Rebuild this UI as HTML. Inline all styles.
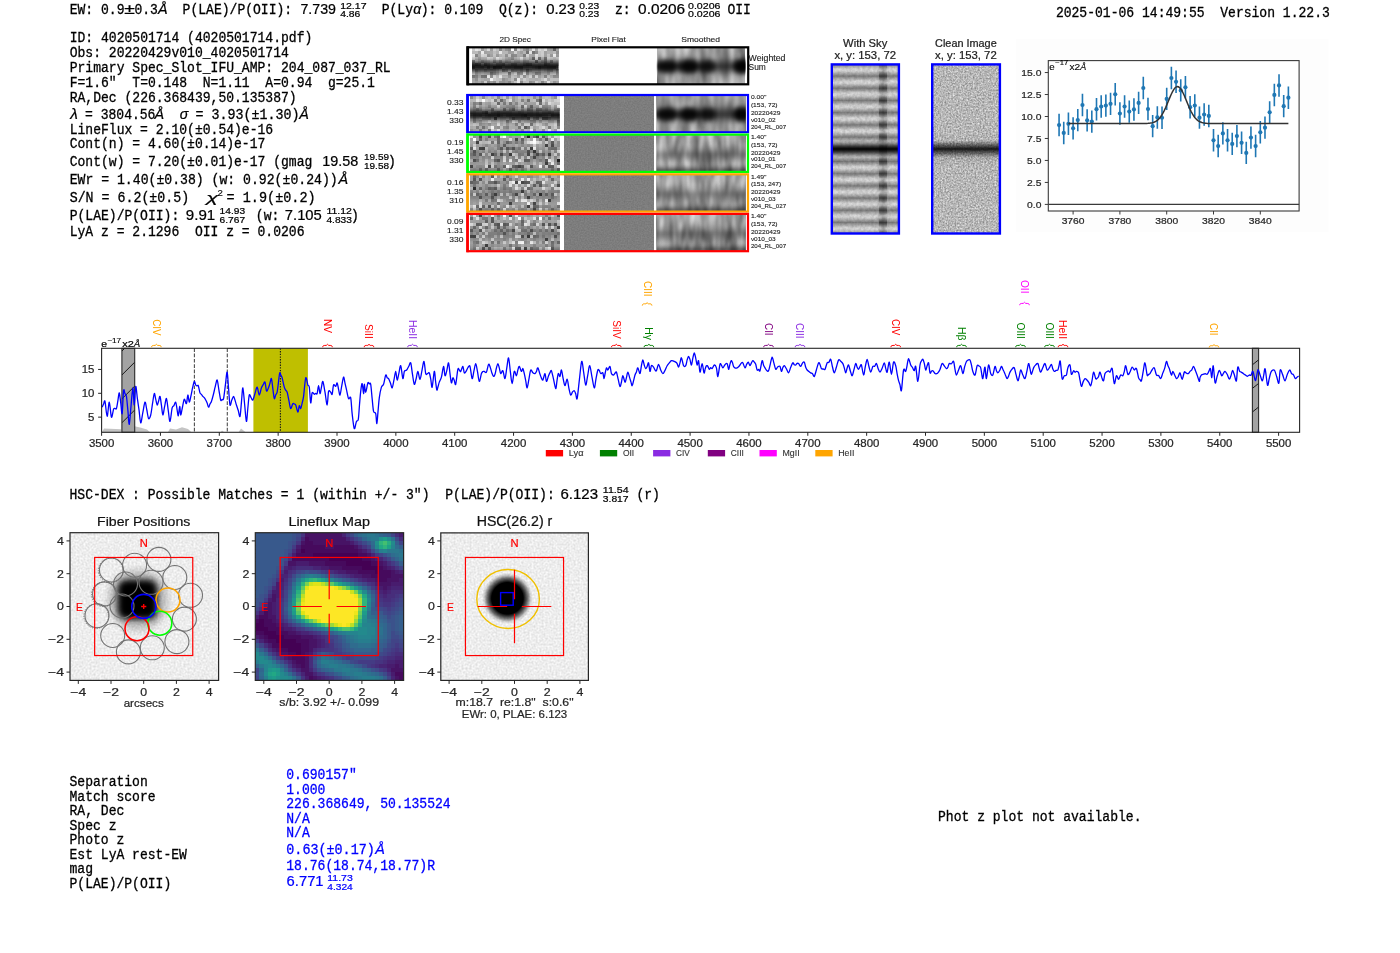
<!DOCTYPE html>
<html><head><meta charset="utf-8"><title>ELiXer report</title>
<style>html,body{margin:0;padding:0;background:#fff;overflow:hidden}svg{display:block}</style></head>
<body><svg width="1400" height="953" viewBox="0 0 1400 953">
<rect width="1400" height="953" fill="#fff"/>
<text x="69.7" y="13.9" font-family="Liberation Mono" font-size="14.04" fill="#000" stroke="#000" stroke-width="0.3" textLength="54.79" lengthAdjust="spacingAndGlyphs" text-anchor="start" xml:space="preserve">EW: 0.9</text>
<text x="124.3" y="13.9" font-family="Liberation Sans" font-size="13.78" fill="#000" stroke="#000" stroke-width="0.22" textLength="10.6" lengthAdjust="spacingAndGlyphs" text-anchor="start" xml:space="preserve">±</text>
<text x="134.4" y="13.9" font-family="Liberation Mono" font-size="14.04" fill="#000" stroke="#000" stroke-width="0.3" textLength="23.48" lengthAdjust="spacingAndGlyphs" text-anchor="start" xml:space="preserve">0.3</text>
<text x="158" y="13.9" font-family="Liberation Sans" font-size="13.78" fill="#000" stroke="#000" stroke-width="0.22" textLength="9.6" lengthAdjust="spacingAndGlyphs" text-anchor="start" xml:space="preserve" font-style="italic">Å</text>
<text x="182.6" y="13.9" font-family="Liberation Mono" font-size="14.04" fill="#000" stroke="#000" stroke-width="0.3" textLength="117.4" lengthAdjust="spacingAndGlyphs" text-anchor="start" xml:space="preserve">P(LAE)/P(OII): </text>
<text x="300.4" y="13.9" font-family="Liberation Sans" font-size="13.78" fill="#000" stroke="#000" stroke-width="0.22" textLength="35.6" lengthAdjust="spacingAndGlyphs" text-anchor="start" xml:space="preserve">7.739</text>
<text x="340.2" y="8.6" font-family="Liberation Sans" font-size="9.54" fill="#000" stroke="#000" stroke-width="0.22" textLength="26.3" lengthAdjust="spacingAndGlyphs" text-anchor="start" xml:space="preserve">12.17</text>
<text x="340.2" y="17.3" font-family="Liberation Sans" font-size="9.54" fill="#000" stroke="#000" stroke-width="0.22" textLength="20.2" lengthAdjust="spacingAndGlyphs" text-anchor="start" xml:space="preserve">4.86</text>
<text x="381.7" y="13.9" font-family="Liberation Mono" font-size="14.04" fill="#000" stroke="#000" stroke-width="0.3" textLength="31.31" lengthAdjust="spacingAndGlyphs" text-anchor="start" xml:space="preserve">P(Ly</text>
<text x="413.2" y="13.9" font-family="Liberation Sans" font-size="13.78" fill="#000" stroke="#000" stroke-width="0.22" textLength="8" lengthAdjust="spacingAndGlyphs" text-anchor="start" xml:space="preserve" font-style="italic">α</text>
<text x="420.7" y="13.9" font-family="Liberation Mono" font-size="14.04" fill="#000" stroke="#000" stroke-width="0.3" textLength="125.23" lengthAdjust="spacingAndGlyphs" text-anchor="start" xml:space="preserve">): 0.109  Q(z): </text>
<text x="546.2" y="13.9" font-family="Liberation Sans" font-size="13.78" fill="#000" stroke="#000" stroke-width="0.22" textLength="29" lengthAdjust="spacingAndGlyphs" text-anchor="start" xml:space="preserve">0.23</text>
<text x="579.3" y="8.6" font-family="Liberation Sans" font-size="9.54" fill="#000" stroke="#000" stroke-width="0.22" textLength="20" lengthAdjust="spacingAndGlyphs" text-anchor="start" xml:space="preserve">0.23</text>
<text x="579.3" y="17.3" font-family="Liberation Sans" font-size="9.54" fill="#000" stroke="#000" stroke-width="0.22" textLength="20" lengthAdjust="spacingAndGlyphs" text-anchor="start" xml:space="preserve">0.23</text>
<text x="615" y="13.9" font-family="Liberation Mono" font-size="14.04" fill="#000" stroke="#000" stroke-width="0.3" textLength="23.48" lengthAdjust="spacingAndGlyphs" text-anchor="start" xml:space="preserve">z: </text>
<text x="638.1" y="13.9" font-family="Liberation Sans" font-size="13.78" fill="#000" stroke="#000" stroke-width="0.22" textLength="47" lengthAdjust="spacingAndGlyphs" text-anchor="start" xml:space="preserve">0.0206</text>
<text x="688" y="8.6" font-family="Liberation Sans" font-size="9.54" fill="#000" stroke="#000" stroke-width="0.22" textLength="32.5" lengthAdjust="spacingAndGlyphs" text-anchor="start" xml:space="preserve">0.0206</text>
<text x="688" y="17.3" font-family="Liberation Sans" font-size="9.54" fill="#000" stroke="#000" stroke-width="0.22" textLength="32.5" lengthAdjust="spacingAndGlyphs" text-anchor="start" xml:space="preserve">0.0206</text>
<text x="727.4" y="13.9" font-family="Liberation Mono" font-size="14.04" fill="#000" stroke="#000" stroke-width="0.3" textLength="23.48" lengthAdjust="spacingAndGlyphs" text-anchor="start" xml:space="preserve">OII</text>
<text x="1055.9" y="16.9" font-family="Liberation Mono" font-size="14.04" fill="#000" stroke="#000" stroke-width="0.3" textLength="273.93" lengthAdjust="spacingAndGlyphs" text-anchor="start" xml:space="preserve">2025-01-06 14:49:55  Version 1.22.3</text>
<text x="69.7" y="42.4" font-family="Liberation Mono" font-size="14.04" fill="#000" stroke="#000" stroke-width="0.3" textLength="242.63" lengthAdjust="spacingAndGlyphs" text-anchor="start" xml:space="preserve">ID: 4020501714 (4020501714.pdf)</text>
<text x="69.7" y="56.8" font-family="Liberation Mono" font-size="14.04" fill="#000" stroke="#000" stroke-width="0.3" textLength="219.15" lengthAdjust="spacingAndGlyphs" text-anchor="start" xml:space="preserve">Obs: 20220429v010_4020501714</text>
<text x="69.7" y="72" font-family="Liberation Mono" font-size="14.04" fill="#000" stroke="#000" stroke-width="0.3" textLength="320.89" lengthAdjust="spacingAndGlyphs" text-anchor="start" xml:space="preserve">Primary Spec_Slot_IFU_AMP: 204_087_037_RL</text>
<text x="69.7" y="87" font-family="Liberation Mono" font-size="14.04" fill="#000" stroke="#000" stroke-width="0.3" textLength="305.24" lengthAdjust="spacingAndGlyphs" text-anchor="start" xml:space="preserve">F=1.6"  T=0.148  N=1.11  A=0.94  g=25.1</text>
<text x="69.7" y="102" font-family="Liberation Mono" font-size="14.04" fill="#000" stroke="#000" stroke-width="0.3" textLength="226.97" lengthAdjust="spacingAndGlyphs" text-anchor="start" xml:space="preserve">RA,Dec (226.368439,50.135387)</text>
<text x="69.7" y="133.5" font-family="Liberation Mono" font-size="14.04" fill="#000" stroke="#000" stroke-width="0.3" textLength="203.49" lengthAdjust="spacingAndGlyphs" text-anchor="start" xml:space="preserve">LineFlux = 2.10(±0.54)e-16</text>
<text x="69.7" y="148.2" font-family="Liberation Mono" font-size="14.04" fill="#000" stroke="#000" stroke-width="0.3" textLength="195.67" lengthAdjust="spacingAndGlyphs" text-anchor="start" xml:space="preserve">Cont(n) = 4.60(±0.14)e-17</text>
<text x="70.2" y="118.5" font-family="Liberation Sans" font-size="13.78" fill="#000" stroke="#000" stroke-width="0.22" textLength="7.6" lengthAdjust="spacingAndGlyphs" text-anchor="start" xml:space="preserve" font-style="italic">λ</text>
<text x="85" y="118.5" font-family="Liberation Mono" font-size="14.04" fill="#000" stroke="#000" stroke-width="0.3" textLength="70.44" lengthAdjust="spacingAndGlyphs" text-anchor="start" xml:space="preserve">= 3804.56</text>
<text x="154.5" y="118.5" font-family="Liberation Sans" font-size="13.78" fill="#000" stroke="#000" stroke-width="0.22" textLength="9.6" lengthAdjust="spacingAndGlyphs" text-anchor="start" xml:space="preserve" font-style="italic">Å</text>
<text x="179.8" y="118.5" font-family="Liberation Sans" font-size="13.78" fill="#000" stroke="#000" stroke-width="0.22" textLength="8.6" lengthAdjust="spacingAndGlyphs" text-anchor="start" xml:space="preserve" font-style="italic">σ</text>
<text x="195.5" y="118.5" font-family="Liberation Mono" font-size="14.04" fill="#000" stroke="#000" stroke-width="0.3" textLength="104" lengthAdjust="spacingAndGlyphs" text-anchor="start" xml:space="preserve">= 3.93(±1.30)</text>
<text x="299.2" y="118.5" font-family="Liberation Sans" font-size="13.78" fill="#000" stroke="#000" stroke-width="0.22" textLength="9.6" lengthAdjust="spacingAndGlyphs" text-anchor="start" xml:space="preserve" font-style="italic">Å</text>
<text x="69.7" y="166.3" font-family="Liberation Mono" font-size="14.04" fill="#000" stroke="#000" stroke-width="0.3" textLength="250.45" lengthAdjust="spacingAndGlyphs" text-anchor="start" xml:space="preserve">Cont(w) = 7.20(±0.01)e-17 (gmag </text>
<text x="322.3" y="166.3" font-family="Liberation Sans" font-size="13.78" fill="#000" stroke="#000" stroke-width="0.22" textLength="36" lengthAdjust="spacingAndGlyphs" text-anchor="start" xml:space="preserve">19.58</text>
<text x="364" y="159.6" font-family="Liberation Sans" font-size="9.54" fill="#000" stroke="#000" stroke-width="0.22" textLength="25" lengthAdjust="spacingAndGlyphs" text-anchor="start" xml:space="preserve">19.59</text>
<text x="364" y="168.6" font-family="Liberation Sans" font-size="9.54" fill="#000" stroke="#000" stroke-width="0.22" textLength="25" lengthAdjust="spacingAndGlyphs" text-anchor="start" xml:space="preserve">19.58</text>
<text x="388" y="166.3" font-family="Liberation Mono" font-size="14.04" fill="#000" stroke="#000" stroke-width="0.3" textLength="7.83" lengthAdjust="spacingAndGlyphs" text-anchor="start" xml:space="preserve">)</text>
<text x="69.7" y="184.4" font-family="Liberation Mono" font-size="14.04" fill="#000" stroke="#000" stroke-width="0.3" textLength="268" lengthAdjust="spacingAndGlyphs" text-anchor="start" xml:space="preserve">EWr = 1.40(±0.38) (w: 0.92(±0.24))</text>
<text x="338.4" y="184.4" font-family="Liberation Sans" font-size="13.78" fill="#000" stroke="#000" stroke-width="0.22" textLength="9.6" lengthAdjust="spacingAndGlyphs" text-anchor="start" xml:space="preserve" font-style="italic">Å</text>
<text x="69.7" y="201.7" font-family="Liberation Mono" font-size="14.04" fill="#000" stroke="#000" stroke-width="0.3" textLength="119.5" lengthAdjust="spacingAndGlyphs" text-anchor="start" xml:space="preserve">S/N = 6.2(±0.5)</text>
<text x="206.3" y="202.3" font-family="Liberation Sans" font-size="13.25" fill="#000" stroke="#000" stroke-width="0.22" textLength="12" lengthAdjust="spacingAndGlyphs" text-anchor="start" xml:space="preserve" font-style="italic">χ</text>
<text x="217.6" y="196.3" font-family="Liberation Sans" font-size="9.33" fill="#000" stroke="#000" stroke-width="0.12" textLength="5.4" lengthAdjust="spacingAndGlyphs" text-anchor="start" xml:space="preserve">2</text>
<text x="226.6" y="201.7" font-family="Liberation Mono" font-size="14.04" fill="#000" stroke="#000" stroke-width="0.3" textLength="89" lengthAdjust="spacingAndGlyphs" text-anchor="start" xml:space="preserve">= 1.9(±0.2)</text>
<text x="69.7" y="220" font-family="Liberation Mono" font-size="14.04" fill="#000" stroke="#000" stroke-width="0.3" textLength="117.4" lengthAdjust="spacingAndGlyphs" text-anchor="start" xml:space="preserve">P(LAE)/P(OII): </text>
<text x="185.8" y="220" font-family="Liberation Sans" font-size="13.78" fill="#000" stroke="#000" stroke-width="0.22" textLength="29.4" lengthAdjust="spacingAndGlyphs" text-anchor="start" xml:space="preserve">9.91</text>
<text x="219.6" y="213.6" font-family="Liberation Sans" font-size="9.54" fill="#000" stroke="#000" stroke-width="0.22" textLength="25.5" lengthAdjust="spacingAndGlyphs" text-anchor="start" xml:space="preserve">14.93</text>
<text x="219.6" y="222.6" font-family="Liberation Sans" font-size="9.54" fill="#000" stroke="#000" stroke-width="0.22" textLength="25.5" lengthAdjust="spacingAndGlyphs" text-anchor="start" xml:space="preserve">6.767</text>
<text x="248" y="220" font-family="Liberation Mono" font-size="14.04" fill="#000" stroke="#000" stroke-width="0.3" textLength="39.13" lengthAdjust="spacingAndGlyphs" text-anchor="start" xml:space="preserve"> (w: </text>
<text x="284.8" y="220" font-family="Liberation Sans" font-size="13.78" fill="#000" stroke="#000" stroke-width="0.22" textLength="37" lengthAdjust="spacingAndGlyphs" text-anchor="start" xml:space="preserve">7.105</text>
<text x="326.4" y="213.6" font-family="Liberation Sans" font-size="9.54" fill="#000" stroke="#000" stroke-width="0.22" textLength="25.5" lengthAdjust="spacingAndGlyphs" text-anchor="start" xml:space="preserve">11.12</text>
<text x="326.4" y="222.6" font-family="Liberation Sans" font-size="9.54" fill="#000" stroke="#000" stroke-width="0.22" textLength="25.5" lengthAdjust="spacingAndGlyphs" text-anchor="start" xml:space="preserve">4.833</text>
<text x="351" y="220" font-family="Liberation Mono" font-size="14.04" fill="#000" stroke="#000" stroke-width="0.3" textLength="7.83" lengthAdjust="spacingAndGlyphs" text-anchor="start" xml:space="preserve">)</text>
<text x="69.7" y="236.4" font-family="Liberation Mono" font-size="14.04" fill="#000" stroke="#000" stroke-width="0.3" textLength="234.8" lengthAdjust="spacingAndGlyphs" text-anchor="start" xml:space="preserve">LyA z = 2.1296  OII z = 0.0206</text>
<text x="69.5" y="498.9" font-family="Liberation Mono" font-size="14.04" fill="#000" stroke="#000" stroke-width="0.3" textLength="493.08" lengthAdjust="spacingAndGlyphs" text-anchor="start" xml:space="preserve">HSC-DEX : Possible Matches = 1 (within +/- 3")  P(LAE)/P(OII): </text>
<text x="560.5" y="498.9" font-family="Liberation Sans" font-size="13.78" fill="#000" stroke="#000" stroke-width="0.22" textLength="37.5" lengthAdjust="spacingAndGlyphs" text-anchor="start" xml:space="preserve">6.123</text>
<text x="602.8" y="493.4" font-family="Liberation Sans" font-size="9.54" fill="#000" stroke="#000" stroke-width="0.22" textLength="25.8" lengthAdjust="spacingAndGlyphs" text-anchor="start" xml:space="preserve">11.54</text>
<text x="602.8" y="502.4" font-family="Liberation Sans" font-size="9.54" fill="#000" stroke="#000" stroke-width="0.22" textLength="25.8" lengthAdjust="spacingAndGlyphs" text-anchor="start" xml:space="preserve">3.817</text>
<text x="628.6" y="498.9" font-family="Liberation Mono" font-size="14.04" fill="#000" stroke="#000" stroke-width="0.3" textLength="31.31" lengthAdjust="spacingAndGlyphs" text-anchor="start" xml:space="preserve"> (r)</text>
<text x="69.5" y="786.2" font-family="Liberation Mono" font-size="14.04" fill="#000" stroke="#000" stroke-width="0.3" textLength="78.27" lengthAdjust="spacingAndGlyphs" text-anchor="start" xml:space="preserve">Separation</text>
<text x="69.5" y="800.5" font-family="Liberation Mono" font-size="14.04" fill="#000" stroke="#000" stroke-width="0.3" textLength="86.09" lengthAdjust="spacingAndGlyphs" text-anchor="start" xml:space="preserve">Match score</text>
<text x="69.5" y="815.3" font-family="Liberation Mono" font-size="14.04" fill="#000" stroke="#000" stroke-width="0.3" textLength="54.79" lengthAdjust="spacingAndGlyphs" text-anchor="start" xml:space="preserve">RA, Dec</text>
<text x="69.5" y="829.8" font-family="Liberation Mono" font-size="14.04" fill="#000" stroke="#000" stroke-width="0.3" textLength="46.96" lengthAdjust="spacingAndGlyphs" text-anchor="start" xml:space="preserve">Spec z</text>
<text x="69.5" y="844.4" font-family="Liberation Mono" font-size="14.04" fill="#000" stroke="#000" stroke-width="0.3" textLength="54.79" lengthAdjust="spacingAndGlyphs" text-anchor="start" xml:space="preserve">Photo z</text>
<text x="69.5" y="858.8" font-family="Liberation Mono" font-size="14.04" fill="#000" stroke="#000" stroke-width="0.3" textLength="117.4" lengthAdjust="spacingAndGlyphs" text-anchor="start" xml:space="preserve">Est LyA rest-EW</text>
<text x="69.5" y="873.3" font-family="Liberation Mono" font-size="14.04" fill="#000" stroke="#000" stroke-width="0.3" textLength="23.48" lengthAdjust="spacingAndGlyphs" text-anchor="start" xml:space="preserve">mag</text>
<text x="69.5" y="888.4" font-family="Liberation Mono" font-size="14.04" fill="#000" stroke="#000" stroke-width="0.3" textLength="101.75" lengthAdjust="spacingAndGlyphs" text-anchor="start" xml:space="preserve">P(LAE)/P(OII)</text>
<text x="286.3" y="779.1" font-family="Liberation Mono" font-size="14.04" fill="#0000ff" stroke="#0000ff" stroke-width="0.3" textLength="70.44" lengthAdjust="spacingAndGlyphs" text-anchor="start" xml:space="preserve">0.690157"</text>
<text x="286.3" y="793.5" font-family="Liberation Mono" font-size="14.04" fill="#0000ff" stroke="#0000ff" stroke-width="0.3" textLength="39.13" lengthAdjust="spacingAndGlyphs" text-anchor="start" xml:space="preserve">1.000</text>
<text x="286.3" y="808.2" font-family="Liberation Mono" font-size="14.04" fill="#0000ff" stroke="#0000ff" stroke-width="0.3" textLength="164.36" lengthAdjust="spacingAndGlyphs" text-anchor="start" xml:space="preserve">226.368649, 50.135524</text>
<text x="286.3" y="822.6" font-family="Liberation Mono" font-size="14.04" fill="#0000ff" stroke="#0000ff" stroke-width="0.3" textLength="23.48" lengthAdjust="spacingAndGlyphs" text-anchor="start" xml:space="preserve">N/A</text>
<text x="286.3" y="837.2" font-family="Liberation Mono" font-size="14.04" fill="#0000ff" stroke="#0000ff" stroke-width="0.3" textLength="23.48" lengthAdjust="spacingAndGlyphs" text-anchor="start" xml:space="preserve">N/A</text>
<text x="286.3" y="869.9" font-family="Liberation Mono" font-size="14.04" fill="#0000ff" stroke="#0000ff" stroke-width="0.3" textLength="148.71" lengthAdjust="spacingAndGlyphs" text-anchor="start" xml:space="preserve">18.76(18.74,18.77)R</text>
<text x="286.3" y="853.8" font-family="Liberation Mono" font-size="14.04" fill="#0000ff" stroke="#0000ff" stroke-width="0.3" textLength="88.5" lengthAdjust="spacingAndGlyphs" text-anchor="start" xml:space="preserve">0.63(±0.17)</text>
<text x="375.2" y="853.8" font-family="Liberation Sans" font-size="13.78" fill="#0000ff" stroke="#0000ff" stroke-width="0.22" textLength="9.6" lengthAdjust="spacingAndGlyphs" text-anchor="start" xml:space="preserve" font-style="italic">Å</text>
<text x="286.6" y="886.1" font-family="Liberation Sans" font-size="13.78" fill="#0000ff" stroke="#0000ff" stroke-width="0.22" textLength="37" lengthAdjust="spacingAndGlyphs" text-anchor="start" xml:space="preserve">6.771</text>
<text x="327.3" y="881.2" font-family="Liberation Sans" font-size="9.54" fill="#0000ff" stroke="#0000ff" stroke-width="0.22" textLength="25.5" lengthAdjust="spacingAndGlyphs" text-anchor="start" xml:space="preserve">11.73</text>
<text x="327.3" y="890" font-family="Liberation Sans" font-size="9.54" fill="#0000ff" stroke="#0000ff" stroke-width="0.22" textLength="25.5" lengthAdjust="spacingAndGlyphs" text-anchor="start" xml:space="preserve">4.324</text>
<text x="938" y="821.4" font-family="Liberation Mono" font-size="14.04" fill="#000" stroke="#000" stroke-width="0.3" textLength="203.49" lengthAdjust="spacingAndGlyphs" text-anchor="start" xml:space="preserve">Phot z plot not available.</text>
<polygon points="102,432.3 104,428.6 121.4,429.2 121.4,432.3" fill="#c4c4c4"/>
<polygon points="134.7,432.3 134.7,426.2 140,427.5 147,429.5 150,432.3" fill="#c4c4c4"/>
<polygon points="167.9,432.3 170,428.5 176,429.4 182,427.3 188,429 191.4,432.3" fill="#c4c4c4"/>
<polygon points="220.7,432.3 222,430.5 224.3,432.3" fill="#c4c4c4"/>
<polygon points="238.6,432.3 241,428.6 245.7,432.3" fill="#c4c4c4"/>
<polygon points="121.9,432.3 123,428.5 134.7,426.5 134.7,432.3" fill="#c4c4c4"/>
<rect x="253.4" y="348.3" width="54.5" height="84" fill="#bfbf00"/>
<rect x="121.9" y="348.3" width="12.8" height="84" fill="#a3a3a3" stroke="#2a2a2a" stroke-width="1.1"/>
<clipPath id="hb121"><rect x="121.9" y="348.3" width="12.8" height="84"/></clipPath>
<path d="M121.9,422.8 L134.7,410 M121.9,398.9 L134.7,386.1 M121.9,375 L134.7,362.2 M121.9,351.1 L134.7,338.3 M121.9,327.2 L134.7,314.4 " stroke="#1a1a1a" stroke-width="1" clip-path="url(#hb121)"/>
<rect x="1252.4" y="348.3" width="6.2" height="84" fill="#a3a3a3" stroke="#2a2a2a" stroke-width="1.1"/>
<clipPath id="hb1252"><rect x="1252.4" y="348.3" width="6.2" height="84"/></clipPath>
<path d="M1252.4,412 L1258.6,407.04 M1252.4,388.4 L1258.6,383.44 M1252.4,364.8 L1258.6,359.84 M1252.4,341.2 L1258.6,336.24 M1252.4,317.6 L1258.6,312.64 " stroke="#1a1a1a" stroke-width="1" clip-path="url(#hb1252)"/>
<line x1="194.4" y1="348.3" x2="194.4" y2="432.3" stroke="#4d4d4d" stroke-width="1.1" stroke-dasharray="3.7,1.6"/>
<line x1="227.3" y1="348.3" x2="227.3" y2="432.3" stroke="#4d4d4d" stroke-width="1.1" stroke-dasharray="3.7,1.6"/>
<line x1="280.4" y1="348.3" x2="280.4" y2="432.3" stroke="#1a1a1a" stroke-width="1.1" stroke-dasharray="1.4,1.3"/>
<path d="M102.14,407.14 C102.37,406.65 103.11,404.95 103.57,404.04 C104.03,403.12 104.43,399.45 105,401.43 C105.57,403.41 106.46,416.31 107.14,416.43 C107.83,416.54 108.6,402.03 109.29,402.14 C109.97,402.26 110.74,416 111.43,417.14 C112.11,418.29 113,410.68 113.57,409.29 C114.14,407.89 114.54,408.55 115,408.44 C115.46,408.33 115.97,409.77 116.43,408.57 C116.89,407.37 117.4,403.44 117.86,400.93 C118.31,398.41 118.83,392.59 119.29,392.86 C119.74,393.13 120.26,399.3 120.71,402.62 C121.17,405.93 121.69,415.48 122.14,413.57 C122.6,411.67 123.11,393.91 123.57,390.71 C124.03,387.52 124.54,392.71 125,393.62 C125.46,394.54 125.97,393.78 126.43,396.43 C126.89,399.08 127.4,405.71 127.86,410.17 C128.31,414.63 128.77,425.04 129.29,424.29 C129.8,423.53 130.5,411.28 131.07,405.45 C131.64,399.62 132.34,387.93 132.86,387.86 C133.37,387.78 133.83,405.23 134.29,405 C134.74,404.77 135.22,387.46 135.71,386.43 C136.21,385.4 136.85,394.8 137.38,398.58 C137.91,402.36 138.51,406.18 139.05,410.07 C139.58,413.95 140.1,422.48 140.71,422.86 C141.32,423.23 142.17,415.72 142.86,412.41 C143.54,409.09 144.37,402.57 145,402.14 C145.63,401.72 146.21,407.13 146.79,409.75 C147.36,412.38 147.94,417.73 148.57,418.57 C149.2,419.41 150.09,417.38 150.71,415 C151.34,412.62 151.93,407.14 152.5,403.71 C153.07,400.28 153.77,394.3 154.29,393.57 C154.8,392.85 155.26,397.35 155.71,399.18 C156.17,401.01 156.69,404.68 157.14,405 C157.6,405.32 158.11,402.54 158.57,401.17 C159.03,399.8 159.54,395.79 160,396.43 C160.46,397.07 160.97,402.22 161.43,405.19 C161.89,408.16 162.34,414.81 162.86,415 C163.37,415.19 164.07,409.03 164.64,406.4 C165.21,403.77 165.86,397.97 166.43,398.57 C167,399.18 167.64,406.52 168.21,410.18 C168.79,413.84 169.37,421.8 170,421.43 C170.63,421.06 171.51,410.39 172.14,407.86 C172.77,405.33 173.36,406.54 173.93,405.63 C174.5,404.71 175.22,401.6 175.71,402.14 C176.21,402.69 176.59,406.87 177,409.04 C177.41,411.21 177.85,416.13 178.29,415.71 C178.72,415.3 179.33,406.54 179.71,406.43 C180.1,406.31 180.27,414.91 180.71,415 C181.16,415.09 181.93,409.51 182.5,407 C183.07,404.48 183.66,399.83 184.29,399.29 C184.91,398.74 185.86,404.26 186.43,403.57 C187,402.89 187.4,395.23 187.86,395 C188.31,394.77 188.79,402 189.29,402.14 C189.78,402.29 190.42,398.22 190.95,395.9 C191.49,393.59 192.09,390.01 192.62,387.7 C193.15,385.38 193.79,381.86 194.29,381.43 C194.78,381 195.28,384.29 195.71,385 C196.15,385.71 196.59,385.74 197,385.86 C197.41,385.97 197.81,384.59 198.29,385.71 C198.77,386.83 199.5,391.48 200,392.86 C200.5,394.24 200.97,393.78 201.43,394.35 C201.89,394.92 202.4,395.89 202.86,396.43 C203.31,396.97 203.83,397.14 204.29,397.72 C204.74,398.29 205.26,399.15 205.71,400 C206.17,400.85 206.69,401.89 207.14,403.04 C207.6,404.18 208.11,406.99 208.57,407.14 C209.03,407.3 209.54,404.93 210,404.02 C210.46,403.1 210.9,402.91 211.43,401.43 C211.96,399.94 212.72,397.09 213.33,394.73 C213.94,392.37 214.63,389.05 215.24,386.7 C215.85,384.34 216.55,379.45 217.14,380 C217.73,380.55 218.36,386.91 218.93,390.11 C219.5,393.31 220.2,398.5 220.71,400 C221.23,401.5 221.69,399.71 222.14,399.48 C222.6,399.25 223.06,400.86 223.57,398.57 C224.09,396.28 224.79,389.41 225.36,385.18 C225.93,380.95 226.63,371.59 227.14,372.14 C227.66,372.7 228.11,383.38 228.57,388.64 C229.03,393.9 229.49,403.17 230,405 C230.51,406.83 231.21,401.47 231.79,400.1 C232.36,398.73 233.06,396.43 233.57,396.43 C234.09,396.43 234.54,398.73 235,400.1 C235.46,401.47 235.91,403.37 236.43,405 C236.94,406.63 237.64,408.47 238.21,410.3 C238.79,412.13 239.49,417.69 240,416.43 C240.51,415.16 240.97,406.97 241.43,402.4 C241.89,397.82 242.34,387.51 242.86,387.86 C243.37,388.2 244.07,399.17 244.64,404.54 C245.21,409.91 245.91,420.88 246.43,421.43 C246.94,421.97 247.4,412.18 247.86,407.95 C248.31,403.73 248.77,396.65 249.29,395 C249.8,393.35 250.5,396.82 251.07,397.62 C251.64,398.42 252.23,400.66 252.86,400 C253.49,399.34 254.31,395.56 255,393.51 C255.69,391.45 256.46,386.9 257.14,387.14 C257.83,387.38 258.6,394.89 259.29,395 C259.97,395.11 260.8,389.5 261.43,387.86 C262.06,386.21 262.64,385.63 263.21,384.72 C263.79,383.81 264.49,381.18 265,382.14 C265.51,383.1 265.97,389.57 266.43,390.71 C266.89,391.86 267.34,390.31 267.86,389.29 C268.37,388.27 269.07,386.05 269.64,384.34 C270.21,382.63 270.91,377.85 271.43,378.57 C271.94,379.29 272.4,385.65 272.86,388.85 C273.31,392.05 273.83,397.59 274.29,398.57 C274.74,399.56 275.26,396.03 275.71,395 C276.17,393.97 276.71,394.13 277.14,392.14 C277.58,390.16 278.02,385.69 278.43,382.6 C278.84,379.52 279.31,374.01 279.71,372.86 C280.11,371.7 280.54,374.59 280.93,375.39 C281.32,376.19 281.61,375.98 282.14,377.86 C282.68,379.74 283.71,385.17 284.29,387.14 C284.86,389.11 285.26,389.37 285.71,390.17 C286.17,390.97 286.63,390.46 287.14,392.14 C287.66,393.82 288.36,398.05 288.93,400.68 C289.5,403.31 290.09,408.11 290.71,408.57 C291.34,409.03 292.29,404.3 292.86,403.57 C293.43,402.84 293.83,403.76 294.29,403.99 C294.74,404.22 295.14,403.7 295.71,405 C296.29,406.3 297.29,412.03 297.86,412.14 C298.43,412.26 298.83,406.29 299.29,405.71 C299.74,405.14 300.26,408.98 300.71,408.57 C301.17,408.16 301.69,405.12 302.14,403.17 C302.6,401.23 303,400.48 303.57,396.43 C304.14,392.38 305.03,379.69 305.71,377.86 C306.4,376.03 307.29,383.51 307.86,385 C308.43,386.49 308.83,384.29 309.29,387.14 C309.74,390 310.26,401.94 310.71,402.86 C311.17,403.77 311.57,394.23 312.14,392.86 C312.71,391.49 313.71,394.2 314.29,394.29 C314.86,394.37 315.26,393.51 315.71,393.39 C316.17,393.28 316.69,394.8 317.14,393.57 C317.6,392.34 318.11,385.71 318.57,385.71 C319.03,385.71 319.54,393.3 320,393.57 C320.46,393.84 320.97,389.33 321.43,387.39 C321.89,385.44 322.29,380.67 322.86,381.43 C323.43,382.19 324.31,388.37 325,392.14 C325.69,395.91 326.57,405.11 327.14,405 C327.71,404.89 328,393.49 328.57,391.43 C329.14,389.37 330.14,391.69 330.71,392.14 C331.29,392.6 331.69,395.43 332.14,394.29 C332.6,393.14 333,386.26 333.57,385 C334.14,383.74 335.14,386.77 335.71,386.43 C336.29,386.09 336.69,382.4 337.14,382.86 C337.6,383.31 338.11,387.35 338.57,389.29 C339.03,391.23 339.49,395.59 340,395 C340.51,394.41 341.21,388.44 341.79,385.58 C342.36,382.73 343.06,377.52 343.57,377.14 C344.09,376.76 344.54,381.26 345,383.2 C345.46,385.14 345.86,386.83 346.43,389.29 C347,391.75 347.89,397.2 348.57,398.57 C349.26,399.94 350.14,395.46 350.71,397.86 C351.29,400.26 351.57,408.66 352.14,413.57 C352.71,418.49 353.6,427.31 354.29,428.57 C354.97,429.83 355.79,422.91 356.43,421.43 C357.07,419.94 357.79,421.96 358.29,419.29 C358.78,416.61 359.11,409.17 359.5,404.71 C359.89,400.25 360.29,394.81 360.71,391.43 C361.14,388.05 361.69,383.23 362.14,383.57 C362.6,383.91 363.23,393.46 363.57,393.57 C363.91,393.69 363.94,384.51 364.29,384.29 C364.63,384.06 365.14,392.37 365.71,392.14 C366.29,391.91 367.29,384.19 367.86,382.86 C368.43,381.52 368.83,383.58 369.29,383.81 C369.74,384.04 370.26,381.93 370.71,384.29 C371.17,386.64 371.69,394.2 372.14,398.55 C372.6,402.89 373,409.02 373.57,411.43 C374.14,413.83 375.19,411.63 375.71,413.57 C376.24,415.51 376.48,424 376.86,423.57 C377.23,423.14 377.68,415.02 378.07,410.9 C378.46,406.79 378.75,401.66 379.29,397.86 C379.82,394.06 380.74,389.31 381.43,387.14 C382.11,384.97 382.89,386.23 383.57,384.29 C384.26,382.34 385.14,376.04 385.71,375 C386.29,373.96 386.69,377.19 387.14,377.76 C387.6,378.33 388.06,377.78 388.57,378.57 C389.09,379.37 389.79,381.24 390.36,382.73 C390.93,384.22 391.57,388.27 392.14,387.86 C392.71,387.44 393.36,382.78 393.93,380.15 C394.5,377.52 395.2,371.45 395.71,371.43 C396.23,371.4 396.63,379.73 397.14,380 C397.66,380.27 398.36,375.39 398.93,373.1 C399.5,370.82 400.09,364.84 400.71,365.71 C401.34,366.59 402.29,377.66 402.86,378.57 C403.43,379.49 403.83,372.71 404.29,371.43 C404.74,370.15 405.26,370.91 405.71,370.56 C406.17,370.22 406.63,370.02 407.14,369.29 C407.66,368.55 408.36,366.99 408.93,365.96 C409.5,364.93 410.14,361.5 410.71,362.86 C411.29,364.22 411.93,371.03 412.5,374.46 C413.07,377.88 413.71,383.56 414.29,384.29 C414.86,385.01 415.5,381.07 416.07,379.01 C416.64,376.96 417.23,371.38 417.86,371.43 C418.49,371.47 419.34,379.47 420,379.29 C420.66,379.1 421.36,373.15 422,370.29 C422.64,367.43 423.41,360.9 424,361.43 C424.59,361.95 425.15,371.62 425.71,373.57 C426.27,375.53 426.93,373.76 427.5,373.64 C428.07,373.53 428.77,372.02 429.29,372.86 C429.8,373.69 430.26,376.57 430.71,378.86 C431.17,381.14 431.57,388.33 432.14,387.14 C432.71,385.95 433.74,372.37 434.29,371.43 C434.83,370.48 435.16,378.27 435.57,381.24 C435.98,384.21 436.46,389.17 436.86,390 C437.26,390.83 437.68,387.71 438.07,386.45 C438.46,385.2 438.75,383.63 439.29,382.14 C439.82,380.65 440.74,379.66 441.43,377.14 C442.11,374.63 443,366.66 443.57,366.43 C444.14,366.2 444.49,375.05 445,375.71 C445.51,376.38 446.21,372.62 446.79,370.57 C447.36,368.51 448.06,362.36 448.57,362.86 C449.09,363.36 449.54,370.49 450,373.69 C450.46,376.89 450.97,382.19 451.43,382.86 C451.89,383.52 452.4,378.23 452.86,377.86 C453.31,377.48 453.83,379.48 454.29,380.51 C454.74,381.54 455.14,386.08 455.71,384.29 C456.29,382.49 457.29,371.56 457.86,369.29 C458.43,367.01 458.83,369.72 459.29,370.06 C459.74,370.4 460.14,372.01 460.71,371.43 C461.29,370.85 462.29,366.2 462.86,366.43 C463.43,366.66 463.75,372.1 464.29,372.86 C464.82,373.61 465.58,372.04 466.19,371.15 C466.8,370.27 467.49,368.09 468.1,367.33 C468.7,366.57 469.35,364.63 470,366.43 C470.65,368.23 471.51,377.84 472.14,378.57 C472.77,379.3 473.36,373.37 473.93,370.97 C474.5,368.57 475.14,363.47 475.71,363.57 C476.29,363.68 476.93,368.78 477.5,371.64 C478.07,374.49 478.66,381.12 479.29,381.43 C479.91,381.74 480.86,375.16 481.43,373.57 C482,371.98 482.4,371.85 482.86,371.5 C483.31,371.16 483.71,371.33 484.29,371.43 C484.86,371.53 485.74,373.29 486.43,372.14 C487.11,371 487.96,365.08 488.57,364.29 C489.18,363.49 489.7,365.78 490.24,367.19 C490.77,368.59 491.37,371.6 491.9,373.08 C492.44,374.56 493.08,376.24 493.57,376.43 C494.07,376.62 494.54,375.64 495,374.29 C495.46,372.93 495.97,369.68 496.43,367.96 C496.89,366.25 497.4,363.58 497.86,363.57 C498.31,363.56 498.83,366.32 499.29,367.92 C499.74,369.52 500.14,373.12 500.71,373.57 C501.29,374.02 502.17,369.91 502.86,370.71 C503.54,371.51 504.37,379.02 505,378.57 C505.63,378.13 506.21,371.25 506.79,367.93 C507.36,364.62 508,357.26 508.57,357.86 C509.14,358.46 509.79,367.57 510.36,371.68 C510.93,375.79 511.51,383.61 512.14,383.57 C512.77,383.53 513.6,372.69 514.29,371.43 C514.97,370.17 515.86,375.95 516.43,375.71 C517,375.48 517.4,371.47 517.86,369.98 C518.31,368.5 518.71,366.2 519.29,366.43 C519.86,366.66 520.86,371.09 521.43,371.43 C522,371.77 522.4,368.23 522.86,368.57 C523.31,368.91 523.83,371.65 524.29,373.57 C524.74,375.49 525.26,378.3 525.71,380.58 C526.17,382.87 526.63,388.1 527.14,387.86 C527.66,387.61 528.36,381.91 528.93,379.06 C529.5,376.2 530.09,371 530.71,370 C531.34,369 532.17,372.21 532.86,372.78 C533.54,373.35 534.43,373.77 535,373.57 C535.57,373.37 535.97,372.46 536.43,371.54 C536.89,370.63 537.29,367.42 537.86,367.86 C538.43,368.3 539.43,372.65 540,374.29 C540.57,375.92 540.97,377.17 541.43,378.09 C541.89,379 542.29,380.72 542.86,380 C543.43,379.28 544.43,373.34 545,373.57 C545.57,373.8 545.86,381.09 546.43,381.43 C547,381.77 548,377.12 548.57,375.71 C549.14,374.31 549.54,373.44 550,372.64 C550.46,371.84 550.86,369.63 551.43,370.71 C552,371.8 552.89,376.57 553.57,379.42 C554.26,382.28 555.17,388.37 555.71,388.57 C556.26,388.78 556.59,383.1 557,380.7 C557.41,378.3 557.81,374.26 558.29,373.57 C558.77,372.89 559.5,377 560,376.43 C560.5,375.86 560.91,369.61 561.43,370 C561.94,370.39 562.64,376.34 563.21,378.86 C563.79,381.37 564.37,385.65 565,385.71 C565.63,385.78 566.51,378.87 567.14,379.29 C567.77,379.7 568.36,385.82 568.93,388.33 C569.5,390.85 570.14,394.42 570.71,395 C571.29,395.58 571.93,392.64 572.5,391.95 C573.07,391.26 573.77,390.42 574.29,390.71 C574.8,391.01 575.26,392.54 575.71,393.8 C576.17,395.06 576.55,400.89 577.14,398.57 C577.74,396.25 578.7,385.25 579.43,379.3 C580.16,373.36 581.03,362.51 581.71,361.43 C582.4,360.34 583.07,368.75 583.71,372.52 C584.35,376.29 585.07,384.55 585.71,385 C586.35,385.45 587.07,378.4 587.71,375.32 C588.35,372.23 589.03,365.44 589.71,365.71 C590.4,365.99 591.27,373.47 592,377.02 C592.73,380.56 593.63,387.65 594.29,387.86 C594.94,388.06 595.5,381.17 596.07,378.31 C596.64,375.45 597.34,371.25 597.86,370 C598.37,368.75 598.83,369.92 599.29,370.5 C599.74,371.07 600.14,373.19 600.71,373.57 C601.29,373.95 602.33,372.06 602.86,372.86 C603.38,373.66 603.62,378.55 604,378.57 C604.38,378.59 604.83,374.72 605.21,373 C605.6,371.29 606.01,368.34 606.43,367.86 C606.85,367.38 607.29,370.23 607.86,370 C608.43,369.77 609.43,365.86 610,366.43 C610.57,367 610.86,372.2 611.43,373.57 C612,374.94 613,375.05 613.57,375 C614.14,374.95 614.54,373.69 615,373.23 C615.46,372.77 615.91,371.15 616.43,372.14 C616.94,373.14 617.64,377.17 618.21,379.46 C618.79,381.74 619.49,385.98 620,386.43 C620.51,386.88 620.97,383.96 621.43,382.25 C621.89,380.54 622.29,375.73 622.86,375.71 C623.43,375.7 624.43,381.84 625,382.14 C625.57,382.45 625.97,379.24 626.43,377.64 C626.89,376.04 627.33,372.11 627.86,372.14 C628.38,372.18 629.22,376.31 629.71,377.86 C630.21,379.41 630.54,380.57 630.93,381.83 C631.32,383.08 631.72,385.9 632.14,385.71 C632.57,385.53 633.11,382.38 633.57,380.66 C634.03,378.95 634.54,376.4 635,375 C635.46,373.6 635.97,373.03 636.43,371.89 C636.89,370.74 637.29,367.59 637.86,367.86 C638.43,368.13 639.43,373.93 640,373.57 C640.57,373.21 640.97,367.8 641.43,365.63 C641.89,363.45 642.4,360.05 642.86,360 C643.31,359.95 643.83,363.95 644.29,365.32 C644.74,366.7 645.26,368.39 645.71,368.57 C646.17,368.75 646.69,367.36 647.14,366.44 C647.6,365.53 648.11,362.06 648.57,362.86 C649.03,363.65 649.54,370.97 650,371.43 C650.46,371.89 650.86,366.4 651.43,365.71 C652,365.03 653,366.47 653.57,367.14 C654.14,367.81 654.54,369.33 655,369.9 C655.46,370.47 655.86,371.61 656.43,370.71 C657,369.82 657.89,364.4 658.57,364.29 C659.26,364.17 660.03,368.51 660.71,370 C661.4,371.49 662.17,373.5 662.86,373.57 C663.54,373.64 664.31,371.67 665,370.42 C665.69,369.16 666.46,366.91 667.14,365.71 C667.83,364.52 668.6,363.73 669.29,362.93 C669.97,362.13 670.74,361 671.43,360.71 C672.11,360.43 672.89,360.94 673.57,361.17 C674.26,361.39 675.14,361.75 675.71,362.14 C676.29,362.53 676.69,362.81 677.14,363.61 C677.6,364.41 678.11,367.26 678.57,367.14 C679.03,367.02 679.54,364.33 680,362.85 C680.46,361.36 680.86,357.4 681.43,357.86 C682,358.32 682.89,364.46 683.57,365.71 C684.26,366.97 685.14,366.64 685.71,365.71 C686.29,364.79 686.69,361.42 687.14,359.93 C687.6,358.45 688.11,356.48 688.57,356.43 C689.03,356.37 689.54,358.22 690,359.59 C690.46,360.96 690.97,365.23 691.43,365 C691.89,364.77 692.4,360.11 692.86,358.17 C693.31,356.23 693.83,352.88 694.29,352.86 C694.74,352.84 695.26,356.11 695.71,358.05 C696.17,359.99 696.69,364.57 697.14,365 C697.6,365.43 698.11,359.57 698.57,360.71 C699.03,361.86 699.43,371.69 700,372.14 C700.57,372.6 701.5,363.46 702.14,363.57 C702.78,363.69 703.51,372.01 704,372.86 C704.49,373.7 704.83,370.01 705.21,368.87 C705.6,367.73 706.01,366.12 706.43,365.71 C706.85,365.31 707.4,365.77 707.86,366.34 C708.31,366.91 708.83,369.08 709.29,369.29 C709.74,369.49 710.26,367.74 710.71,367.63 C711.17,367.51 711.57,368.99 712.14,368.57 C712.71,368.15 713.6,365.11 714.29,365 C714.97,364.89 715.86,366.03 716.43,367.86 C717,369.69 717.29,377 717.86,376.43 C718.43,375.86 719.43,366.09 720,364.29 C720.57,362.48 720.97,364.59 721.43,365.16 C721.89,365.74 722.29,367.94 722.86,367.86 C723.43,367.78 724.31,365.36 725,364.68 C725.69,363.99 726.57,362.83 727.14,363.57 C727.71,364.31 728.14,369.11 728.57,369.29 C729.01,369.46 729.45,366.02 729.86,364.65 C730.27,363.27 730.74,361.08 731.14,360.71 C731.54,360.35 731.97,361.42 732.36,362.34 C732.75,363.25 733.09,365.5 733.57,366.43 C734.05,367.35 734.79,367.89 735.36,368.12 C735.93,368.34 736.63,368.08 737.14,367.86 C737.66,367.63 738.11,367.18 738.57,366.73 C739.03,366.27 739.54,365.59 740,365 C740.46,364.41 740.97,363.36 741.43,363.01 C741.89,362.67 742.29,362.08 742.86,362.86 C743.43,363.63 744.39,367.62 745,367.86 C745.61,368.1 746.12,365.27 746.64,364.36 C747.17,363.44 747.75,361.93 748.29,362.14 C748.82,362.36 749.5,365.61 750,365.71 C750.5,365.82 750.97,363.62 751.43,362.82 C751.89,362.02 752.4,360.82 752.86,360.71 C753.31,360.61 753.83,361.58 754.29,362.15 C754.74,362.72 755.26,363.03 755.71,364.29 C756.17,365.54 756.69,369.19 757.14,370 C757.6,370.81 758.11,369.26 758.57,369.38 C759.03,369.49 759.43,372.1 760,370.71 C760.57,369.33 761.57,361.6 762.14,360.71 C762.71,359.83 763.11,364.05 763.57,365.19 C764.03,366.34 764.49,367 765,367.86 C765.51,368.72 766.21,370.11 766.79,370.57 C767.36,371.02 768,371.79 768.57,370.71 C769.14,369.64 769.79,366.01 770.36,363.84 C770.93,361.67 771.57,357.25 772.14,357.14 C772.71,357.04 773.36,361.23 773.93,363.17 C774.5,365.12 775.09,368.71 775.71,369.29 C776.34,369.86 777.17,367.24 777.86,366.78 C778.54,366.32 779.43,365.68 780,366.43 C780.57,367.17 780.97,371.25 781.43,371.43 C781.89,371.61 782.4,368.45 782.86,367.54 C783.31,366.62 783.71,365.5 784.29,365.71 C784.86,365.93 785.74,367.73 786.43,368.88 C787.11,370.02 787.89,373.12 788.57,372.86 C789.26,372.6 790.03,368.85 790.71,367.25 C791.4,365.65 792.29,363.25 792.86,362.86 C793.43,362.46 793.83,364.44 794.29,364.78 C794.74,365.13 795.26,365.22 795.71,365 C796.17,364.78 796.69,363.63 797.14,363.41 C797.6,363.18 798,363.09 798.57,363.57 C799.14,364.06 800.09,366.51 800.71,366.43 C801.34,366.34 801.93,363.73 802.5,363.05 C803.07,362.36 803.77,361.47 804.29,362.14 C804.8,362.81 805.26,365.99 805.71,367.24 C806.17,368.5 806.63,369.32 807.14,370 C807.66,370.68 808.36,371.04 808.93,371.5 C809.5,371.96 810.14,372.5 810.71,372.86 C811.29,373.21 811.93,373.15 812.5,373.72 C813.07,374.3 813.66,377.06 814.29,376.43 C814.91,375.79 815.74,371.93 816.43,369.76 C817.11,367.58 818,363.7 818.57,362.86 C819.14,362.01 819.54,363.57 820,364.48 C820.46,365.4 820.91,367.85 821.43,368.57 C821.94,369.29 822.64,368.89 823.21,369 C823.79,369.12 824.37,370.27 825,369.29 C825.63,368.3 826.51,363.97 827.14,362.86 C827.77,361.74 828.36,362.89 828.93,362.32 C829.5,361.74 830.14,358.53 830.71,359.29 C831.29,360.04 831.93,364.84 832.5,367.02 C833.07,369.19 833.66,372.87 834.29,372.86 C834.91,372.84 835.74,369 836.43,366.94 C837.11,364.88 837.89,360.92 838.57,360 C839.26,359.08 840.03,360.59 840.71,361.16 C841.4,361.74 842.29,362.5 842.86,363.57 C843.43,364.64 843.83,366.38 844.29,367.87 C844.74,369.35 845.26,372.83 845.71,372.86 C846.17,372.89 846.69,369.32 847.14,368.06 C847.6,366.81 848.06,364.52 848.57,365 C849.09,365.48 849.79,369.35 850.36,371.06 C850.93,372.78 851.57,375.93 852.14,375.71 C852.71,375.5 853.36,371.67 853.93,369.73 C854.5,367.78 855.2,363.98 855.71,363.57 C856.23,363.16 856.69,366.24 857.14,367.15 C857.6,368.07 858.11,369.36 858.57,369.29 C859.03,369.21 859.54,367.39 860,366.7 C860.46,366.01 860.86,363.67 861.43,365 C862,366.33 862.94,374.77 863.57,375 C864.2,375.23 864.79,368.94 865.36,366.42 C865.93,363.91 866.57,359.27 867.14,359.29 C867.71,359.3 868.36,364.47 868.93,366.52 C869.5,368.58 870.09,372.16 870.71,372.14 C871.34,372.13 872.23,367.37 872.86,366.43 C873.49,365.49 874.07,366.72 874.64,366.26 C875.21,365.8 875.86,363.17 876.43,363.57 C877,363.97 877.64,367.4 878.21,368.77 C878.79,370.15 879.37,372.22 880,372.14 C880.63,372.07 881.46,369.78 882.14,368.3 C882.83,366.81 883.71,362.85 884.29,362.86 C884.86,362.86 885.26,366.84 885.71,368.33 C886.17,369.81 886.57,373.13 887.14,372.14 C887.71,371.15 888.6,361.8 889.29,362.14 C889.97,362.49 890.74,374.29 891.43,374.29 C892.11,374.29 892.89,363.51 893.57,362.14 C894.26,360.77 895.14,363.84 895.71,365.71 C896.29,367.59 896.69,371.44 897.14,373.84 C897.6,376.24 898.11,378.95 898.57,380.71 C899.03,382.48 899.54,383.31 900,384.86 C900.46,386.42 900.86,392.81 901.43,390.43 C902,388.05 902.89,373.04 903.57,370 C904.26,366.96 905.14,372.22 905.71,371.43 C906.29,370.64 906.69,367.1 907.14,365.05 C907.6,362.99 908,358.58 908.57,358.57 C909.14,358.56 910.09,363.57 910.71,365 C911.34,366.43 911.93,366.57 912.5,367.48 C913.07,368.4 913.77,370.88 914.29,370.71 C914.8,370.55 915.14,364.71 915.71,366.43 C916.29,368.14 917.17,381.66 917.86,381.43 C918.54,381.2 919.43,368.28 920,365 C920.57,361.72 920.97,361.83 921.43,360.92 C921.89,360 922.4,358.89 922.86,359.29 C923.31,359.69 923.83,361.7 924.29,363.42 C924.74,365.13 925.26,369.61 925.71,370 C926.17,370.39 926.69,367 927.14,365.86 C927.6,364.71 928.11,361.74 928.57,362.86 C929.03,363.98 929.54,371.53 930,372.86 C930.46,374.19 930.97,371.5 931.43,371.16 C931.89,370.82 932.29,370.33 932.86,370.71 C933.43,371.1 934.43,373.09 935,373.57 C935.57,374.05 935.97,373.83 936.43,373.71 C936.89,373.6 937.29,373.55 937.86,372.86 C938.43,372.17 939.31,370.89 940,369.4 C940.69,367.92 941.46,364.13 942.14,363.57 C942.83,363.02 943.6,365.13 944.29,365.93 C944.97,366.73 945.86,368.37 946.43,368.57 C947,368.78 947.4,368.01 947.86,367.21 C948.31,366.41 948.71,364.12 949.29,363.57 C949.86,363.02 950.74,364.11 951.43,363.77 C952.11,363.43 953,360.53 953.57,361.43 C954.14,362.33 954.54,367.23 955,369.4 C955.46,371.57 955.86,374.9 956.43,375 C957,375.1 957.89,371.49 958.57,370.01 C959.26,368.52 960.03,365.14 960.71,365.71 C961.4,366.28 962.23,373.4 962.86,373.57 C963.49,373.74 964.07,368.72 964.64,366.77 C965.21,364.83 965.86,362.51 966.43,361.43 C967,360.35 967.64,360.23 968.21,360 C968.79,359.78 969.49,359.21 970,360 C970.51,360.79 970.97,363.1 971.43,364.93 C971.89,366.75 972.29,369.82 972.86,371.43 C973.43,373.04 974.31,375.91 975,375 C975.69,374.09 976.51,367.15 977.14,365.71 C977.77,364.28 978.36,365.67 978.93,366.02 C979.5,366.36 980.13,365.85 980.71,367.86 C981.3,369.87 982.08,377.72 982.57,378.57 C983.06,379.42 983.4,375.01 983.79,373.18 C984.17,371.35 984.58,366.28 985,367.14 C985.42,368.01 985.86,378.91 986.43,378.57 C987,378.23 987.89,365.8 988.57,365 C989.26,364.2 990.03,371.97 990.71,373.57 C991.4,375.17 992.17,376.14 992.86,375 C993.54,373.86 994.43,367.12 995,366.43 C995.57,365.74 995.97,369.66 996.43,370.68 C996.89,371.71 997.34,372.88 997.86,372.86 C998.37,372.83 999.07,371.56 999.64,370.53 C1000.21,369.5 1000.91,366.64 1001.43,366.43 C1001.94,366.22 1002.4,368.32 1002.86,369.23 C1003.31,370.15 1003.83,371.1 1004.29,372.14 C1004.74,373.19 1005.26,374.73 1005.71,375.75 C1006.17,376.78 1006.69,378.51 1007.14,378.57 C1007.6,378.63 1008.11,377.16 1008.57,376.14 C1009.03,375.11 1009.43,373.3 1010,372.14 C1010.57,370.99 1011.46,369.61 1012.14,368.92 C1012.83,368.23 1013.66,366.93 1014.29,367.86 C1014.91,368.78 1015.5,372.65 1016.07,374.7 C1016.64,376.76 1017.34,380.44 1017.86,380.71 C1018.37,380.99 1018.83,378.14 1019.29,376.42 C1019.74,374.71 1020.14,370.22 1020.71,370 C1021.29,369.78 1022.17,373.65 1022.86,375.02 C1023.54,376.39 1024.37,379.1 1025,378.57 C1025.63,378.04 1026.21,374.12 1026.79,371.72 C1027.36,369.32 1028.06,364.03 1028.57,363.57 C1029.09,363.12 1029.54,367.16 1030,368.87 C1030.46,370.59 1030.86,374.45 1031.43,374.29 C1032,374.12 1032.89,369.36 1033.57,367.86 C1034.26,366.35 1035.03,365.56 1035.71,364.88 C1036.4,364.19 1037.29,362.97 1037.86,363.57 C1038.43,364.17 1038.83,367.24 1039.29,368.61 C1039.74,369.98 1040.14,372.33 1040.71,372.14 C1041.29,371.95 1042.17,368.79 1042.86,367.42 C1043.54,366.05 1044.31,363.16 1045,363.57 C1045.69,363.98 1046.46,369.3 1047.14,370 C1047.83,370.7 1048.6,368.84 1049.29,367.92 C1049.97,367.01 1050.86,364.1 1051.43,364.29 C1052,364.47 1052.4,367.94 1052.86,369.08 C1053.31,370.23 1053.77,371.21 1054.29,371.43 C1054.8,371.65 1055.5,370.67 1056.07,370.44 C1056.64,370.21 1057.38,370.8 1057.86,370 C1058.34,369.2 1058.68,366.83 1059.07,365.46 C1059.46,364.09 1059.79,359.33 1060.29,361.43 C1060.78,363.53 1061.5,376.29 1062.14,378.57 C1062.78,380.86 1063.6,376.29 1064.29,375.71 C1064.97,375.14 1065.86,376.26 1066.43,375 C1067,373.74 1067.29,369.46 1067.86,367.86 C1068.43,366.26 1069.43,363.97 1070,365 C1070.57,366.03 1070.86,373.37 1071.43,374.29 C1072,375.2 1073,371.04 1073.57,370.71 C1074.14,370.39 1074.54,372.12 1075,372.23 C1075.46,372.35 1075.86,371.33 1076.43,371.43 C1077,371.53 1078,371.45 1078.57,372.86 C1079.14,374.26 1079.54,378.06 1080,380.23 C1080.46,382.4 1080.91,386.2 1081.43,386.43 C1081.94,386.65 1082.64,382.9 1083.21,381.64 C1083.79,380.38 1084.41,378.84 1085,378.57 C1085.59,378.31 1086.3,379.37 1086.9,379.98 C1087.51,380.6 1088.2,381.51 1088.81,382.43 C1089.42,383.34 1090.18,386.11 1090.71,385.71 C1091.25,385.32 1091.69,382.15 1092.14,379.98 C1092.6,377.81 1093,372.37 1093.57,372.14 C1094.14,371.92 1095.14,377.59 1095.71,378.57 C1096.29,379.56 1096.69,378.64 1097.14,378.3 C1097.6,377.95 1098.11,377.41 1098.57,376.43 C1099.03,375.44 1099.43,371.8 1100,372.14 C1100.57,372.49 1101.57,377.2 1102.14,378.57 C1102.71,379.94 1103.11,381.51 1103.57,380.71 C1104.03,379.91 1104.43,375.06 1105,373.57 C1105.57,372.09 1106.57,371.86 1107.14,371.43 C1107.71,371 1108.11,370.75 1108.57,370.87 C1109.03,370.98 1109.43,372.51 1110,372.14 C1110.57,371.78 1111.46,366.74 1112.14,368.57 C1112.83,370.4 1113.6,382.43 1114.29,383.57 C1114.97,384.71 1115.74,376.4 1116.43,375.71 C1117.11,375.03 1117.89,379.4 1118.57,379.29 C1119.26,379.17 1120.03,375.57 1120.71,375 C1121.4,374.43 1122.29,376.26 1122.86,375.71 C1123.43,375.16 1123.83,373.16 1124.29,371.56 C1124.74,369.96 1125.14,365.28 1125.71,365.71 C1126.29,366.15 1127.17,373.29 1127.86,374.29 C1128.54,375.29 1129.31,373.11 1130,371.96 C1130.69,370.82 1131.46,367.46 1132.14,367.14 C1132.83,366.83 1133.6,369.77 1134.29,370 C1134.97,370.23 1135.74,367.31 1136.43,368.57 C1137.11,369.83 1138,376.08 1138.57,377.86 C1139.14,379.64 1139.54,379.24 1140,379.69 C1140.46,380.15 1140.91,382.04 1141.43,380.71 C1141.94,379.39 1142.64,374.25 1143.21,371.4 C1143.79,368.54 1144.37,362.28 1145,362.86 C1145.63,363.43 1146.57,373.15 1147.14,375 C1147.71,376.85 1148.11,374.64 1148.57,374.41 C1149.03,374.18 1149.43,374.32 1150,373.57 C1150.57,372.83 1151.46,370.67 1152.14,369.75 C1152.83,368.84 1153.6,367.02 1154.29,367.86 C1154.97,368.7 1155.74,373.77 1156.43,375 C1157.11,376.23 1157.89,374.95 1158.57,375.52 C1159.26,376.09 1160.03,379 1160.71,378.57 C1161.4,378.14 1162.23,374.49 1162.86,372.86 C1163.49,371.22 1164.07,370.2 1164.64,368.37 C1165.21,366.54 1165.91,361.91 1166.43,361.43 C1166.94,360.95 1167.4,364.25 1167.86,365.39 C1168.31,366.53 1168.71,367.03 1169.29,368.57 C1169.86,370.11 1170.86,374.54 1171.43,375 C1172,375.46 1172.34,371.42 1172.86,371.43 C1173.37,371.44 1174.07,373.93 1174.64,375.07 C1175.21,376.21 1175.86,378.29 1176.43,378.57 C1177,378.86 1177.64,377.76 1178.21,376.84 C1178.79,375.93 1179.37,372.47 1180,372.86 C1180.63,373.25 1181.46,379.4 1182.14,379.29 C1182.83,379.17 1183.71,373.2 1184.29,372.14 C1184.86,371.09 1185.26,372.46 1185.71,372.69 C1186.17,372.91 1186.69,373.45 1187.14,373.57 C1187.6,373.7 1188.11,373.81 1188.57,373.47 C1189.03,373.12 1189.49,372.02 1190,371.43 C1190.51,370.84 1191.21,370.58 1191.79,369.78 C1192.36,368.98 1192.98,366.28 1193.57,366.43 C1194.16,366.57 1194.87,369.18 1195.48,370.68 C1196.09,372.17 1196.77,374.06 1197.38,375.78 C1197.99,377.5 1198.87,381.14 1199.29,381.43 C1199.7,381.72 1199.66,378.61 1200,377.58 C1200.34,376.55 1201.13,375.45 1201.43,375 C1201.73,374.55 1201.54,374.9 1201.89,374.75 C1202.24,374.59 1203.07,374.21 1203.62,374.05 C1204.17,373.89 1204.8,373.72 1205.35,373.76 C1205.9,373.79 1206.54,374.61 1207.08,374.27 C1207.62,373.94 1208.21,372.57 1208.73,371.66 C1209.26,370.76 1209.9,367.66 1210.39,368.61 C1210.88,369.55 1211.35,378.03 1211.8,377.58 C1212.26,377.12 1212.69,364.94 1213.22,365.77 C1213.75,366.61 1214.47,381.13 1215.11,382.77 C1215.75,384.41 1216.55,377.97 1217.23,376.01 C1217.91,374.04 1218.64,370.55 1219.36,370.5 C1220.08,370.44 1221.08,375.23 1221.72,375.69 C1222.36,376.15 1222.84,374.03 1223.37,373.35 C1223.9,372.67 1224.42,371.3 1225.02,371.44 C1225.63,371.58 1226.47,373.05 1227.15,374.26 C1227.83,375.47 1228.67,378.75 1229.27,378.99 C1229.88,379.24 1230.4,377.17 1230.93,375.81 C1231.45,374.45 1232.01,370.58 1232.58,370.5 C1233.14,370.42 1233.86,373.65 1234.47,375.31 C1235.07,376.97 1235.83,382.18 1236.36,380.88 C1236.88,379.58 1237.24,368.7 1237.77,367.19 C1238.3,365.68 1239.13,370.66 1239.66,371.44 C1240.19,372.22 1240.62,371.81 1241.08,372.04 C1241.53,372.27 1242,372.5 1242.49,372.86 C1242.98,373.21 1243.62,373.88 1244.15,374.25 C1244.67,374.63 1245.26,374.89 1245.8,375.22 C1246.34,375.54 1246.98,376.3 1247.53,376.27 C1248.08,376.24 1248.71,375.18 1249.26,375.01 C1249.81,374.84 1250.41,375.79 1250.99,375.22 C1251.57,374.65 1252.2,370.61 1252.88,371.44 C1253.56,372.27 1254.64,379.67 1255.24,380.41 C1255.85,381.15 1256.2,377.8 1256.66,376.07 C1257.11,374.33 1257.51,369.69 1258.07,369.55 C1258.64,369.42 1259.52,373.41 1260.2,375.22 C1260.88,377.03 1261.76,380.91 1262.32,380.88 C1262.89,380.86 1263.29,376.95 1263.74,375.06 C1264.19,373.18 1264.55,367.47 1265.16,369.08 C1265.76,370.69 1266.87,383.57 1267.52,385.13 C1268.16,386.69 1268.64,380.86 1269.17,378.82 C1269.7,376.78 1270.25,373.77 1270.82,372.38 C1271.39,371 1272.11,370.49 1272.71,370.19 C1273.31,369.89 1273.96,369.45 1274.6,370.5 C1275.24,371.54 1276.04,374.67 1276.72,376.71 C1277.4,378.75 1278.28,384.31 1278.85,383.24 C1279.41,382.17 1279.66,371.4 1280.26,370.02 C1280.87,368.65 1281.87,372.89 1282.63,374.63 C1283.38,376.37 1284.23,380.96 1284.99,380.88 C1285.74,380.81 1286.59,375.9 1287.35,374.16 C1288.1,372.43 1289.03,370.11 1289.71,370.02 C1290.39,369.94 1290.99,372.86 1291.6,373.63 C1292.2,374.4 1292.88,374.06 1293.48,374.84 C1294.09,375.62 1294.81,378.13 1295.37,378.52 C1295.94,378.91 1296.5,377.65 1297.03,377.27 C1297.55,376.9 1298.41,376.34 1298.68,376.16" fill="none" stroke="#0000ff" stroke-width="1.3" stroke-linejoin="round"/>
<rect x="101.6" y="348.3" width="1198" height="84" fill="none" stroke="#262626" stroke-width="1.1"/>
<line x1="101.6" y1="432.3" x2="101.6" y2="435.8" stroke="#262626" stroke-width="1"/>
<text x="101.6" y="447.3" font-family="Liberation Sans" font-size="10.6" fill="#262626" stroke="#262626" stroke-width="0.22" textLength="25.45" lengthAdjust="spacingAndGlyphs" text-anchor="middle" xml:space="preserve">3500</text>
<line x1="160.45" y1="432.3" x2="160.45" y2="435.8" stroke="#262626" stroke-width="1"/>
<text x="160.45" y="447.3" font-family="Liberation Sans" font-size="10.6" fill="#262626" stroke="#262626" stroke-width="0.22" textLength="25.45" lengthAdjust="spacingAndGlyphs" text-anchor="middle" xml:space="preserve">3600</text>
<line x1="219.3" y1="432.3" x2="219.3" y2="435.8" stroke="#262626" stroke-width="1"/>
<text x="219.3" y="447.3" font-family="Liberation Sans" font-size="10.6" fill="#262626" stroke="#262626" stroke-width="0.22" textLength="25.45" lengthAdjust="spacingAndGlyphs" text-anchor="middle" xml:space="preserve">3700</text>
<line x1="278.15" y1="432.3" x2="278.15" y2="435.8" stroke="#262626" stroke-width="1"/>
<text x="278.15" y="447.3" font-family="Liberation Sans" font-size="10.6" fill="#262626" stroke="#262626" stroke-width="0.22" textLength="25.45" lengthAdjust="spacingAndGlyphs" text-anchor="middle" xml:space="preserve">3800</text>
<line x1="337" y1="432.3" x2="337" y2="435.8" stroke="#262626" stroke-width="1"/>
<text x="337" y="447.3" font-family="Liberation Sans" font-size="10.6" fill="#262626" stroke="#262626" stroke-width="0.22" textLength="25.45" lengthAdjust="spacingAndGlyphs" text-anchor="middle" xml:space="preserve">3900</text>
<line x1="395.85" y1="432.3" x2="395.85" y2="435.8" stroke="#262626" stroke-width="1"/>
<text x="395.85" y="447.3" font-family="Liberation Sans" font-size="10.6" fill="#262626" stroke="#262626" stroke-width="0.22" textLength="25.45" lengthAdjust="spacingAndGlyphs" text-anchor="middle" xml:space="preserve">4000</text>
<line x1="454.7" y1="432.3" x2="454.7" y2="435.8" stroke="#262626" stroke-width="1"/>
<text x="454.7" y="447.3" font-family="Liberation Sans" font-size="10.6" fill="#262626" stroke="#262626" stroke-width="0.22" textLength="25.45" lengthAdjust="spacingAndGlyphs" text-anchor="middle" xml:space="preserve">4100</text>
<line x1="513.55" y1="432.3" x2="513.55" y2="435.8" stroke="#262626" stroke-width="1"/>
<text x="513.55" y="447.3" font-family="Liberation Sans" font-size="10.6" fill="#262626" stroke="#262626" stroke-width="0.22" textLength="25.45" lengthAdjust="spacingAndGlyphs" text-anchor="middle" xml:space="preserve">4200</text>
<line x1="572.4" y1="432.3" x2="572.4" y2="435.8" stroke="#262626" stroke-width="1"/>
<text x="572.4" y="447.3" font-family="Liberation Sans" font-size="10.6" fill="#262626" stroke="#262626" stroke-width="0.22" textLength="25.45" lengthAdjust="spacingAndGlyphs" text-anchor="middle" xml:space="preserve">4300</text>
<line x1="631.25" y1="432.3" x2="631.25" y2="435.8" stroke="#262626" stroke-width="1"/>
<text x="631.25" y="447.3" font-family="Liberation Sans" font-size="10.6" fill="#262626" stroke="#262626" stroke-width="0.22" textLength="25.45" lengthAdjust="spacingAndGlyphs" text-anchor="middle" xml:space="preserve">4400</text>
<line x1="690.1" y1="432.3" x2="690.1" y2="435.8" stroke="#262626" stroke-width="1"/>
<text x="690.1" y="447.3" font-family="Liberation Sans" font-size="10.6" fill="#262626" stroke="#262626" stroke-width="0.22" textLength="25.45" lengthAdjust="spacingAndGlyphs" text-anchor="middle" xml:space="preserve">4500</text>
<line x1="748.95" y1="432.3" x2="748.95" y2="435.8" stroke="#262626" stroke-width="1"/>
<text x="748.95" y="447.3" font-family="Liberation Sans" font-size="10.6" fill="#262626" stroke="#262626" stroke-width="0.22" textLength="25.45" lengthAdjust="spacingAndGlyphs" text-anchor="middle" xml:space="preserve">4600</text>
<line x1="807.8" y1="432.3" x2="807.8" y2="435.8" stroke="#262626" stroke-width="1"/>
<text x="807.8" y="447.3" font-family="Liberation Sans" font-size="10.6" fill="#262626" stroke="#262626" stroke-width="0.22" textLength="25.45" lengthAdjust="spacingAndGlyphs" text-anchor="middle" xml:space="preserve">4700</text>
<line x1="866.65" y1="432.3" x2="866.65" y2="435.8" stroke="#262626" stroke-width="1"/>
<text x="866.65" y="447.3" font-family="Liberation Sans" font-size="10.6" fill="#262626" stroke="#262626" stroke-width="0.22" textLength="25.45" lengthAdjust="spacingAndGlyphs" text-anchor="middle" xml:space="preserve">4800</text>
<line x1="925.5" y1="432.3" x2="925.5" y2="435.8" stroke="#262626" stroke-width="1"/>
<text x="925.5" y="447.3" font-family="Liberation Sans" font-size="10.6" fill="#262626" stroke="#262626" stroke-width="0.22" textLength="25.45" lengthAdjust="spacingAndGlyphs" text-anchor="middle" xml:space="preserve">4900</text>
<line x1="984.35" y1="432.3" x2="984.35" y2="435.8" stroke="#262626" stroke-width="1"/>
<text x="984.35" y="447.3" font-family="Liberation Sans" font-size="10.6" fill="#262626" stroke="#262626" stroke-width="0.22" textLength="25.45" lengthAdjust="spacingAndGlyphs" text-anchor="middle" xml:space="preserve">5000</text>
<line x1="1043.2" y1="432.3" x2="1043.2" y2="435.8" stroke="#262626" stroke-width="1"/>
<text x="1043.2" y="447.3" font-family="Liberation Sans" font-size="10.6" fill="#262626" stroke="#262626" stroke-width="0.22" textLength="25.45" lengthAdjust="spacingAndGlyphs" text-anchor="middle" xml:space="preserve">5100</text>
<line x1="1102.05" y1="432.3" x2="1102.05" y2="435.8" stroke="#262626" stroke-width="1"/>
<text x="1102.05" y="447.3" font-family="Liberation Sans" font-size="10.6" fill="#262626" stroke="#262626" stroke-width="0.22" textLength="25.45" lengthAdjust="spacingAndGlyphs" text-anchor="middle" xml:space="preserve">5200</text>
<line x1="1160.9" y1="432.3" x2="1160.9" y2="435.8" stroke="#262626" stroke-width="1"/>
<text x="1160.9" y="447.3" font-family="Liberation Sans" font-size="10.6" fill="#262626" stroke="#262626" stroke-width="0.22" textLength="25.45" lengthAdjust="spacingAndGlyphs" text-anchor="middle" xml:space="preserve">5300</text>
<line x1="1219.75" y1="432.3" x2="1219.75" y2="435.8" stroke="#262626" stroke-width="1"/>
<text x="1219.75" y="447.3" font-family="Liberation Sans" font-size="10.6" fill="#262626" stroke="#262626" stroke-width="0.22" textLength="25.45" lengthAdjust="spacingAndGlyphs" text-anchor="middle" xml:space="preserve">5400</text>
<line x1="1278.6" y1="432.3" x2="1278.6" y2="435.8" stroke="#262626" stroke-width="1"/>
<text x="1278.6" y="447.3" font-family="Liberation Sans" font-size="10.6" fill="#262626" stroke="#262626" stroke-width="0.22" textLength="25.45" lengthAdjust="spacingAndGlyphs" text-anchor="middle" xml:space="preserve">5500</text>
<line x1="98.1" y1="417.15" x2="101.6" y2="417.15" stroke="#262626" stroke-width="1"/>
<text x="94.5" y="420.75" font-family="Liberation Sans" font-size="10.6" fill="#262626" stroke="#262626" stroke-width="0.22" textLength="6.36" lengthAdjust="spacingAndGlyphs" text-anchor="end" xml:space="preserve">5</text>
<line x1="98.1" y1="393.3" x2="101.6" y2="393.3" stroke="#262626" stroke-width="1"/>
<text x="94.5" y="396.9" font-family="Liberation Sans" font-size="10.6" fill="#262626" stroke="#262626" stroke-width="0.22" textLength="12.72" lengthAdjust="spacingAndGlyphs" text-anchor="end" xml:space="preserve">10</text>
<line x1="98.1" y1="369.45" x2="101.6" y2="369.45" stroke="#262626" stroke-width="1"/>
<text x="94.5" y="373.05" font-family="Liberation Sans" font-size="10.6" fill="#262626" stroke="#262626" stroke-width="0.22" textLength="12.72" lengthAdjust="spacingAndGlyphs" text-anchor="end" xml:space="preserve">15</text>
<text x="101.2" y="346.9" font-family="Liberation Sans" font-size="9.96" fill="#000" stroke="#000" stroke-width="0.22" textLength="5.78" lengthAdjust="spacingAndGlyphs" text-anchor="start" xml:space="preserve">e</text>
<text x="107.2" y="342.7" font-family="Liberation Sans" font-size="6.97" fill="#000" stroke="#000" stroke-width="0.12" textLength="13.89" lengthAdjust="spacingAndGlyphs" text-anchor="start" xml:space="preserve">−17</text>
<text x="122.19" y="346.9" font-family="Liberation Sans" font-size="9.96" fill="#000" stroke="#000" stroke-width="0.22" textLength="11.54" lengthAdjust="spacingAndGlyphs" text-anchor="start" xml:space="preserve">x2</text>
<text x="133.73" y="346.9" font-family="Liberation Sans" font-size="9.96" fill="#000" stroke="#000" stroke-width="0.22" textLength="6.43" lengthAdjust="spacingAndGlyphs" text-anchor="start" xml:space="preserve" font-style="italic">Å</text>
<text transform="translate(152.83,319.2) rotate(90)" font-family="Liberation Sans" font-size="10.39" fill="#ffa500" textLength="16.44" lengthAdjust="spacingAndGlyphs">CIV</text>
<path d="M151.6,347.2 C151.6,345.3 152.9,345.4 155.2,345.4 L156.4,344.3 L157.6,345.4 C159.9,345.4 161.2,345.3 161.2,347.2" fill="none" stroke="#ffa500" stroke-width="1"/>
<text transform="translate(323.93,319) rotate(90)" font-family="Liberation Sans" font-size="10.39" fill="#ff0000" textLength="14.03" lengthAdjust="spacingAndGlyphs">NV</text>
<path d="M322.7,347.2 C322.7,345.3 324,345.4 326.3,345.4 L327.5,344.3 L328.7,345.4 C331,345.4 332.3,345.3 332.3,347.2" fill="none" stroke="#ff0000" stroke-width="1"/>
<text transform="translate(365.43,324) rotate(90)" font-family="Liberation Sans" font-size="10.39" fill="#ff0000" textLength="14.72" lengthAdjust="spacingAndGlyphs">SiII</text>
<path d="M364.2,347.2 C364.2,345.3 365.5,345.4 367.8,345.4 L369,344.3 L370.2,345.4 C372.5,345.4 373.8,345.3 373.8,347.2" fill="none" stroke="#ff0000" stroke-width="1"/>
<text transform="translate(408.93,320) rotate(90)" font-family="Liberation Sans" font-size="10.39" fill="#8a2be2" textLength="19.18" lengthAdjust="spacingAndGlyphs">HeII</text>
<path d="M407.7,347.2 C407.7,345.3 409,345.4 411.3,345.4 L412.5,344.3 L413.7,345.4 C416,345.4 417.3,345.3 417.3,347.2" fill="none" stroke="#8a2be2" stroke-width="1"/>
<text transform="translate(612.73,320.3) rotate(90)" font-family="Liberation Sans" font-size="10.39" fill="#ff0000" textLength="18.54" lengthAdjust="spacingAndGlyphs">SiIV</text>
<path d="M611.5,347.2 C611.5,345.3 612.8,345.4 615.1,345.4 L616.3,344.3 L617.5,345.4 C619.8,345.4 621.1,345.3 621.1,347.2" fill="none" stroke="#ff0000" stroke-width="1"/>
<text transform="translate(643.53,281) rotate(90)" font-family="Liberation Sans" font-size="10.39" fill="#ffa500" textLength="15.51" lengthAdjust="spacingAndGlyphs">CIII</text>
<path d="M642.3,305.6 C642.3,303.7 643.6,303.8 645.9,303.8 L647.1,302.7 L648.3,303.8 C650.6,303.8 651.9,303.7 651.9,305.6" fill="none" stroke="#ffa500" stroke-width="1"/>
<text transform="translate(645.33,327) rotate(90)" font-family="Liberation Sans" font-size="10.39" fill="#008000" textLength="13.17" lengthAdjust="spacingAndGlyphs">Hγ</text>
<path d="M644.1,347.2 C644.1,345.3 645.4,345.4 647.7,345.4 L648.9,344.3 L650.1,345.4 C652.4,345.4 653.7,345.3 653.7,347.2" fill="none" stroke="#008000" stroke-width="1"/>
<text transform="translate(764.93,323) rotate(90)" font-family="Liberation Sans" font-size="10.39" fill="#800080" textLength="12.62" lengthAdjust="spacingAndGlyphs">CII</text>
<path d="M763.7,347.2 C763.7,345.3 765,345.4 767.3,345.4 L768.5,344.3 L769.7,345.4 C772,345.4 773.3,345.3 773.3,347.2" fill="none" stroke="#800080" stroke-width="1"/>
<text transform="translate(796.43,323) rotate(90)" font-family="Liberation Sans" font-size="10.39" fill="#8a2be2" textLength="15.51" lengthAdjust="spacingAndGlyphs">CIII</text>
<path d="M795.2,347.2 C795.2,345.3 796.5,345.4 798.8,345.4 L800,344.3 L801.2,345.4 C803.5,345.4 804.8,345.3 804.8,347.2" fill="none" stroke="#8a2be2" stroke-width="1"/>
<text transform="translate(892.13,319) rotate(90)" font-family="Liberation Sans" font-size="10.39" fill="#ff0000" textLength="16.44" lengthAdjust="spacingAndGlyphs">CIV</text>
<path d="M890.9,347.2 C890.9,345.3 892.2,345.4 894.5,345.4 L895.7,344.3 L896.9,345.4 C899.2,345.4 900.5,345.3 900.5,347.2" fill="none" stroke="#ff0000" stroke-width="1"/>
<text transform="translate(957.93,327) rotate(90)" font-family="Liberation Sans" font-size="10.39" fill="#008000" textLength="13.62" lengthAdjust="spacingAndGlyphs">Hβ</text>
<path d="M956.7,347.2 C956.7,345.3 958,345.4 960.3,345.4 L961.5,344.3 L962.7,345.4 C965,345.4 966.3,345.3 966.3,347.2" fill="none" stroke="#008000" stroke-width="1"/>
<text transform="translate(1016.93,322.5) rotate(90)" font-family="Liberation Sans" font-size="10.39" fill="#008000" textLength="16.38" lengthAdjust="spacingAndGlyphs">OIII</text>
<path d="M1015.7,347.2 C1015.7,345.3 1017,345.4 1019.3,345.4 L1020.5,344.3 L1021.7,345.4 C1024,345.4 1025.3,345.3 1025.3,347.2" fill="none" stroke="#008000" stroke-width="1"/>
<text transform="translate(1020.93,280) rotate(90)" font-family="Liberation Sans" font-size="10.39" fill="#ff00ff" textLength="13.49" lengthAdjust="spacingAndGlyphs">OII</text>
<path d="M1019.7,305.2 C1019.7,303.3 1021,303.4 1023.3,303.4 L1024.5,302.3 L1025.7,303.4 C1028,303.4 1029.3,303.3 1029.3,305.2" fill="none" stroke="#ff00ff" stroke-width="1"/>
<text transform="translate(1045.93,322.5) rotate(90)" font-family="Liberation Sans" font-size="10.39" fill="#008000" textLength="16.38" lengthAdjust="spacingAndGlyphs">OIII</text>
<path d="M1044.7,347.2 C1044.7,345.3 1046,345.4 1048.3,345.4 L1049.5,344.3 L1050.7,345.4 C1053,345.4 1054.3,345.3 1054.3,347.2" fill="none" stroke="#008000" stroke-width="1"/>
<text transform="translate(1059.43,320) rotate(90)" font-family="Liberation Sans" font-size="10.39" fill="#ff0000" textLength="19.18" lengthAdjust="spacingAndGlyphs">HeII</text>
<path d="M1058.2,347.2 C1058.2,345.3 1059.5,345.4 1061.8,345.4 L1063,344.3 L1064.2,345.4 C1066.5,345.4 1067.8,345.3 1067.8,347.2" fill="none" stroke="#ff0000" stroke-width="1"/>
<text transform="translate(1210.43,323) rotate(90)" font-family="Liberation Sans" font-size="10.39" fill="#ffa500" textLength="12.62" lengthAdjust="spacingAndGlyphs">CII</text>
<path d="M1209.2,347.5 C1209.2,345.6 1210.5,345.7 1212.8,345.7 L1214,344.6 L1215.2,345.7 C1217.5,345.7 1218.8,345.6 1218.8,347.5" fill="none" stroke="#ffa500" stroke-width="1"/>
<rect x="545.8" y="450" width="17.3" height="6.4" fill="#ff0000"/>
<text x="568.8" y="455.8" font-family="Liberation Sans" font-size="8.69" fill="#333" stroke="#333" stroke-width="0.12" textLength="14.83" lengthAdjust="spacingAndGlyphs" text-anchor="start" xml:space="preserve">Lyα</text>
<rect x="599.9" y="450" width="17.3" height="6.4" fill="#008000"/>
<text x="622.9" y="455.8" font-family="Liberation Sans" font-size="8.69" fill="#333" stroke="#333" stroke-width="0.12" textLength="11.29" lengthAdjust="spacingAndGlyphs" text-anchor="start" xml:space="preserve">OII</text>
<rect x="653.1" y="450" width="17.3" height="6.4" fill="#8a2be2"/>
<text x="676.1" y="455.8" font-family="Liberation Sans" font-size="8.69" fill="#333" stroke="#333" stroke-width="0.12" textLength="13.75" lengthAdjust="spacingAndGlyphs" text-anchor="start" xml:space="preserve">CIV</text>
<rect x="707.8" y="450" width="17.3" height="6.4" fill="#800080"/>
<text x="730.8" y="455.8" font-family="Liberation Sans" font-size="8.69" fill="#333" stroke="#333" stroke-width="0.12" textLength="12.98" lengthAdjust="spacingAndGlyphs" text-anchor="start" xml:space="preserve">CIII</text>
<rect x="759.5" y="450" width="17.3" height="6.4" fill="#ff00ff"/>
<text x="782.5" y="455.8" font-family="Liberation Sans" font-size="8.69" fill="#333" stroke="#333" stroke-width="0.12" textLength="17.12" lengthAdjust="spacingAndGlyphs" text-anchor="start" xml:space="preserve">MgII</text>
<rect x="815.3" y="450" width="17.3" height="6.4" fill="#ffa500"/>
<text x="838.3" y="455.8" font-family="Liberation Sans" font-size="8.69" fill="#333" stroke="#333" stroke-width="0.12" textLength="16.05" lengthAdjust="spacingAndGlyphs" text-anchor="start" xml:space="preserve">HeII</text>
<rect x="1015.7" y="39.3" width="312.9" height="192.7" fill="#fdfdfd"/>
<rect x="1048.3" y="60.6" width="250.8" height="150.4" fill="#fff" stroke="#3a3a3a" stroke-width="1.1"/>
<line x1="1048.3" y1="204.4" x2="1299.1" y2="204.4" stroke="#3a3a3a" stroke-width="1.1"/>
<path d="M1059.06,113.83 V136.23 M1063.74,121.74 V144.14 M1068.42,112.6 V135 M1073.1,117.17 V139.57 M1077.78,108.9 V131.3 M1082.46,93.79 V116.19 M1087.14,109.17 V131.57 M1091.82,110.4 V132.8 M1096.5,98 V120.4 M1101.18,95.28 V117.68 M1105.86,94.4 V116.8 M1110.54,92.64 V115.04 M1115.22,83.06 V105.46 M1119.9,102.31 V124.71 M1124.58,95.28 V117.68 M1129.26,100.38 V122.78 M1133.94,98.27 V120.67 M1138.62,91.68 V114.08 M1143.3,76.82 V99.22 M1147.98,97.83 V120.23 M1152.66,114.97 V137.37 M1157.34,106.27 V128.67 M1162.02,106.53 V128.93 M1166.7,87.72 V110.12 M1171.38,66.8 V89.2 M1176.06,70.58 V92.98 M1180.74,79.19 V101.59 M1185.42,76.03 V98.43 M1190.1,95.98 V118.38 M1194.78,94.31 V116.71 M1199.46,106.44 V128.84 M1204.14,103.28 V125.68 M1208.82,104.77 V127.17 M1213.5,129.12 V151.52 M1218.18,134.83 V157.23 M1222.86,122.18 V144.58 M1227.54,129.12 V151.52 M1232.22,132.72 V155.12 M1236.9,124.9 V147.3 M1241.58,131.58 V153.98 M1246.26,141.69 V164.09 M1250.94,126.4 V148.8 M1255.62,134.83 V157.23 M1260.3,121.12 V143.52 M1264.98,116.46 V138.86 M1269.66,101.17 V123.57 M1274.34,83.76 V106.16 M1279.02,74.27 V96.67 M1283.7,94.93 V117.33 M1288.38,86.49 V108.89 " stroke="#1f77b4" stroke-width="1.6"/>
<circle cx="1059.06" cy="125.03" r="2.1" fill="#1f77b4"/>
<circle cx="1063.74" cy="132.94" r="2.1" fill="#1f77b4"/>
<circle cx="1068.42" cy="123.8" r="2.1" fill="#1f77b4"/>
<circle cx="1073.1" cy="128.37" r="2.1" fill="#1f77b4"/>
<circle cx="1077.78" cy="120.1" r="2.1" fill="#1f77b4"/>
<circle cx="1082.46" cy="104.99" r="2.1" fill="#1f77b4"/>
<circle cx="1087.14" cy="120.37" r="2.1" fill="#1f77b4"/>
<circle cx="1091.82" cy="121.6" r="2.1" fill="#1f77b4"/>
<circle cx="1096.5" cy="109.2" r="2.1" fill="#1f77b4"/>
<circle cx="1101.18" cy="106.48" r="2.1" fill="#1f77b4"/>
<circle cx="1105.86" cy="105.6" r="2.1" fill="#1f77b4"/>
<circle cx="1110.54" cy="103.84" r="2.1" fill="#1f77b4"/>
<circle cx="1115.22" cy="94.26" r="2.1" fill="#1f77b4"/>
<circle cx="1119.9" cy="113.51" r="2.1" fill="#1f77b4"/>
<circle cx="1124.58" cy="106.48" r="2.1" fill="#1f77b4"/>
<circle cx="1129.26" cy="111.58" r="2.1" fill="#1f77b4"/>
<circle cx="1133.94" cy="109.47" r="2.1" fill="#1f77b4"/>
<circle cx="1138.62" cy="102.88" r="2.1" fill="#1f77b4"/>
<circle cx="1143.3" cy="88.02" r="2.1" fill="#1f77b4"/>
<circle cx="1147.98" cy="109.03" r="2.1" fill="#1f77b4"/>
<circle cx="1152.66" cy="126.17" r="2.1" fill="#1f77b4"/>
<circle cx="1157.34" cy="117.47" r="2.1" fill="#1f77b4"/>
<circle cx="1162.02" cy="117.73" r="2.1" fill="#1f77b4"/>
<circle cx="1166.7" cy="98.92" r="2.1" fill="#1f77b4"/>
<circle cx="1171.38" cy="78" r="2.1" fill="#1f77b4"/>
<circle cx="1176.06" cy="81.78" r="2.1" fill="#1f77b4"/>
<circle cx="1180.74" cy="90.39" r="2.1" fill="#1f77b4"/>
<circle cx="1185.42" cy="87.23" r="2.1" fill="#1f77b4"/>
<circle cx="1190.1" cy="107.18" r="2.1" fill="#1f77b4"/>
<circle cx="1194.78" cy="105.51" r="2.1" fill="#1f77b4"/>
<circle cx="1199.46" cy="117.64" r="2.1" fill="#1f77b4"/>
<circle cx="1204.14" cy="114.48" r="2.1" fill="#1f77b4"/>
<circle cx="1208.82" cy="115.97" r="2.1" fill="#1f77b4"/>
<circle cx="1213.5" cy="140.32" r="2.1" fill="#1f77b4"/>
<circle cx="1218.18" cy="146.03" r="2.1" fill="#1f77b4"/>
<circle cx="1222.86" cy="133.38" r="2.1" fill="#1f77b4"/>
<circle cx="1227.54" cy="140.32" r="2.1" fill="#1f77b4"/>
<circle cx="1232.22" cy="143.92" r="2.1" fill="#1f77b4"/>
<circle cx="1236.9" cy="136.1" r="2.1" fill="#1f77b4"/>
<circle cx="1241.58" cy="142.78" r="2.1" fill="#1f77b4"/>
<circle cx="1246.26" cy="152.89" r="2.1" fill="#1f77b4"/>
<circle cx="1250.94" cy="137.6" r="2.1" fill="#1f77b4"/>
<circle cx="1255.62" cy="146.03" r="2.1" fill="#1f77b4"/>
<circle cx="1260.3" cy="132.32" r="2.1" fill="#1f77b4"/>
<circle cx="1264.98" cy="127.66" r="2.1" fill="#1f77b4"/>
<circle cx="1269.66" cy="112.37" r="2.1" fill="#1f77b4"/>
<circle cx="1274.34" cy="94.96" r="2.1" fill="#1f77b4"/>
<circle cx="1279.02" cy="85.47" r="2.1" fill="#1f77b4"/>
<circle cx="1283.7" cy="106.13" r="2.1" fill="#1f77b4"/>
<circle cx="1288.38" cy="97.69" r="2.1" fill="#1f77b4"/>
<path d="M1068.42,123.53 L1069.59,123.53 L1070.76,123.53 L1071.93,123.53 L1073.1,123.53 L1074.27,123.53 L1075.44,123.53 L1076.61,123.53 L1077.78,123.53 L1078.95,123.53 L1080.12,123.53 L1081.29,123.53 L1082.46,123.53 L1083.63,123.53 L1084.8,123.53 L1085.97,123.53 L1087.14,123.53 L1088.31,123.53 L1089.48,123.53 L1090.65,123.53 L1091.82,123.53 L1092.99,123.53 L1094.16,123.53 L1095.33,123.53 L1096.5,123.53 L1097.67,123.53 L1098.84,123.53 L1100.01,123.53 L1101.18,123.53 L1102.35,123.53 L1103.52,123.53 L1104.69,123.53 L1105.86,123.53 L1107.03,123.53 L1108.2,123.53 L1109.37,123.53 L1110.54,123.53 L1111.71,123.53 L1112.88,123.53 L1114.05,123.53 L1115.22,123.53 L1116.39,123.53 L1117.56,123.53 L1118.73,123.53 L1119.9,123.53 L1121.07,123.53 L1122.24,123.53 L1123.41,123.53 L1124.58,123.53 L1125.75,123.53 L1126.92,123.53 L1128.09,123.53 L1129.26,123.53 L1130.43,123.53 L1131.6,123.53 L1132.77,123.53 L1133.94,123.53 L1135.11,123.53 L1136.28,123.53 L1137.45,123.53 L1138.62,123.53 L1139.79,123.52 L1140.96,123.52 L1142.13,123.51 L1143.3,123.5 L1144.47,123.48 L1145.64,123.45 L1146.81,123.4 L1147.98,123.33 L1149.15,123.23 L1150.32,123.09 L1151.49,122.89 L1152.66,122.61 L1153.83,122.24 L1155,121.75 L1156.17,121.11 L1157.34,120.29 L1158.51,119.26 L1159.68,118 L1160.85,116.49 L1162.02,114.71 L1163.19,112.67 L1164.36,110.36 L1165.53,107.83 L1166.7,105.12 L1167.87,102.29 L1169.04,99.42 L1170.21,96.61 L1171.38,93.97 L1172.55,91.6 L1173.72,89.59 L1174.89,88.05 L1176.06,87.05 L1177.23,86.63 L1178.4,86.81 L1179.57,87.58 L1180.74,88.92 L1181.91,90.75 L1183.08,92.98 L1184.25,95.53 L1185.42,98.29 L1186.59,101.14 L1187.76,104 L1188.93,106.76 L1190.1,109.38 L1191.27,111.78 L1192.44,113.93 L1193.61,115.81 L1194.78,117.43 L1195.95,118.79 L1197.12,119.9 L1198.29,120.8 L1199.46,121.51 L1200.63,122.06 L1201.8,122.48 L1202.97,122.79 L1204.14,123.02 L1205.31,123.18 L1206.48,123.3 L1207.65,123.38 L1208.82,123.43 L1209.99,123.47 L1211.16,123.49 L1212.33,123.51 L1213.5,123.52 L1214.67,123.52 L1215.84,123.53 L1217.01,123.53 L1218.18,123.53 L1219.35,123.53 L1220.52,123.53 L1221.69,123.53 L1222.86,123.53 L1224.03,123.53 L1225.2,123.53 L1226.37,123.53 L1227.54,123.53 L1228.71,123.53 L1229.88,123.53 L1231.05,123.53 L1232.22,123.53 L1233.39,123.53 L1234.56,123.53 L1235.73,123.53 L1236.9,123.53 L1238.07,123.53 L1239.24,123.53 L1240.41,123.53 L1241.58,123.53 L1242.75,123.53 L1243.92,123.53 L1245.09,123.53 L1246.26,123.53 L1247.43,123.53 L1248.6,123.53 L1249.77,123.53 L1250.94,123.53 L1252.11,123.53 L1253.28,123.53 L1254.45,123.53 L1255.62,123.53 L1256.79,123.53 L1257.96,123.53 L1259.13,123.53 L1260.3,123.53 L1261.47,123.53 L1262.64,123.53 L1263.81,123.53 L1264.98,123.53 L1266.15,123.53 L1267.32,123.53 L1268.49,123.53 L1269.66,123.53 L1270.83,123.53 L1272,123.53 L1273.17,123.53 L1274.34,123.53 L1275.51,123.53 L1276.68,123.53 L1277.85,123.53 L1279.02,123.53 L1280.19,123.53 L1281.36,123.53 L1282.53,123.53 L1283.7,123.53 L1284.87,123.53 L1286.04,123.53 L1287.21,123.53 L1288.38,123.53" fill="none" stroke="#333" stroke-width="1.5"/>
<line x1="1073.1" y1="211" x2="1073.1" y2="214.5" stroke="#3a3a3a" stroke-width="1"/>
<text x="1073.1" y="224.4" font-family="Liberation Sans" font-size="9.54" fill="#262626" stroke="#262626" stroke-width="0.22" textLength="22.9" lengthAdjust="spacingAndGlyphs" text-anchor="middle" xml:space="preserve">3760</text>
<line x1="1119.9" y1="211" x2="1119.9" y2="214.5" stroke="#3a3a3a" stroke-width="1"/>
<text x="1119.9" y="224.4" font-family="Liberation Sans" font-size="9.54" fill="#262626" stroke="#262626" stroke-width="0.22" textLength="22.9" lengthAdjust="spacingAndGlyphs" text-anchor="middle" xml:space="preserve">3780</text>
<line x1="1166.7" y1="211" x2="1166.7" y2="214.5" stroke="#3a3a3a" stroke-width="1"/>
<text x="1166.7" y="224.4" font-family="Liberation Sans" font-size="9.54" fill="#262626" stroke="#262626" stroke-width="0.22" textLength="22.9" lengthAdjust="spacingAndGlyphs" text-anchor="middle" xml:space="preserve">3800</text>
<line x1="1213.5" y1="211" x2="1213.5" y2="214.5" stroke="#3a3a3a" stroke-width="1"/>
<text x="1213.5" y="224.4" font-family="Liberation Sans" font-size="9.54" fill="#262626" stroke="#262626" stroke-width="0.22" textLength="22.9" lengthAdjust="spacingAndGlyphs" text-anchor="middle" xml:space="preserve">3820</text>
<line x1="1260.3" y1="211" x2="1260.3" y2="214.5" stroke="#3a3a3a" stroke-width="1"/>
<text x="1260.3" y="224.4" font-family="Liberation Sans" font-size="9.54" fill="#262626" stroke="#262626" stroke-width="0.22" textLength="22.9" lengthAdjust="spacingAndGlyphs" text-anchor="middle" xml:space="preserve">3840</text>
<line x1="1044.8" y1="204.4" x2="1048.3" y2="204.4" stroke="#3a3a3a" stroke-width="1"/>
<text x="1041.4" y="207.8" font-family="Liberation Sans" font-size="9.54" fill="#262626" stroke="#262626" stroke-width="0.22" textLength="14.31" lengthAdjust="spacingAndGlyphs" text-anchor="end" xml:space="preserve">0.0</text>
<line x1="1044.8" y1="182.43" x2="1048.3" y2="182.43" stroke="#3a3a3a" stroke-width="1"/>
<text x="1041.4" y="185.83" font-family="Liberation Sans" font-size="9.54" fill="#262626" stroke="#262626" stroke-width="0.22" textLength="14.31" lengthAdjust="spacingAndGlyphs" text-anchor="end" xml:space="preserve">2.5</text>
<line x1="1044.8" y1="160.45" x2="1048.3" y2="160.45" stroke="#3a3a3a" stroke-width="1"/>
<text x="1041.4" y="163.85" font-family="Liberation Sans" font-size="9.54" fill="#262626" stroke="#262626" stroke-width="0.22" textLength="14.31" lengthAdjust="spacingAndGlyphs" text-anchor="end" xml:space="preserve">5.0</text>
<line x1="1044.8" y1="138.48" x2="1048.3" y2="138.48" stroke="#3a3a3a" stroke-width="1"/>
<text x="1041.4" y="141.88" font-family="Liberation Sans" font-size="9.54" fill="#262626" stroke="#262626" stroke-width="0.22" textLength="14.31" lengthAdjust="spacingAndGlyphs" text-anchor="end" xml:space="preserve">7.5</text>
<line x1="1044.8" y1="116.5" x2="1048.3" y2="116.5" stroke="#3a3a3a" stroke-width="1"/>
<text x="1041.4" y="119.9" font-family="Liberation Sans" font-size="9.54" fill="#262626" stroke="#262626" stroke-width="0.22" textLength="20.04" lengthAdjust="spacingAndGlyphs" text-anchor="end" xml:space="preserve">10.0</text>
<line x1="1044.8" y1="94.53" x2="1048.3" y2="94.53" stroke="#3a3a3a" stroke-width="1"/>
<text x="1041.4" y="97.93" font-family="Liberation Sans" font-size="9.54" fill="#262626" stroke="#262626" stroke-width="0.22" textLength="20.04" lengthAdjust="spacingAndGlyphs" text-anchor="end" xml:space="preserve">12.5</text>
<line x1="1044.8" y1="72.55" x2="1048.3" y2="72.55" stroke="#3a3a3a" stroke-width="1"/>
<text x="1041.4" y="75.95" font-family="Liberation Sans" font-size="9.54" fill="#262626" stroke="#262626" stroke-width="0.22" textLength="20.04" lengthAdjust="spacingAndGlyphs" text-anchor="end" xml:space="preserve">15.0</text>
<text x="1049.3" y="69.6" font-family="Liberation Sans" font-size="9.33" fill="#000" stroke="#000" stroke-width="0.12" textLength="5.41" lengthAdjust="spacingAndGlyphs" text-anchor="start" xml:space="preserve">e</text>
<text x="1055.3" y="65.4" font-family="Liberation Sans" font-size="6.53" fill="#000" stroke="#000" stroke-width="0.12" textLength="13" lengthAdjust="spacingAndGlyphs" text-anchor="start" xml:space="preserve">−17</text>
<text x="1069.4" y="69.6" font-family="Liberation Sans" font-size="9.33" fill="#000" stroke="#000" stroke-width="0.12" textLength="10.81" lengthAdjust="spacingAndGlyphs" text-anchor="start" xml:space="preserve">x2</text>
<text x="1080.21" y="69.6" font-family="Liberation Sans" font-size="9.33" fill="#000" stroke="#000" stroke-width="0.12" textLength="6.02" lengthAdjust="spacingAndGlyphs" text-anchor="start" xml:space="preserve" font-style="italic">Å</text>
<filter id="blobblur" x="-50%" y="-50%" width="200%" height="200%"><feGaussianBlur stdDeviation="2.5"/></filter>
<text x="515.2" y="41.8" font-family="Liberation Sans" font-size="8.06" fill="#222" stroke="#222" stroke-width="0.12" textLength="31.61" lengthAdjust="spacingAndGlyphs" text-anchor="middle" xml:space="preserve">2D Spec</text>
<text x="608.6" y="41.8" font-family="Liberation Sans" font-size="8.06" fill="#222" stroke="#222" stroke-width="0.12" textLength="34.52" lengthAdjust="spacingAndGlyphs" text-anchor="middle" xml:space="preserve">Pixel Flat</text>
<text x="700.7" y="41.8" font-family="Liberation Sans" font-size="8.06" fill="#222" stroke="#222" stroke-width="0.12" textLength="38.82" lengthAdjust="spacingAndGlyphs" text-anchor="middle" xml:space="preserve">Smoothed</text>
<rect x="466.3" y="46.3" width="283" height="39" fill="#fff"/>
<filter id="nz1" x="0" y="0" width="1" height="1" color-interpolation-filters="sRGB"><feTurbulence type="fractalNoise" baseFrequency="0.45" numOctaves="2" seed="3"/><feColorMatrix type="matrix" values="1 0 0 0 0.2 1 0 0 0 0.2 1 0 0 0 0.2 0 0 0 0 1" result="g"/><feFlood x="473" y="49" width="1" height="1" flood-color="#000"/><feComposite width="3" height="3" x="472" y="48" result="c"/><feTile in="c" result="tl"/><feComposite in="g" in2="tl" operator="in"/><feMorphology operator="dilate" radius="1"/></filter>
<rect x="472" y="48.1" width="86.5" height="35.6" fill="#888" filter="url(#nz1)"/>
<linearGradient id="bg1" x1="0" y1="0" x2="0" y2="1"><stop offset="0" stop-color="#000" stop-opacity="0"/><stop offset="0.05" stop-color="#000" stop-opacity="0"/><stop offset="0.1" stop-color="#000" stop-opacity="0"/><stop offset="0.15" stop-color="#000" stop-opacity="0"/><stop offset="0.2" stop-color="#000" stop-opacity="0.02"/><stop offset="0.25" stop-color="#000" stop-opacity="0.05"/><stop offset="0.3" stop-color="#000" stop-opacity="0.13"/><stop offset="0.35" stop-color="#000" stop-opacity="0.28"/><stop offset="0.4" stop-color="#000" stop-opacity="0.5"/><stop offset="0.45" stop-color="#000" stop-opacity="0.73"/><stop offset="0.5" stop-color="#000" stop-opacity="0.87"/><stop offset="0.55" stop-color="#000" stop-opacity="0.85"/><stop offset="0.6" stop-color="#000" stop-opacity="0.68"/><stop offset="0.65" stop-color="#000" stop-opacity="0.45"/><stop offset="0.7" stop-color="#000" stop-opacity="0.24"/><stop offset="0.75" stop-color="#000" stop-opacity="0.11"/><stop offset="0.8" stop-color="#000" stop-opacity="0.04"/><stop offset="0.85" stop-color="#000" stop-opacity="0.01"/><stop offset="0.9" stop-color="#000" stop-opacity="0"/><stop offset="0.95" stop-color="#000" stop-opacity="0"/><stop offset="1" stop-color="#000" stop-opacity="0"/></linearGradient>
<rect x="472" y="48.1" width="86.5" height="35.6" fill="url(#bg1)"/>
<filter id="nz2" x="0" y="0" width="1" height="1" color-interpolation-filters="sRGB"><feTurbulence type="fractalNoise" baseFrequency="0.1 0.03" numOctaves="2" seed="5"/><feColorMatrix type="matrix" values="0.6 0 0 0 0.32 0.6 0 0 0 0.32 0.6 0 0 0 0.32 0 0 0 0 1" result="g"/></filter>
<rect x="657.9" y="48" width="87.1" height="35.7" fill="#888" filter="url(#nz2)"/>
<linearGradient id="bg2" x1="0" y1="0" x2="0" y2="1"><stop offset="0" stop-color="#000" stop-opacity="0"/><stop offset="0.05" stop-color="#000" stop-opacity="0"/><stop offset="0.1" stop-color="#000" stop-opacity="0.01"/><stop offset="0.15" stop-color="#000" stop-opacity="0.02"/><stop offset="0.2" stop-color="#000" stop-opacity="0.05"/><stop offset="0.25" stop-color="#000" stop-opacity="0.1"/><stop offset="0.3" stop-color="#000" stop-opacity="0.19"/><stop offset="0.35" stop-color="#000" stop-opacity="0.31"/><stop offset="0.4" stop-color="#000" stop-opacity="0.43"/><stop offset="0.45" stop-color="#000" stop-opacity="0.54"/><stop offset="0.5" stop-color="#000" stop-opacity="0.6"/><stop offset="0.55" stop-color="#000" stop-opacity="0.58"/><stop offset="0.6" stop-color="#000" stop-opacity="0.49"/><stop offset="0.65" stop-color="#000" stop-opacity="0.37"/><stop offset="0.7" stop-color="#000" stop-opacity="0.25"/><stop offset="0.75" stop-color="#000" stop-opacity="0.14"/><stop offset="0.8" stop-color="#000" stop-opacity="0.07"/><stop offset="0.85" stop-color="#000" stop-opacity="0.03"/><stop offset="0.9" stop-color="#000" stop-opacity="0.01"/><stop offset="0.95" stop-color="#000" stop-opacity="0"/><stop offset="1" stop-color="#000" stop-opacity="0"/></linearGradient>
<rect x="657.9" y="48" width="87.1" height="35.7" fill="url(#bg2)"/>
<clipPath id="sb0"><rect x="656.6" y="49.3" width="89.1" height="34"/></clipPath>
<g clip-path="url(#sb0)" filter="url(#blobblur)">
<ellipse cx="667" cy="66.3" rx="11" ry="6.0" fill="#000" opacity="0.85"/>
<ellipse cx="689" cy="66.3" rx="10" ry="6.5" fill="#000" opacity="0.9"/>
<ellipse cx="708" cy="66.3" rx="8" ry="6.0" fill="#000" opacity="0.75"/>
<ellipse cx="742" cy="66.3" rx="9" ry="7.0" fill="#000" opacity="0.95"/>
</g>
<rect x="467.6" y="47.3" width="280.6" height="37" fill="none" stroke="#000" stroke-width="2.2"/>
<rect x="466.3" y="46.3" width="2.8" height="39" fill="#000"/>
<text x="748.6" y="61.1" font-family="Liberation Sans" font-size="8.16" fill="#222" stroke="#222" stroke-width="0.12" textLength="36.9" lengthAdjust="spacingAndGlyphs" text-anchor="start" xml:space="preserve">Weighted</text>
<text x="748.6" y="69.9" font-family="Liberation Sans" font-size="8.16" fill="#222" stroke="#222" stroke-width="0.12" textLength="17.27" lengthAdjust="spacingAndGlyphs" text-anchor="start" xml:space="preserve">Sum</text>
<rect x="466.3" y="94" width="283" height="39.3" fill="#fff"/>
<filter id="nz3" x="0" y="0" width="1" height="1" color-interpolation-filters="sRGB"><feTurbulence type="fractalNoise" baseFrequency="0.45" numOctaves="2" seed="11"/><feColorMatrix type="matrix" values="1 0 0 0 0.18 1 0 0 0 0.18 1 0 0 0 0.18 0 0 0 0 1" result="g"/><feFlood x="471" y="97" width="1" height="1" flood-color="#000"/><feComposite width="3" height="3" x="470" y="96" result="c"/><feTile in="c" result="tl"/><feComposite in="g" in2="tl" operator="in"/><feMorphology operator="dilate" radius="1"/></filter>
<rect x="470.1" y="95.8" width="89.6" height="36" fill="#888" filter="url(#nz3)"/>
<linearGradient id="bg3" x1="0" y1="0" x2="0" y2="1"><stop offset="0" stop-color="#000" stop-opacity="0"/><stop offset="0.05" stop-color="#000" stop-opacity="0"/><stop offset="0.1" stop-color="#000" stop-opacity="0"/><stop offset="0.15" stop-color="#000" stop-opacity="0"/><stop offset="0.2" stop-color="#000" stop-opacity="0.01"/><stop offset="0.25" stop-color="#000" stop-opacity="0.04"/><stop offset="0.3" stop-color="#000" stop-opacity="0.11"/><stop offset="0.35" stop-color="#000" stop-opacity="0.24"/><stop offset="0.4" stop-color="#000" stop-opacity="0.45"/><stop offset="0.45" stop-color="#000" stop-opacity="0.69"/><stop offset="0.5" stop-color="#000" stop-opacity="0.85"/><stop offset="0.55" stop-color="#000" stop-opacity="0.86"/><stop offset="0.6" stop-color="#000" stop-opacity="0.71"/><stop offset="0.65" stop-color="#000" stop-opacity="0.48"/><stop offset="0.7" stop-color="#000" stop-opacity="0.26"/><stop offset="0.75" stop-color="#000" stop-opacity="0.12"/><stop offset="0.8" stop-color="#000" stop-opacity="0.04"/><stop offset="0.85" stop-color="#000" stop-opacity="0.01"/><stop offset="0.9" stop-color="#000" stop-opacity="0"/><stop offset="0.95" stop-color="#000" stop-opacity="0"/><stop offset="1" stop-color="#000" stop-opacity="0"/></linearGradient>
<rect x="470.1" y="95.8" width="89.6" height="36" fill="url(#bg3)"/>
<filter id="nz4" x="0" y="0" width="1" height="1" color-interpolation-filters="sRGB"><feTurbulence type="fractalNoise" baseFrequency="0.1 0.03" numOctaves="2" seed="13"/><feColorMatrix type="matrix" values="0.6 0 0 0 0.3 0.6 0 0 0 0.3 0.6 0 0 0 0.3 0 0 0 0 1" result="g"/></filter>
<rect x="656.6" y="95.8" width="89.1" height="36" fill="#888" filter="url(#nz4)"/>
<linearGradient id="bg4" x1="0" y1="0" x2="0" y2="1"><stop offset="0" stop-color="#000" stop-opacity="0"/><stop offset="0.05" stop-color="#000" stop-opacity="0"/><stop offset="0.1" stop-color="#000" stop-opacity="0.01"/><stop offset="0.15" stop-color="#000" stop-opacity="0.03"/><stop offset="0.2" stop-color="#000" stop-opacity="0.06"/><stop offset="0.25" stop-color="#000" stop-opacity="0.11"/><stop offset="0.3" stop-color="#000" stop-opacity="0.2"/><stop offset="0.35" stop-color="#000" stop-opacity="0.32"/><stop offset="0.4" stop-color="#000" stop-opacity="0.44"/><stop offset="0.45" stop-color="#000" stop-opacity="0.54"/><stop offset="0.5" stop-color="#000" stop-opacity="0.6"/><stop offset="0.55" stop-color="#000" stop-opacity="0.58"/><stop offset="0.6" stop-color="#000" stop-opacity="0.5"/><stop offset="0.65" stop-color="#000" stop-opacity="0.38"/><stop offset="0.7" stop-color="#000" stop-opacity="0.26"/><stop offset="0.75" stop-color="#000" stop-opacity="0.16"/><stop offset="0.8" stop-color="#000" stop-opacity="0.08"/><stop offset="0.85" stop-color="#000" stop-opacity="0.04"/><stop offset="0.9" stop-color="#000" stop-opacity="0.02"/><stop offset="0.95" stop-color="#000" stop-opacity="0.01"/><stop offset="1" stop-color="#000" stop-opacity="0"/></linearGradient>
<rect x="656.6" y="95.8" width="89.1" height="36" fill="url(#bg4)"/>
<clipPath id="sb1"><rect x="656.6" y="97.3" width="89.1" height="34"/></clipPath>
<g clip-path="url(#sb1)" filter="url(#blobblur)">
<ellipse cx="667" cy="114.3" rx="11" ry="6.0" fill="#000" opacity="0.85"/>
<ellipse cx="689" cy="114.3" rx="10" ry="6.5" fill="#000" opacity="0.9"/>
<ellipse cx="708" cy="114.3" rx="8" ry="6.0" fill="#000" opacity="0.75"/>
<ellipse cx="742" cy="114.3" rx="9" ry="7.0" fill="#000" opacity="0.95"/>
</g>
<filter id="nz5" x="0" y="0" width="1" height="1" color-interpolation-filters="sRGB"><feTurbulence type="fractalNoise" baseFrequency="0.7" numOctaves="1" seed="31"/><feColorMatrix type="matrix" values="0.12 0 0 0 0.43 0.12 0 0 0 0.43 0.12 0 0 0 0.43 0 0 0 0 1" result="g"/></filter>
<rect x="564.1" y="95.5" width="89.6" height="36.3" fill="#888" filter="url(#nz5)"/>
<rect x="467.4" y="95" width="280.6" height="37.3" fill="none" stroke="#0000ff" stroke-width="2.2"/>
<rect x="466.3" y="94" width="2.6" height="39.3" fill="#0000ff"/>
<text x="463.5" y="105.2" font-family="Liberation Sans" font-size="7.84" fill="#222" stroke="#222" stroke-width="0.12" textLength="16.48" lengthAdjust="spacingAndGlyphs" text-anchor="end" xml:space="preserve">0.33</text>
<text x="463.5" y="114.2" font-family="Liberation Sans" font-size="7.84" fill="#222" stroke="#222" stroke-width="0.12" textLength="16.48" lengthAdjust="spacingAndGlyphs" text-anchor="end" xml:space="preserve">1.43</text>
<text x="463.5" y="123.2" font-family="Liberation Sans" font-size="7.84" fill="#222" stroke="#222" stroke-width="0.12" textLength="14.12" lengthAdjust="spacingAndGlyphs" text-anchor="end" xml:space="preserve">330</text>
<text x="750.9" y="99.4" font-family="Liberation Sans" font-size="6.15" fill="#222" stroke="#222" stroke-width="0.12" textLength="15.58" lengthAdjust="spacingAndGlyphs" text-anchor="start" xml:space="preserve">0.00"</text>
<text x="750.9" y="107.1" font-family="Liberation Sans" font-size="6.15" fill="#222" stroke="#222" stroke-width="0.12" textLength="26.66" lengthAdjust="spacingAndGlyphs" text-anchor="start" xml:space="preserve">(153, 72)</text>
<text x="750.9" y="114.9" font-family="Liberation Sans" font-size="6.15" fill="#222" stroke="#222" stroke-width="0.12" textLength="29.52" lengthAdjust="spacingAndGlyphs" text-anchor="start" xml:space="preserve">20220429</text>
<text x="750.9" y="121.8" font-family="Liberation Sans" font-size="6.15" fill="#222" stroke="#222" stroke-width="0.12" textLength="24.78" lengthAdjust="spacingAndGlyphs" text-anchor="start" xml:space="preserve">v010_02</text>
<text x="750.9" y="128.6" font-family="Liberation Sans" font-size="6.15" fill="#222" stroke="#222" stroke-width="0.12" textLength="35.2" lengthAdjust="spacingAndGlyphs" text-anchor="start" xml:space="preserve">204_RL_007</text>
<rect x="466.3" y="133.6" width="283" height="39.3" fill="#fff"/>
<filter id="nz6" x="0" y="0" width="1" height="1" color-interpolation-filters="sRGB"><feTurbulence type="fractalNoise" baseFrequency="0.5" numOctaves="2" seed="18"/><feColorMatrix type="matrix" values="1.5 0 0 0 -0.12 1.5 0 0 0 -0.12 1.5 0 0 0 -0.12 0 0 0 0 1" result="g"/><feFlood x="471" y="136" width="1" height="1" flood-color="#000"/><feComposite width="3" height="3" x="470" y="135" result="c"/><feTile in="c" result="tl"/><feComposite in="g" in2="tl" operator="in"/><feMorphology operator="dilate" radius="1"/></filter>
<rect x="470.1" y="135.1" width="89.6" height="36.3" fill="#888" filter="url(#nz6)"/>
<linearGradient id="bg5" x1="0" y1="0" x2="0" y2="1"><stop offset="0" stop-color="#000" stop-opacity="0"/><stop offset="0.05" stop-color="#000" stop-opacity="0"/><stop offset="0.1" stop-color="#000" stop-opacity="0"/><stop offset="0.15" stop-color="#000" stop-opacity="0"/><stop offset="0.2" stop-color="#000" stop-opacity="0.01"/><stop offset="0.25" stop-color="#000" stop-opacity="0.03"/><stop offset="0.3" stop-color="#000" stop-opacity="0.05"/><stop offset="0.35" stop-color="#000" stop-opacity="0.09"/><stop offset="0.4" stop-color="#000" stop-opacity="0.13"/><stop offset="0.45" stop-color="#000" stop-opacity="0.18"/><stop offset="0.5" stop-color="#000" stop-opacity="0.21"/><stop offset="0.55" stop-color="#000" stop-opacity="0.22"/><stop offset="0.6" stop-color="#000" stop-opacity="0.2"/><stop offset="0.65" stop-color="#000" stop-opacity="0.16"/><stop offset="0.7" stop-color="#000" stop-opacity="0.11"/><stop offset="0.75" stop-color="#000" stop-opacity="0.07"/><stop offset="0.8" stop-color="#000" stop-opacity="0.04"/><stop offset="0.85" stop-color="#000" stop-opacity="0.02"/><stop offset="0.9" stop-color="#000" stop-opacity="0.01"/><stop offset="0.95" stop-color="#000" stop-opacity="0"/><stop offset="1" stop-color="#000" stop-opacity="0"/></linearGradient>
<rect x="470.1" y="135.1" width="89.6" height="36.3" fill="url(#bg5)"/>
<linearGradient id="bg6" x1="0" y1="0" x2="0" y2="1"><stop offset="0" stop-color="#000" stop-opacity="0"/><stop offset="0.05" stop-color="#000" stop-opacity="0"/><stop offset="0.1" stop-color="#000" stop-opacity="0"/><stop offset="0.15" stop-color="#000" stop-opacity="0"/><stop offset="0.2" stop-color="#000" stop-opacity="0"/><stop offset="0.25" stop-color="#000" stop-opacity="0"/><stop offset="0.3" stop-color="#000" stop-opacity="0"/><stop offset="0.35" stop-color="#000" stop-opacity="0"/><stop offset="0.4" stop-color="#000" stop-opacity="0"/><stop offset="0.45" stop-color="#000" stop-opacity="0"/><stop offset="0.5" stop-color="#000" stop-opacity="0"/><stop offset="0.55" stop-color="#000" stop-opacity="0"/><stop offset="0.6" stop-color="#000" stop-opacity="0"/><stop offset="0.65" stop-color="#000" stop-opacity="0"/><stop offset="0.7" stop-color="#000" stop-opacity="0"/><stop offset="0.75" stop-color="#000" stop-opacity="0"/><stop offset="0.8" stop-color="#000" stop-opacity="0"/><stop offset="0.85" stop-color="#000" stop-opacity="0.02"/><stop offset="0.9" stop-color="#000" stop-opacity="0.08"/><stop offset="0.95" stop-color="#000" stop-opacity="0.19"/><stop offset="1" stop-color="#000" stop-opacity="0.31"/></linearGradient>
<rect x="470.1" y="135.1" width="89.6" height="36.3" fill="url(#bg6)"/>
<filter id="nz7" x="0" y="0" width="1" height="1" color-interpolation-filters="sRGB"><feTurbulence type="fractalNoise" baseFrequency="0.12 0.035" numOctaves="2" seed="24"/><feColorMatrix type="matrix" values="0.65 0 0 0 0.29 0.65 0 0 0 0.29 0.65 0 0 0 0.29 0 0 0 0 1" result="g"/></filter>
<rect x="656.6" y="135.1" width="89.1" height="36.3" fill="#888" filter="url(#nz7)"/>
<linearGradient id="bg7" x1="0" y1="0" x2="0" y2="1"><stop offset="0" stop-color="#000" stop-opacity="0"/><stop offset="0.05" stop-color="#000" stop-opacity="0"/><stop offset="0.1" stop-color="#000" stop-opacity="0"/><stop offset="0.15" stop-color="#000" stop-opacity="0"/><stop offset="0.2" stop-color="#000" stop-opacity="0.01"/><stop offset="0.25" stop-color="#000" stop-opacity="0.02"/><stop offset="0.3" stop-color="#000" stop-opacity="0.05"/><stop offset="0.35" stop-color="#000" stop-opacity="0.1"/><stop offset="0.4" stop-color="#000" stop-opacity="0.16"/><stop offset="0.45" stop-color="#000" stop-opacity="0.23"/><stop offset="0.5" stop-color="#000" stop-opacity="0.29"/><stop offset="0.55" stop-color="#000" stop-opacity="0.3"/><stop offset="0.6" stop-color="#000" stop-opacity="0.26"/><stop offset="0.65" stop-color="#000" stop-opacity="0.2"/><stop offset="0.7" stop-color="#000" stop-opacity="0.13"/><stop offset="0.75" stop-color="#000" stop-opacity="0.07"/><stop offset="0.8" stop-color="#000" stop-opacity="0.03"/><stop offset="0.85" stop-color="#000" stop-opacity="0.01"/><stop offset="0.9" stop-color="#000" stop-opacity="0"/><stop offset="0.95" stop-color="#000" stop-opacity="0"/><stop offset="1" stop-color="#000" stop-opacity="0"/></linearGradient>
<rect x="656.6" y="135.1" width="89.1" height="36.3" fill="url(#bg7)"/>
<linearGradient id="bg8" x1="0" y1="0" x2="0" y2="1"><stop offset="0" stop-color="#000" stop-opacity="0"/><stop offset="0.05" stop-color="#000" stop-opacity="0"/><stop offset="0.1" stop-color="#000" stop-opacity="0"/><stop offset="0.15" stop-color="#000" stop-opacity="0"/><stop offset="0.2" stop-color="#000" stop-opacity="0"/><stop offset="0.25" stop-color="#000" stop-opacity="0"/><stop offset="0.3" stop-color="#000" stop-opacity="0"/><stop offset="0.35" stop-color="#000" stop-opacity="0"/><stop offset="0.4" stop-color="#000" stop-opacity="0"/><stop offset="0.45" stop-color="#000" stop-opacity="0"/><stop offset="0.5" stop-color="#000" stop-opacity="0"/><stop offset="0.55" stop-color="#000" stop-opacity="0"/><stop offset="0.6" stop-color="#000" stop-opacity="0"/><stop offset="0.65" stop-color="#000" stop-opacity="0"/><stop offset="0.7" stop-color="#000" stop-opacity="0"/><stop offset="0.75" stop-color="#000" stop-opacity="0.01"/><stop offset="0.8" stop-color="#000" stop-opacity="0.04"/><stop offset="0.85" stop-color="#000" stop-opacity="0.12"/><stop offset="0.9" stop-color="#000" stop-opacity="0.26"/><stop offset="0.95" stop-color="#000" stop-opacity="0.41"/><stop offset="1" stop-color="#000" stop-opacity="0.44"/></linearGradient>
<rect x="656.6" y="135.1" width="89.1" height="36.3" fill="url(#bg8)"/>
<filter id="nz8" x="0" y="0" width="1" height="1" color-interpolation-filters="sRGB"><feTurbulence type="fractalNoise" baseFrequency="0.7" numOctaves="1" seed="32"/><feColorMatrix type="matrix" values="0.12 0 0 0 0.43 0.12 0 0 0 0.43 0.12 0 0 0 0.43 0 0 0 0 1" result="g"/></filter>
<rect x="564.1" y="135.1" width="89.6" height="36.3" fill="#888" filter="url(#nz8)"/>
<rect x="467.4" y="134.6" width="280.6" height="37.3" fill="none" stroke="#00ff00" stroke-width="2.2"/>
<rect x="466.3" y="133.6" width="2.6" height="39.3" fill="#00ff00"/>
<text x="463.5" y="144.8" font-family="Liberation Sans" font-size="7.84" fill="#222" stroke="#222" stroke-width="0.12" textLength="16.48" lengthAdjust="spacingAndGlyphs" text-anchor="end" xml:space="preserve">0.19</text>
<text x="463.5" y="153.8" font-family="Liberation Sans" font-size="7.84" fill="#222" stroke="#222" stroke-width="0.12" textLength="16.48" lengthAdjust="spacingAndGlyphs" text-anchor="end" xml:space="preserve">1.45</text>
<text x="463.5" y="162.8" font-family="Liberation Sans" font-size="7.84" fill="#222" stroke="#222" stroke-width="0.12" textLength="14.12" lengthAdjust="spacingAndGlyphs" text-anchor="end" xml:space="preserve">330</text>
<text x="750.9" y="139" font-family="Liberation Sans" font-size="6.15" fill="#222" stroke="#222" stroke-width="0.12" textLength="15.58" lengthAdjust="spacingAndGlyphs" text-anchor="start" xml:space="preserve">1.40"</text>
<text x="750.9" y="146.7" font-family="Liberation Sans" font-size="6.15" fill="#222" stroke="#222" stroke-width="0.12" textLength="26.66" lengthAdjust="spacingAndGlyphs" text-anchor="start" xml:space="preserve">(153, 72)</text>
<text x="750.9" y="154.5" font-family="Liberation Sans" font-size="6.15" fill="#222" stroke="#222" stroke-width="0.12" textLength="29.52" lengthAdjust="spacingAndGlyphs" text-anchor="start" xml:space="preserve">20220429</text>
<text x="750.9" y="161.4" font-family="Liberation Sans" font-size="6.15" fill="#222" stroke="#222" stroke-width="0.12" textLength="24.78" lengthAdjust="spacingAndGlyphs" text-anchor="start" xml:space="preserve">v010_01</text>
<text x="750.9" y="168.2" font-family="Liberation Sans" font-size="6.15" fill="#222" stroke="#222" stroke-width="0.12" textLength="35.2" lengthAdjust="spacingAndGlyphs" text-anchor="start" xml:space="preserve">204_RL_007</text>
<rect x="466.3" y="173.3" width="283" height="39.3" fill="#fff"/>
<filter id="nz9" x="0" y="0" width="1" height="1" color-interpolation-filters="sRGB"><feTurbulence type="fractalNoise" baseFrequency="0.5" numOctaves="2" seed="19"/><feColorMatrix type="matrix" values="1.5 0 0 0 -0.12 1.5 0 0 0 -0.12 1.5 0 0 0 -0.12 0 0 0 0 1" result="g"/><feFlood x="471" y="176" width="1" height="1" flood-color="#000"/><feComposite width="3" height="3" x="470" y="175" result="c"/><feTile in="c" result="tl"/><feComposite in="g" in2="tl" operator="in"/><feMorphology operator="dilate" radius="1"/></filter>
<rect x="470.1" y="174.8" width="89.6" height="36.3" fill="#888" filter="url(#nz9)"/>
<linearGradient id="bg9" x1="0" y1="0" x2="0" y2="1"><stop offset="0" stop-color="#000" stop-opacity="0"/><stop offset="0.05" stop-color="#000" stop-opacity="0"/><stop offset="0.1" stop-color="#000" stop-opacity="0"/><stop offset="0.15" stop-color="#000" stop-opacity="0"/><stop offset="0.2" stop-color="#000" stop-opacity="0.01"/><stop offset="0.25" stop-color="#000" stop-opacity="0.03"/><stop offset="0.3" stop-color="#000" stop-opacity="0.05"/><stop offset="0.35" stop-color="#000" stop-opacity="0.09"/><stop offset="0.4" stop-color="#000" stop-opacity="0.13"/><stop offset="0.45" stop-color="#000" stop-opacity="0.18"/><stop offset="0.5" stop-color="#000" stop-opacity="0.21"/><stop offset="0.55" stop-color="#000" stop-opacity="0.22"/><stop offset="0.6" stop-color="#000" stop-opacity="0.2"/><stop offset="0.65" stop-color="#000" stop-opacity="0.16"/><stop offset="0.7" stop-color="#000" stop-opacity="0.11"/><stop offset="0.75" stop-color="#000" stop-opacity="0.07"/><stop offset="0.8" stop-color="#000" stop-opacity="0.04"/><stop offset="0.85" stop-color="#000" stop-opacity="0.02"/><stop offset="0.9" stop-color="#000" stop-opacity="0.01"/><stop offset="0.95" stop-color="#000" stop-opacity="0"/><stop offset="1" stop-color="#000" stop-opacity="0"/></linearGradient>
<rect x="470.1" y="174.8" width="89.6" height="36.3" fill="url(#bg9)"/>
<linearGradient id="bg10" x1="0" y1="0" x2="0" y2="1"><stop offset="0" stop-color="#000" stop-opacity="0"/><stop offset="0.05" stop-color="#000" stop-opacity="0"/><stop offset="0.1" stop-color="#000" stop-opacity="0"/><stop offset="0.15" stop-color="#000" stop-opacity="0"/><stop offset="0.2" stop-color="#000" stop-opacity="0"/><stop offset="0.25" stop-color="#000" stop-opacity="0"/><stop offset="0.3" stop-color="#000" stop-opacity="0"/><stop offset="0.35" stop-color="#000" stop-opacity="0"/><stop offset="0.4" stop-color="#000" stop-opacity="0"/><stop offset="0.45" stop-color="#000" stop-opacity="0"/><stop offset="0.5" stop-color="#000" stop-opacity="0"/><stop offset="0.55" stop-color="#000" stop-opacity="0"/><stop offset="0.6" stop-color="#000" stop-opacity="0"/><stop offset="0.65" stop-color="#000" stop-opacity="0"/><stop offset="0.7" stop-color="#000" stop-opacity="0"/><stop offset="0.75" stop-color="#000" stop-opacity="0"/><stop offset="0.8" stop-color="#000" stop-opacity="0"/><stop offset="0.85" stop-color="#000" stop-opacity="0.02"/><stop offset="0.9" stop-color="#000" stop-opacity="0.08"/><stop offset="0.95" stop-color="#000" stop-opacity="0.19"/><stop offset="1" stop-color="#000" stop-opacity="0.31"/></linearGradient>
<rect x="470.1" y="174.8" width="89.6" height="36.3" fill="url(#bg10)"/>
<filter id="nz10" x="0" y="0" width="1" height="1" color-interpolation-filters="sRGB"><feTurbulence type="fractalNoise" baseFrequency="0.12 0.035" numOctaves="2" seed="25"/><feColorMatrix type="matrix" values="0.65 0 0 0 0.29 0.65 0 0 0 0.29 0.65 0 0 0 0.29 0 0 0 0 1" result="g"/></filter>
<rect x="656.6" y="174.8" width="89.1" height="36.3" fill="#888" filter="url(#nz10)"/>
<linearGradient id="bg11" x1="0" y1="0" x2="0" y2="1"><stop offset="0" stop-color="#000" stop-opacity="0"/><stop offset="0.05" stop-color="#000" stop-opacity="0"/><stop offset="0.1" stop-color="#000" stop-opacity="0"/><stop offset="0.15" stop-color="#000" stop-opacity="0"/><stop offset="0.2" stop-color="#000" stop-opacity="0.01"/><stop offset="0.25" stop-color="#000" stop-opacity="0.02"/><stop offset="0.3" stop-color="#000" stop-opacity="0.05"/><stop offset="0.35" stop-color="#000" stop-opacity="0.1"/><stop offset="0.4" stop-color="#000" stop-opacity="0.16"/><stop offset="0.45" stop-color="#000" stop-opacity="0.23"/><stop offset="0.5" stop-color="#000" stop-opacity="0.29"/><stop offset="0.55" stop-color="#000" stop-opacity="0.3"/><stop offset="0.6" stop-color="#000" stop-opacity="0.26"/><stop offset="0.65" stop-color="#000" stop-opacity="0.2"/><stop offset="0.7" stop-color="#000" stop-opacity="0.13"/><stop offset="0.75" stop-color="#000" stop-opacity="0.07"/><stop offset="0.8" stop-color="#000" stop-opacity="0.03"/><stop offset="0.85" stop-color="#000" stop-opacity="0.01"/><stop offset="0.9" stop-color="#000" stop-opacity="0"/><stop offset="0.95" stop-color="#000" stop-opacity="0"/><stop offset="1" stop-color="#000" stop-opacity="0"/></linearGradient>
<rect x="656.6" y="174.8" width="89.1" height="36.3" fill="url(#bg11)"/>
<linearGradient id="bg12" x1="0" y1="0" x2="0" y2="1"><stop offset="0" stop-color="#000" stop-opacity="0"/><stop offset="0.05" stop-color="#000" stop-opacity="0"/><stop offset="0.1" stop-color="#000" stop-opacity="0"/><stop offset="0.15" stop-color="#000" stop-opacity="0"/><stop offset="0.2" stop-color="#000" stop-opacity="0"/><stop offset="0.25" stop-color="#000" stop-opacity="0"/><stop offset="0.3" stop-color="#000" stop-opacity="0"/><stop offset="0.35" stop-color="#000" stop-opacity="0"/><stop offset="0.4" stop-color="#000" stop-opacity="0"/><stop offset="0.45" stop-color="#000" stop-opacity="0"/><stop offset="0.5" stop-color="#000" stop-opacity="0"/><stop offset="0.55" stop-color="#000" stop-opacity="0"/><stop offset="0.6" stop-color="#000" stop-opacity="0"/><stop offset="0.65" stop-color="#000" stop-opacity="0"/><stop offset="0.7" stop-color="#000" stop-opacity="0"/><stop offset="0.75" stop-color="#000" stop-opacity="0.01"/><stop offset="0.8" stop-color="#000" stop-opacity="0.04"/><stop offset="0.85" stop-color="#000" stop-opacity="0.12"/><stop offset="0.9" stop-color="#000" stop-opacity="0.26"/><stop offset="0.95" stop-color="#000" stop-opacity="0.41"/><stop offset="1" stop-color="#000" stop-opacity="0.44"/></linearGradient>
<rect x="656.6" y="174.8" width="89.1" height="36.3" fill="url(#bg12)"/>
<filter id="nz11" x="0" y="0" width="1" height="1" color-interpolation-filters="sRGB"><feTurbulence type="fractalNoise" baseFrequency="0.7" numOctaves="1" seed="33"/><feColorMatrix type="matrix" values="0.12 0 0 0 0.43 0.12 0 0 0 0.43 0.12 0 0 0 0.43 0 0 0 0 1" result="g"/></filter>
<rect x="564.1" y="174.8" width="89.6" height="36.3" fill="#888" filter="url(#nz11)"/>
<rect x="467.4" y="174.3" width="280.6" height="37.3" fill="none" stroke="#ffa500" stroke-width="2.2"/>
<rect x="466.3" y="173.3" width="2.6" height="39.3" fill="#ffa500"/>
<text x="463.5" y="184.5" font-family="Liberation Sans" font-size="7.84" fill="#222" stroke="#222" stroke-width="0.12" textLength="16.48" lengthAdjust="spacingAndGlyphs" text-anchor="end" xml:space="preserve">0.16</text>
<text x="463.5" y="193.5" font-family="Liberation Sans" font-size="7.84" fill="#222" stroke="#222" stroke-width="0.12" textLength="16.48" lengthAdjust="spacingAndGlyphs" text-anchor="end" xml:space="preserve">1.35</text>
<text x="463.5" y="202.5" font-family="Liberation Sans" font-size="7.84" fill="#222" stroke="#222" stroke-width="0.12" textLength="14.12" lengthAdjust="spacingAndGlyphs" text-anchor="end" xml:space="preserve">310</text>
<text x="750.9" y="178.7" font-family="Liberation Sans" font-size="6.15" fill="#222" stroke="#222" stroke-width="0.12" textLength="15.58" lengthAdjust="spacingAndGlyphs" text-anchor="start" xml:space="preserve">1.49"</text>
<text x="750.9" y="186.4" font-family="Liberation Sans" font-size="6.15" fill="#222" stroke="#222" stroke-width="0.12" textLength="30.35" lengthAdjust="spacingAndGlyphs" text-anchor="start" xml:space="preserve">(153, 247)</text>
<text x="750.9" y="194.2" font-family="Liberation Sans" font-size="6.15" fill="#222" stroke="#222" stroke-width="0.12" textLength="29.52" lengthAdjust="spacingAndGlyphs" text-anchor="start" xml:space="preserve">20220429</text>
<text x="750.9" y="201.1" font-family="Liberation Sans" font-size="6.15" fill="#222" stroke="#222" stroke-width="0.12" textLength="24.78" lengthAdjust="spacingAndGlyphs" text-anchor="start" xml:space="preserve">v010_03</text>
<text x="750.9" y="207.9" font-family="Liberation Sans" font-size="6.15" fill="#222" stroke="#222" stroke-width="0.12" textLength="35.2" lengthAdjust="spacingAndGlyphs" text-anchor="start" xml:space="preserve">204_RL_027</text>
<rect x="466.3" y="212.9" width="283" height="39.3" fill="#fff"/>
<filter id="nz12" x="0" y="0" width="1" height="1" color-interpolation-filters="sRGB"><feTurbulence type="fractalNoise" baseFrequency="0.5" numOctaves="2" seed="20"/><feColorMatrix type="matrix" values="1.5 0 0 0 -0.12 1.5 0 0 0 -0.12 1.5 0 0 0 -0.12 0 0 0 0 1" result="g"/><feFlood x="471" y="215" width="1" height="1" flood-color="#000"/><feComposite width="3" height="3" x="470" y="214" result="c"/><feTile in="c" result="tl"/><feComposite in="g" in2="tl" operator="in"/><feMorphology operator="dilate" radius="1"/></filter>
<rect x="470.1" y="214.4" width="89.6" height="36.3" fill="#888" filter="url(#nz12)"/>
<linearGradient id="bg13" x1="0" y1="0" x2="0" y2="1"><stop offset="0" stop-color="#000" stop-opacity="0"/><stop offset="0.05" stop-color="#000" stop-opacity="0"/><stop offset="0.1" stop-color="#000" stop-opacity="0"/><stop offset="0.15" stop-color="#000" stop-opacity="0"/><stop offset="0.2" stop-color="#000" stop-opacity="0.01"/><stop offset="0.25" stop-color="#000" stop-opacity="0.03"/><stop offset="0.3" stop-color="#000" stop-opacity="0.05"/><stop offset="0.35" stop-color="#000" stop-opacity="0.09"/><stop offset="0.4" stop-color="#000" stop-opacity="0.13"/><stop offset="0.45" stop-color="#000" stop-opacity="0.18"/><stop offset="0.5" stop-color="#000" stop-opacity="0.21"/><stop offset="0.55" stop-color="#000" stop-opacity="0.22"/><stop offset="0.6" stop-color="#000" stop-opacity="0.2"/><stop offset="0.65" stop-color="#000" stop-opacity="0.16"/><stop offset="0.7" stop-color="#000" stop-opacity="0.11"/><stop offset="0.75" stop-color="#000" stop-opacity="0.07"/><stop offset="0.8" stop-color="#000" stop-opacity="0.04"/><stop offset="0.85" stop-color="#000" stop-opacity="0.02"/><stop offset="0.9" stop-color="#000" stop-opacity="0.01"/><stop offset="0.95" stop-color="#000" stop-opacity="0"/><stop offset="1" stop-color="#000" stop-opacity="0"/></linearGradient>
<rect x="470.1" y="214.4" width="89.6" height="36.3" fill="url(#bg13)"/>
<linearGradient id="bg14" x1="0" y1="0" x2="0" y2="1"><stop offset="0" stop-color="#000" stop-opacity="0"/><stop offset="0.05" stop-color="#000" stop-opacity="0"/><stop offset="0.1" stop-color="#000" stop-opacity="0"/><stop offset="0.15" stop-color="#000" stop-opacity="0"/><stop offset="0.2" stop-color="#000" stop-opacity="0"/><stop offset="0.25" stop-color="#000" stop-opacity="0"/><stop offset="0.3" stop-color="#000" stop-opacity="0"/><stop offset="0.35" stop-color="#000" stop-opacity="0"/><stop offset="0.4" stop-color="#000" stop-opacity="0"/><stop offset="0.45" stop-color="#000" stop-opacity="0"/><stop offset="0.5" stop-color="#000" stop-opacity="0"/><stop offset="0.55" stop-color="#000" stop-opacity="0"/><stop offset="0.6" stop-color="#000" stop-opacity="0"/><stop offset="0.65" stop-color="#000" stop-opacity="0"/><stop offset="0.7" stop-color="#000" stop-opacity="0"/><stop offset="0.75" stop-color="#000" stop-opacity="0"/><stop offset="0.8" stop-color="#000" stop-opacity="0"/><stop offset="0.85" stop-color="#000" stop-opacity="0.02"/><stop offset="0.9" stop-color="#000" stop-opacity="0.08"/><stop offset="0.95" stop-color="#000" stop-opacity="0.19"/><stop offset="1" stop-color="#000" stop-opacity="0.31"/></linearGradient>
<rect x="470.1" y="214.4" width="89.6" height="36.3" fill="url(#bg14)"/>
<filter id="nz13" x="0" y="0" width="1" height="1" color-interpolation-filters="sRGB"><feTurbulence type="fractalNoise" baseFrequency="0.12 0.035" numOctaves="2" seed="26"/><feColorMatrix type="matrix" values="0.65 0 0 0 0.29 0.65 0 0 0 0.29 0.65 0 0 0 0.29 0 0 0 0 1" result="g"/></filter>
<rect x="656.6" y="214.4" width="89.1" height="36.3" fill="#888" filter="url(#nz13)"/>
<linearGradient id="bg15" x1="0" y1="0" x2="0" y2="1"><stop offset="0" stop-color="#000" stop-opacity="0"/><stop offset="0.05" stop-color="#000" stop-opacity="0"/><stop offset="0.1" stop-color="#000" stop-opacity="0"/><stop offset="0.15" stop-color="#000" stop-opacity="0"/><stop offset="0.2" stop-color="#000" stop-opacity="0.01"/><stop offset="0.25" stop-color="#000" stop-opacity="0.02"/><stop offset="0.3" stop-color="#000" stop-opacity="0.05"/><stop offset="0.35" stop-color="#000" stop-opacity="0.1"/><stop offset="0.4" stop-color="#000" stop-opacity="0.16"/><stop offset="0.45" stop-color="#000" stop-opacity="0.23"/><stop offset="0.5" stop-color="#000" stop-opacity="0.29"/><stop offset="0.55" stop-color="#000" stop-opacity="0.3"/><stop offset="0.6" stop-color="#000" stop-opacity="0.26"/><stop offset="0.65" stop-color="#000" stop-opacity="0.2"/><stop offset="0.7" stop-color="#000" stop-opacity="0.13"/><stop offset="0.75" stop-color="#000" stop-opacity="0.07"/><stop offset="0.8" stop-color="#000" stop-opacity="0.03"/><stop offset="0.85" stop-color="#000" stop-opacity="0.01"/><stop offset="0.9" stop-color="#000" stop-opacity="0"/><stop offset="0.95" stop-color="#000" stop-opacity="0"/><stop offset="1" stop-color="#000" stop-opacity="0"/></linearGradient>
<rect x="656.6" y="214.4" width="89.1" height="36.3" fill="url(#bg15)"/>
<linearGradient id="bg16" x1="0" y1="0" x2="0" y2="1"><stop offset="0" stop-color="#000" stop-opacity="0"/><stop offset="0.05" stop-color="#000" stop-opacity="0"/><stop offset="0.1" stop-color="#000" stop-opacity="0"/><stop offset="0.15" stop-color="#000" stop-opacity="0"/><stop offset="0.2" stop-color="#000" stop-opacity="0"/><stop offset="0.25" stop-color="#000" stop-opacity="0"/><stop offset="0.3" stop-color="#000" stop-opacity="0"/><stop offset="0.35" stop-color="#000" stop-opacity="0"/><stop offset="0.4" stop-color="#000" stop-opacity="0"/><stop offset="0.45" stop-color="#000" stop-opacity="0"/><stop offset="0.5" stop-color="#000" stop-opacity="0"/><stop offset="0.55" stop-color="#000" stop-opacity="0"/><stop offset="0.6" stop-color="#000" stop-opacity="0"/><stop offset="0.65" stop-color="#000" stop-opacity="0"/><stop offset="0.7" stop-color="#000" stop-opacity="0"/><stop offset="0.75" stop-color="#000" stop-opacity="0.01"/><stop offset="0.8" stop-color="#000" stop-opacity="0.04"/><stop offset="0.85" stop-color="#000" stop-opacity="0.12"/><stop offset="0.9" stop-color="#000" stop-opacity="0.26"/><stop offset="0.95" stop-color="#000" stop-opacity="0.41"/><stop offset="1" stop-color="#000" stop-opacity="0.44"/></linearGradient>
<rect x="656.6" y="214.4" width="89.1" height="36.3" fill="url(#bg16)"/>
<filter id="nz14" x="0" y="0" width="1" height="1" color-interpolation-filters="sRGB"><feTurbulence type="fractalNoise" baseFrequency="0.7" numOctaves="1" seed="34"/><feColorMatrix type="matrix" values="0.12 0 0 0 0.43 0.12 0 0 0 0.43 0.12 0 0 0 0.43 0 0 0 0 1" result="g"/></filter>
<rect x="564.1" y="214.4" width="89.6" height="36.3" fill="#888" filter="url(#nz14)"/>
<rect x="467.4" y="213.9" width="280.6" height="37.3" fill="none" stroke="#ff0000" stroke-width="2.2"/>
<rect x="466.3" y="212.9" width="2.6" height="39.3" fill="#ff0000"/>
<text x="463.5" y="224.1" font-family="Liberation Sans" font-size="7.84" fill="#222" stroke="#222" stroke-width="0.12" textLength="16.48" lengthAdjust="spacingAndGlyphs" text-anchor="end" xml:space="preserve">0.09</text>
<text x="463.5" y="233.1" font-family="Liberation Sans" font-size="7.84" fill="#222" stroke="#222" stroke-width="0.12" textLength="16.48" lengthAdjust="spacingAndGlyphs" text-anchor="end" xml:space="preserve">1.31</text>
<text x="463.5" y="242.1" font-family="Liberation Sans" font-size="7.84" fill="#222" stroke="#222" stroke-width="0.12" textLength="14.12" lengthAdjust="spacingAndGlyphs" text-anchor="end" xml:space="preserve">330</text>
<text x="750.9" y="218.3" font-family="Liberation Sans" font-size="6.15" fill="#222" stroke="#222" stroke-width="0.12" textLength="15.58" lengthAdjust="spacingAndGlyphs" text-anchor="start" xml:space="preserve">1.40"</text>
<text x="750.9" y="226" font-family="Liberation Sans" font-size="6.15" fill="#222" stroke="#222" stroke-width="0.12" textLength="26.66" lengthAdjust="spacingAndGlyphs" text-anchor="start" xml:space="preserve">(153, 72)</text>
<text x="750.9" y="233.8" font-family="Liberation Sans" font-size="6.15" fill="#222" stroke="#222" stroke-width="0.12" textLength="29.52" lengthAdjust="spacingAndGlyphs" text-anchor="start" xml:space="preserve">20220429</text>
<text x="750.9" y="240.7" font-family="Liberation Sans" font-size="6.15" fill="#222" stroke="#222" stroke-width="0.12" textLength="24.78" lengthAdjust="spacingAndGlyphs" text-anchor="start" xml:space="preserve">v010_03</text>
<text x="750.9" y="247.5" font-family="Liberation Sans" font-size="6.15" fill="#222" stroke="#222" stroke-width="0.12" textLength="35.2" lengthAdjust="spacingAndGlyphs" text-anchor="start" xml:space="preserve">204_RL_007</text>
<text x="865.2" y="47" font-family="Liberation Sans" font-size="10.6" fill="#222" stroke="#222" stroke-width="0.22" textLength="44.16" lengthAdjust="spacingAndGlyphs" text-anchor="middle" xml:space="preserve">With Sky</text>
<text x="865.2" y="58.5" font-family="Liberation Sans" font-size="10.39" fill="#222" stroke="#222" stroke-width="0.22" textLength="61.65" lengthAdjust="spacingAndGlyphs" text-anchor="middle" xml:space="preserve">x, y: 153, 72</text>
<text x="965.9" y="47" font-family="Liberation Sans" font-size="10.39" fill="#222" stroke="#222" stroke-width="0.22" textLength="61.62" lengthAdjust="spacingAndGlyphs" text-anchor="middle" xml:space="preserve">Clean Image</text>
<text x="965.9" y="58.5" font-family="Liberation Sans" font-size="10.39" fill="#222" stroke="#222" stroke-width="0.22" textLength="61.65" lengthAdjust="spacingAndGlyphs" text-anchor="middle" xml:space="preserve">x, y: 153, 72</text>
<rect x="831.8" y="64.4" width="67.1" height="169.1" fill="#f4f4f4"/>
<linearGradient id="strg" x1="0" y1="0" x2="0" y2="1"><stop offset="0.08" stop-color="#000" stop-opacity="0"/><stop offset="0.5" stop-color="#000" stop-opacity="0.42"/><stop offset="0.92" stop-color="#000" stop-opacity="0"/></linearGradient>
<pattern id="strp" patternUnits="userSpaceOnUse" x="0" y="70" width="200" height="12.2"><rect width="200" height="12.2" fill="url(#strg)"/></pattern>
<rect x="831.8" y="64.4" width="67.1" height="169.1" fill="url(#strp)"/>
<filter id="nz15" x="0" y="0" width="1" height="1" color-interpolation-filters="sRGB"><feTurbulence type="fractalNoise" baseFrequency="0.35" numOctaves="2" seed="41"/><feColorMatrix type="matrix" values="1 0 0 0 -0.2 1 0 0 0 -0.2 1 0 0 0 -0.2 0 0 0 0 1" result="g"/></filter>
<rect x="831.8" y="64.4" width="67.1" height="169.1" fill="#888" filter="url(#nz15)" opacity="0.22" style="mix-blend-mode:multiply"/>
<linearGradient id="colg" x1="0" y1="0" x2="1" y2="0"><stop offset="0" stop-color="#000" stop-opacity="0"/><stop offset="0.5" stop-color="#000" stop-opacity="0.45"/><stop offset="1" stop-color="#000" stop-opacity="0"/></linearGradient>
<rect x="877" y="64.4" width="12" height="169.1" fill="url(#colg)" opacity="0.5"/>
<rect x="879" y="64.4" width="8" height="169.1" fill="url(#strp)"/>
<linearGradient id="bg17" x1="0" y1="0" x2="0" y2="1"><stop offset="0" stop-color="#000" stop-opacity="0"/><stop offset="0.05" stop-color="#000" stop-opacity="0"/><stop offset="0.1" stop-color="#000" stop-opacity="0"/><stop offset="0.15" stop-color="#000" stop-opacity="0"/><stop offset="0.2" stop-color="#000" stop-opacity="0"/><stop offset="0.25" stop-color="#000" stop-opacity="0"/><stop offset="0.3" stop-color="#000" stop-opacity="0"/><stop offset="0.35" stop-color="#000" stop-opacity="0"/><stop offset="0.4" stop-color="#000" stop-opacity="0"/><stop offset="0.45" stop-color="#000" stop-opacity="0.02"/><stop offset="0.5" stop-color="#000" stop-opacity="0.97"/><stop offset="0.55" stop-color="#000" stop-opacity="0.07"/><stop offset="0.6" stop-color="#000" stop-opacity="0"/><stop offset="0.65" stop-color="#000" stop-opacity="0"/><stop offset="0.7" stop-color="#000" stop-opacity="0"/><stop offset="0.75" stop-color="#000" stop-opacity="0"/><stop offset="0.8" stop-color="#000" stop-opacity="0"/><stop offset="0.85" stop-color="#000" stop-opacity="0"/><stop offset="0.9" stop-color="#000" stop-opacity="0"/><stop offset="0.95" stop-color="#000" stop-opacity="0"/><stop offset="1" stop-color="#000" stop-opacity="0"/></linearGradient>
<rect x="831.8" y="64.4" width="67.1" height="169.1" fill="url(#bg17)"/>
<rect x="831.8" y="64.4" width="67.1" height="169.1" fill="none" stroke="#0000ff" stroke-width="2.4"/>
<filter id="nz16" x="0" y="0" width="1" height="1" color-interpolation-filters="sRGB"><feTurbulence type="fractalNoise" baseFrequency="0.6" numOctaves="2" seed="43"/><feColorMatrix type="matrix" values="0.55 0 0 0 0.44 0.55 0 0 0 0.44 0.55 0 0 0 0.44 0 0 0 0 1" result="g"/></filter>
<rect x="932.2" y="64.4" width="67.7" height="169.1" fill="#888" filter="url(#nz16)"/>
<linearGradient id="bg18" x1="0" y1="0" x2="0" y2="1"><stop offset="0" stop-color="#000" stop-opacity="0"/><stop offset="0.05" stop-color="#000" stop-opacity="0"/><stop offset="0.1" stop-color="#000" stop-opacity="0"/><stop offset="0.15" stop-color="#000" stop-opacity="0"/><stop offset="0.2" stop-color="#000" stop-opacity="0"/><stop offset="0.25" stop-color="#000" stop-opacity="0"/><stop offset="0.3" stop-color="#000" stop-opacity="0"/><stop offset="0.35" stop-color="#000" stop-opacity="0"/><stop offset="0.4" stop-color="#000" stop-opacity="0"/><stop offset="0.45" stop-color="#000" stop-opacity="0.02"/><stop offset="0.5" stop-color="#000" stop-opacity="0.88"/><stop offset="0.55" stop-color="#000" stop-opacity="0.08"/><stop offset="0.6" stop-color="#000" stop-opacity="0"/><stop offset="0.65" stop-color="#000" stop-opacity="0"/><stop offset="0.7" stop-color="#000" stop-opacity="0"/><stop offset="0.75" stop-color="#000" stop-opacity="0"/><stop offset="0.8" stop-color="#000" stop-opacity="0"/><stop offset="0.85" stop-color="#000" stop-opacity="0"/><stop offset="0.9" stop-color="#000" stop-opacity="0"/><stop offset="0.95" stop-color="#000" stop-opacity="0"/><stop offset="1" stop-color="#000" stop-opacity="0"/></linearGradient>
<rect x="932.2" y="64.4" width="67.7" height="169.1" fill="url(#bg18)"/>
<rect x="932.2" y="64.4" width="67.7" height="169.1" fill="none" stroke="#0000ff" stroke-width="2.4"/>
<text x="143.7" y="525.7" font-family="Liberation Sans" font-size="13.57" fill="#111" stroke="#111" stroke-width="0.22" textLength="93.21" lengthAdjust="spacingAndGlyphs" text-anchor="middle" xml:space="preserve">Fiber Positions</text>
<filter id="nz17" x="0" y="0" width="1" height="1" color-interpolation-filters="sRGB"><feTurbulence type="fractalNoise" baseFrequency="0.5" numOctaves="2" seed="51"/><feColorMatrix type="matrix" values="0.2 0 0 0 0.83 0.2 0 0 0 0.83 0.2 0 0 0 0.83 0 0 0 0 1" result="g"/></filter>
<rect x="70" y="532.7" width="148.6" height="147.7" fill="#888" filter="url(#nz17)"/>
<clipPath id="fibclip"><rect x="70" y="532.7" width="148.6" height="147.7"/></clipPath>
<g clip-path="url(#fibclip)">
<filter id="fbblur" x="-50%" y="-50%" width="200%" height="200%"><feGaussianBlur stdDeviation="3.2"/></filter>
<circle cx="138" cy="600" r="31" fill="#000" opacity="0.18" filter="url(#fbblur)"/>
<rect x="117.5" y="579.5" width="40" height="40" rx="9" fill="#000" filter="url(#fbblur)"/>
<circle cx="158.9" cy="559.4" r="12" fill="none" stroke="#737373" stroke-width="1.1"/>
<circle cx="134.6" cy="565.2" r="12" fill="none" stroke="#737373" stroke-width="1.1"/>
<circle cx="111.4" cy="570" r="12" fill="none" stroke="#737373" stroke-width="1.1"/>
<circle cx="174.8" cy="577.5" r="12" fill="none" stroke="#737373" stroke-width="1.1"/>
<circle cx="151" cy="582.3" r="12" fill="none" stroke="#737373" stroke-width="1.1"/>
<circle cx="190.5" cy="595.3" r="12" fill="none" stroke="#737373" stroke-width="1.1"/>
<circle cx="104.6" cy="593.9" r="12" fill="none" stroke="#737373" stroke-width="1.1"/>
<circle cx="97" cy="615.7" r="12" fill="none" stroke="#737373" stroke-width="1.1"/>
<circle cx="184.4" cy="619.1" r="12" fill="none" stroke="#737373" stroke-width="1.1"/>
<circle cx="112.7" cy="635.5" r="12" fill="none" stroke="#737373" stroke-width="1.1"/>
<circle cx="176.9" cy="641.6" r="12" fill="none" stroke="#737373" stroke-width="1.1"/>
<circle cx="152.3" cy="647.8" r="12" fill="none" stroke="#737373" stroke-width="1.1"/>
<circle cx="128.4" cy="651.9" r="12" fill="none" stroke="#737373" stroke-width="1.1"/>
<circle cx="125.5" cy="584" r="12" fill="none" stroke="#737373" stroke-width="1.1"/>
<circle cx="122" cy="606" r="12" fill="none" stroke="#737373" stroke-width="1.1"/>
<circle cx="110.6" cy="570.4" r="12.3" fill="none" stroke="#737373" stroke-width="1.0" stroke-dasharray="1.2,1.3"/>
<circle cx="103.8" cy="594.3" r="12.3" fill="none" stroke="#737373" stroke-width="1.0" stroke-dasharray="1.2,1.3"/>
<circle cx="96.2" cy="616.1" r="12.3" fill="none" stroke="#737373" stroke-width="1.0" stroke-dasharray="1.2,1.3"/>
<circle cx="168" cy="600" r="12" fill="none" stroke="#ffa500" stroke-width="1.6"/>
<circle cx="159.8" cy="623.2" r="12" fill="none" stroke="#00ff00" stroke-width="1.6"/>
<circle cx="137" cy="628.7" r="12" fill="none" stroke="#ff0000" stroke-width="1.6"/>
<circle cx="143.8" cy="606.4" r="12" fill="none" stroke="#0000ff" stroke-width="1.6"/>
</g>
<rect x="94.65" y="557.45" width="98.1" height="98.1" fill="none" stroke="#ff0000" stroke-width="1.2"/>
<path d="M141.1,606.5 H146.3 M143.7,603.9 V609.1" stroke="#ff0000" stroke-width="1.3"/>
<text x="143.7" y="546.8" font-family="Liberation Sans" font-size="11.45" fill="#ff0000" stroke="#ff0000" stroke-width="0.22" textLength="8.08" lengthAdjust="spacingAndGlyphs" text-anchor="middle" xml:space="preserve">N</text>
<text x="79.5" y="610.5" font-family="Liberation Sans" font-size="11.45" fill="#ff0000" stroke="#ff0000" stroke-width="0.22" textLength="6.82" lengthAdjust="spacingAndGlyphs" text-anchor="middle" xml:space="preserve">E</text>
<line x1="78.3" y1="680.4" x2="78.3" y2="683.9" stroke="#262626" stroke-width="1"/>
<text x="78.3" y="696.4" font-family="Liberation Sans" font-size="11.45" fill="#262626" stroke="#262626" stroke-width="0.22" textLength="15.92" lengthAdjust="spacingAndGlyphs" text-anchor="middle" xml:space="preserve">−4</text>
<line x1="111" y1="680.4" x2="111" y2="683.9" stroke="#262626" stroke-width="1"/>
<text x="111" y="696.4" font-family="Liberation Sans" font-size="11.45" fill="#262626" stroke="#262626" stroke-width="0.22" textLength="15.92" lengthAdjust="spacingAndGlyphs" text-anchor="middle" xml:space="preserve">−2</text>
<line x1="143.7" y1="680.4" x2="143.7" y2="683.9" stroke="#262626" stroke-width="1"/>
<text x="143.7" y="696.4" font-family="Liberation Sans" font-size="11.45" fill="#262626" stroke="#262626" stroke-width="0.22" textLength="6.87" lengthAdjust="spacingAndGlyphs" text-anchor="middle" xml:space="preserve">0</text>
<line x1="176.4" y1="680.4" x2="176.4" y2="683.9" stroke="#262626" stroke-width="1"/>
<text x="176.4" y="696.4" font-family="Liberation Sans" font-size="11.45" fill="#262626" stroke="#262626" stroke-width="0.22" textLength="6.87" lengthAdjust="spacingAndGlyphs" text-anchor="middle" xml:space="preserve">2</text>
<line x1="209.1" y1="680.4" x2="209.1" y2="683.9" stroke="#262626" stroke-width="1"/>
<text x="209.1" y="696.4" font-family="Liberation Sans" font-size="11.45" fill="#262626" stroke="#262626" stroke-width="0.22" textLength="6.87" lengthAdjust="spacingAndGlyphs" text-anchor="middle" xml:space="preserve">4</text>
<line x1="66.5" y1="672.1" x2="70" y2="672.1" stroke="#262626" stroke-width="1"/>
<text x="64" y="676" font-family="Liberation Sans" font-size="11.45" fill="#262626" stroke="#262626" stroke-width="0.22" textLength="15.92" lengthAdjust="spacingAndGlyphs" text-anchor="end" xml:space="preserve">−4</text>
<line x1="66.5" y1="639.3" x2="70" y2="639.3" stroke="#262626" stroke-width="1"/>
<text x="64" y="643.2" font-family="Liberation Sans" font-size="11.45" fill="#262626" stroke="#262626" stroke-width="0.22" textLength="15.92" lengthAdjust="spacingAndGlyphs" text-anchor="end" xml:space="preserve">−2</text>
<line x1="66.5" y1="606.5" x2="70" y2="606.5" stroke="#262626" stroke-width="1"/>
<text x="64" y="610.4" font-family="Liberation Sans" font-size="11.45" fill="#262626" stroke="#262626" stroke-width="0.22" textLength="6.87" lengthAdjust="spacingAndGlyphs" text-anchor="end" xml:space="preserve">0</text>
<line x1="66.5" y1="573.7" x2="70" y2="573.7" stroke="#262626" stroke-width="1"/>
<text x="64" y="577.6" font-family="Liberation Sans" font-size="11.45" fill="#262626" stroke="#262626" stroke-width="0.22" textLength="6.87" lengthAdjust="spacingAndGlyphs" text-anchor="end" xml:space="preserve">2</text>
<line x1="66.5" y1="540.9" x2="70" y2="540.9" stroke="#262626" stroke-width="1"/>
<text x="64" y="544.8" font-family="Liberation Sans" font-size="11.45" fill="#262626" stroke="#262626" stroke-width="0.22" textLength="6.87" lengthAdjust="spacingAndGlyphs" text-anchor="end" xml:space="preserve">4</text>
<rect x="70" y="532.7" width="148.6" height="147.7" fill="none" stroke="#262626" stroke-width="1.2"/>
<text x="143.7" y="706.6" font-family="Liberation Sans" font-size="11.24" fill="#262626" stroke="#262626" stroke-width="0.22" textLength="40.08" lengthAdjust="spacingAndGlyphs" text-anchor="middle" xml:space="preserve">arcsecs</text>
<text x="514.5" y="525.8" font-family="Liberation Sans" font-size="13.78" fill="#111" stroke="#111" stroke-width="0.22" textLength="75.67" lengthAdjust="spacingAndGlyphs" text-anchor="middle" xml:space="preserve">HSC(26.2) r</text>
<filter id="nz18" x="0" y="0" width="1" height="1" color-interpolation-filters="sRGB"><feTurbulence type="fractalNoise" baseFrequency="0.5" numOctaves="2" seed="61"/><feColorMatrix type="matrix" values="0.2 0 0 0 0.83 0.2 0 0 0 0.83 0.2 0 0 0 0.83 0 0 0 0 1" result="g"/></filter>
<rect x="440.8" y="532.9" width="147.6" height="147.5" fill="#888" filter="url(#nz18)"/>
<radialGradient id="hb1" cx="507.4" cy="598.3" r="25.5" gradientUnits="userSpaceOnUse"><stop offset="0" stop-color="#000"/><stop offset="0.62" stop-color="#000"/><stop offset="0.79" stop-color="#000" stop-opacity="0.55"/><stop offset="0.91" stop-color="#000" stop-opacity="0.15"/><stop offset="1" stop-color="#000" stop-opacity="0"/></radialGradient>
<circle cx="507.4" cy="598.3" r="25.5" fill="url(#hb1)"/>
<ellipse cx="508.1" cy="599.0" rx="31.3" ry="29.5" fill="none" stroke="#f0c000" stroke-width="1.4"/>
<rect x="500.6" y="592.6" width="12.6" height="12.6" fill="none" stroke="#0000ff" stroke-width="1.4"/>
<path d="M507.14,606.5 H477.71 M514.5,599.14 V569.71 M521.86,606.5 H551.29 M514.5,613.86 V643.29 " stroke="#ff0000" stroke-width="1.2"/>
<rect x="465.45" y="557.45" width="98.1" height="98.1" fill="none" stroke="#ff0000" stroke-width="1.2"/>
<text x="514.5" y="546.8" font-family="Liberation Sans" font-size="11.45" fill="#ff0000" stroke="#ff0000" stroke-width="0.22" textLength="8.08" lengthAdjust="spacingAndGlyphs" text-anchor="middle" xml:space="preserve">N</text>
<text x="450.3" y="610.5" font-family="Liberation Sans" font-size="11.45" fill="#ff0000" stroke="#ff0000" stroke-width="0.22" textLength="6.82" lengthAdjust="spacingAndGlyphs" text-anchor="middle" xml:space="preserve">E</text>
<line x1="449.1" y1="680.4" x2="449.1" y2="683.9" stroke="#262626" stroke-width="1"/>
<text x="449.1" y="696.4" font-family="Liberation Sans" font-size="11.45" fill="#262626" stroke="#262626" stroke-width="0.22" textLength="15.92" lengthAdjust="spacingAndGlyphs" text-anchor="middle" xml:space="preserve">−4</text>
<line x1="481.8" y1="680.4" x2="481.8" y2="683.9" stroke="#262626" stroke-width="1"/>
<text x="481.8" y="696.4" font-family="Liberation Sans" font-size="11.45" fill="#262626" stroke="#262626" stroke-width="0.22" textLength="15.92" lengthAdjust="spacingAndGlyphs" text-anchor="middle" xml:space="preserve">−2</text>
<line x1="514.5" y1="680.4" x2="514.5" y2="683.9" stroke="#262626" stroke-width="1"/>
<text x="514.5" y="696.4" font-family="Liberation Sans" font-size="11.45" fill="#262626" stroke="#262626" stroke-width="0.22" textLength="6.87" lengthAdjust="spacingAndGlyphs" text-anchor="middle" xml:space="preserve">0</text>
<line x1="547.2" y1="680.4" x2="547.2" y2="683.9" stroke="#262626" stroke-width="1"/>
<text x="547.2" y="696.4" font-family="Liberation Sans" font-size="11.45" fill="#262626" stroke="#262626" stroke-width="0.22" textLength="6.87" lengthAdjust="spacingAndGlyphs" text-anchor="middle" xml:space="preserve">2</text>
<line x1="579.9" y1="680.4" x2="579.9" y2="683.9" stroke="#262626" stroke-width="1"/>
<text x="579.9" y="696.4" font-family="Liberation Sans" font-size="11.45" fill="#262626" stroke="#262626" stroke-width="0.22" textLength="6.87" lengthAdjust="spacingAndGlyphs" text-anchor="middle" xml:space="preserve">4</text>
<line x1="437.3" y1="672.1" x2="440.8" y2="672.1" stroke="#262626" stroke-width="1"/>
<text x="434.8" y="676" font-family="Liberation Sans" font-size="11.45" fill="#262626" stroke="#262626" stroke-width="0.22" textLength="15.92" lengthAdjust="spacingAndGlyphs" text-anchor="end" xml:space="preserve">−4</text>
<line x1="437.3" y1="639.3" x2="440.8" y2="639.3" stroke="#262626" stroke-width="1"/>
<text x="434.8" y="643.2" font-family="Liberation Sans" font-size="11.45" fill="#262626" stroke="#262626" stroke-width="0.22" textLength="15.92" lengthAdjust="spacingAndGlyphs" text-anchor="end" xml:space="preserve">−2</text>
<line x1="437.3" y1="606.5" x2="440.8" y2="606.5" stroke="#262626" stroke-width="1"/>
<text x="434.8" y="610.4" font-family="Liberation Sans" font-size="11.45" fill="#262626" stroke="#262626" stroke-width="0.22" textLength="6.87" lengthAdjust="spacingAndGlyphs" text-anchor="end" xml:space="preserve">0</text>
<line x1="437.3" y1="573.7" x2="440.8" y2="573.7" stroke="#262626" stroke-width="1"/>
<text x="434.8" y="577.6" font-family="Liberation Sans" font-size="11.45" fill="#262626" stroke="#262626" stroke-width="0.22" textLength="6.87" lengthAdjust="spacingAndGlyphs" text-anchor="end" xml:space="preserve">2</text>
<line x1="437.3" y1="540.9" x2="440.8" y2="540.9" stroke="#262626" stroke-width="1"/>
<text x="434.8" y="544.8" font-family="Liberation Sans" font-size="11.45" fill="#262626" stroke="#262626" stroke-width="0.22" textLength="6.87" lengthAdjust="spacingAndGlyphs" text-anchor="end" xml:space="preserve">4</text>
<rect x="440.8" y="532.9" width="147.6" height="147.5" fill="none" stroke="#262626" stroke-width="1.2"/>
<text x="514.5" y="705.9" font-family="Liberation Sans" font-size="11.24" fill="#262626" stroke="#262626" stroke-width="0.22" textLength="117.99" lengthAdjust="spacingAndGlyphs" text-anchor="middle" xml:space="preserve">m:18.7  re:1.8"  s:0.6"</text>
<text x="514.5" y="718.2" font-family="Liberation Sans" font-size="11.24" fill="#262626" stroke="#262626" stroke-width="0.22" textLength="105.49" lengthAdjust="spacingAndGlyphs" text-anchor="middle" xml:space="preserve">EWr: 0, PLAE: 6.123</text>
<text x="329.2" y="525.7" font-family="Liberation Sans" font-size="13.57" fill="#111" stroke="#111" stroke-width="0.22" textLength="81.51" lengthAdjust="spacingAndGlyphs" text-anchor="middle" xml:space="preserve">Lineflux Map</text>
<clipPath id="lfclip"><rect x="255.3" y="532.7" width="148.3" height="147.7"/></clipPath>
<g clip-path="url(#lfclip)" shape-rendering="crispEdges">
<rect x="255.3" y="532.7" width="37.58" height="4.6" fill="#38598c"/>
<rect x="292.38" y="532.7" width="4.62" height="4.6" fill="#3b528b"/>
<rect x="296.49" y="532.7" width="4.62" height="4.6" fill="#3e4a89"/>
<rect x="300.61" y="532.7" width="4.62" height="4.6" fill="#463480"/>
<rect x="304.73" y="532.7" width="37.58" height="4.6" fill="#471365"/>
<rect x="341.81" y="532.7" width="4.62" height="4.6" fill="#482475"/>
<rect x="345.93" y="532.7" width="4.62" height="4.6" fill="#443b84"/>
<rect x="350.05" y="532.7" width="4.62" height="4.6" fill="#3e4a89"/>
<rect x="354.17" y="532.7" width="4.62" height="4.6" fill="#355f8d"/>
<rect x="358.29" y="532.7" width="4.62" height="4.6" fill="#2f6c8e"/>
<rect x="362.41" y="532.7" width="4.62" height="4.6" fill="#2c728e"/>
<rect x="366.52" y="532.7" width="8.74" height="4.6" fill="#2a788e"/>
<rect x="374.76" y="532.7" width="4.62" height="4.6" fill="#2c728e"/>
<rect x="378.88" y="532.7" width="4.62" height="4.6" fill="#31668e"/>
<rect x="383" y="532.7" width="4.62" height="4.6" fill="#355f8d"/>
<rect x="387.12" y="532.7" width="4.62" height="4.6" fill="#38598c"/>
<rect x="391.24" y="532.7" width="4.62" height="4.6" fill="#414487"/>
<rect x="395.36" y="532.7" width="4.62" height="4.6" fill="#472d7b"/>
<rect x="399.48" y="532.7" width="4.62" height="4.6" fill="#481c6e"/>
<rect x="255.3" y="536.8" width="37.58" height="4.6" fill="#38598c"/>
<rect x="292.38" y="536.8" width="4.62" height="4.6" fill="#3b528b"/>
<rect x="296.49" y="536.8" width="4.62" height="4.6" fill="#414487"/>
<rect x="300.61" y="536.8" width="4.62" height="4.6" fill="#482475"/>
<rect x="304.73" y="536.8" width="4.62" height="4.6" fill="#460a5d"/>
<rect x="308.85" y="536.8" width="37.58" height="4.6" fill="#471365"/>
<rect x="345.93" y="536.8" width="4.62" height="4.6" fill="#482475"/>
<rect x="350.05" y="536.8" width="4.62" height="4.6" fill="#463480"/>
<rect x="354.17" y="536.8" width="4.62" height="4.6" fill="#414487"/>
<rect x="358.29" y="536.8" width="4.62" height="4.6" fill="#3b528b"/>
<rect x="362.41" y="536.8" width="4.62" height="4.6" fill="#31668e"/>
<rect x="366.52" y="536.8" width="4.62" height="4.6" fill="#2c728e"/>
<rect x="370.64" y="536.8" width="8.74" height="4.6" fill="#2a788e"/>
<rect x="378.88" y="536.8" width="4.62" height="4.6" fill="#21918c"/>
<rect x="383" y="536.8" width="4.62" height="4.6" fill="#1e9c89"/>
<rect x="387.12" y="536.8" width="4.62" height="4.6" fill="#238a8d"/>
<rect x="391.24" y="536.8" width="4.62" height="4.6" fill="#2c728e"/>
<rect x="395.36" y="536.8" width="4.62" height="4.6" fill="#3e4a89"/>
<rect x="399.48" y="536.8" width="4.62" height="4.6" fill="#472d7b"/>
<rect x="255.3" y="540.91" width="33.46" height="4.6" fill="#38598c"/>
<rect x="288.26" y="540.91" width="4.62" height="4.6" fill="#3b528b"/>
<rect x="292.38" y="540.91" width="4.62" height="4.6" fill="#3e4a89"/>
<rect x="296.49" y="540.91" width="4.62" height="4.6" fill="#463480"/>
<rect x="300.61" y="540.91" width="4.62" height="4.6" fill="#471365"/>
<rect x="304.73" y="540.91" width="8.74" height="4.6" fill="#460a5d"/>
<rect x="312.97" y="540.91" width="37.58" height="4.6" fill="#471365"/>
<rect x="350.05" y="540.91" width="4.62" height="4.6" fill="#481c6e"/>
<rect x="354.17" y="540.91" width="4.62" height="4.6" fill="#472d7b"/>
<rect x="358.29" y="540.91" width="4.62" height="4.6" fill="#443b84"/>
<rect x="362.41" y="540.91" width="4.62" height="4.6" fill="#3e4a89"/>
<rect x="366.52" y="540.91" width="4.62" height="4.6" fill="#38598c"/>
<rect x="370.64" y="540.91" width="4.62" height="4.6" fill="#2f6c8e"/>
<rect x="374.76" y="540.91" width="4.62" height="4.6" fill="#21918c"/>
<rect x="378.88" y="540.91" width="4.62" height="4.6" fill="#2fb47c"/>
<rect x="383" y="540.91" width="4.62" height="4.6" fill="#44bf70"/>
<rect x="387.12" y="540.91" width="4.62" height="4.6" fill="#28ae80"/>
<rect x="391.24" y="540.91" width="4.62" height="4.6" fill="#238a8d"/>
<rect x="395.36" y="540.91" width="4.62" height="4.6" fill="#355f8d"/>
<rect x="399.48" y="540.91" width="4.62" height="4.6" fill="#414487"/>
<rect x="255.3" y="545.01" width="33.46" height="4.6" fill="#38598c"/>
<rect x="288.26" y="545.01" width="4.62" height="4.6" fill="#3b528b"/>
<rect x="292.38" y="545.01" width="4.62" height="4.6" fill="#443b84"/>
<rect x="296.49" y="545.01" width="4.62" height="4.6" fill="#481c6e"/>
<rect x="300.61" y="545.01" width="25.22" height="4.6" fill="#460a5d"/>
<rect x="325.33" y="545.01" width="8.74" height="4.6" fill="#471365"/>
<rect x="333.57" y="545.01" width="21.1" height="4.6" fill="#460a5d"/>
<rect x="354.17" y="545.01" width="4.62" height="4.6" fill="#471365"/>
<rect x="358.29" y="545.01" width="4.62" height="4.6" fill="#482475"/>
<rect x="362.41" y="545.01" width="4.62" height="4.6" fill="#463480"/>
<rect x="366.52" y="545.01" width="4.62" height="4.6" fill="#414487"/>
<rect x="370.64" y="545.01" width="4.62" height="4.6" fill="#31668e"/>
<rect x="374.76" y="545.01" width="4.62" height="4.6" fill="#238a8d"/>
<rect x="378.88" y="545.01" width="4.62" height="4.6" fill="#22a884"/>
<rect x="383" y="545.01" width="4.62" height="4.6" fill="#2fb47c"/>
<rect x="387.12" y="545.01" width="4.62" height="4.6" fill="#1fa287"/>
<rect x="391.24" y="545.01" width="4.62" height="4.6" fill="#25848e"/>
<rect x="395.36" y="545.01" width="4.62" height="4.6" fill="#2f6c8e"/>
<rect x="399.48" y="545.01" width="4.62" height="4.6" fill="#355f8d"/>
<rect x="255.3" y="549.11" width="29.34" height="4.6" fill="#38598c"/>
<rect x="284.14" y="549.11" width="4.62" height="4.6" fill="#3b528b"/>
<rect x="288.26" y="549.11" width="4.62" height="4.6" fill="#3e4a89"/>
<rect x="292.38" y="549.11" width="4.62" height="4.6" fill="#472d7b"/>
<rect x="296.49" y="549.11" width="4.62" height="4.6" fill="#471365"/>
<rect x="300.61" y="549.11" width="4.62" height="4.6" fill="#440154"/>
<rect x="304.73" y="549.11" width="54.05" height="4.6" fill="#460a5d"/>
<rect x="358.29" y="549.11" width="4.62" height="4.6" fill="#471365"/>
<rect x="362.41" y="549.11" width="4.62" height="4.6" fill="#481c6e"/>
<rect x="366.52" y="549.11" width="4.62" height="4.6" fill="#472d7b"/>
<rect x="370.64" y="549.11" width="4.62" height="4.6" fill="#3e4a89"/>
<rect x="374.76" y="549.11" width="4.62" height="4.6" fill="#31668e"/>
<rect x="378.88" y="549.11" width="4.62" height="4.6" fill="#277e8e"/>
<rect x="383" y="549.11" width="4.62" height="4.6" fill="#25848e"/>
<rect x="387.12" y="549.11" width="12.86" height="4.6" fill="#2a788e"/>
<rect x="399.48" y="549.11" width="4.62" height="4.6" fill="#2c728e"/>
<rect x="255.3" y="553.21" width="29.34" height="4.6" fill="#38598c"/>
<rect x="284.14" y="553.21" width="4.62" height="4.6" fill="#3b528b"/>
<rect x="288.26" y="553.21" width="4.62" height="4.6" fill="#443b84"/>
<rect x="292.38" y="553.21" width="4.62" height="4.6" fill="#481c6e"/>
<rect x="296.49" y="553.21" width="16.98" height="4.6" fill="#460a5d"/>
<rect x="312.97" y="553.21" width="45.81" height="4.6" fill="#440154"/>
<rect x="358.29" y="553.21" width="8.74" height="4.6" fill="#460a5d"/>
<rect x="366.52" y="553.21" width="4.62" height="4.6" fill="#471365"/>
<rect x="370.64" y="553.21" width="4.62" height="4.6" fill="#482475"/>
<rect x="374.76" y="553.21" width="4.62" height="4.6" fill="#443b84"/>
<rect x="378.88" y="553.21" width="4.62" height="4.6" fill="#414487"/>
<rect x="383" y="553.21" width="4.62" height="4.6" fill="#3b528b"/>
<rect x="387.12" y="553.21" width="4.62" height="4.6" fill="#355f8d"/>
<rect x="391.24" y="553.21" width="4.62" height="4.6" fill="#2f6c8e"/>
<rect x="395.36" y="553.21" width="4.62" height="4.6" fill="#2c728e"/>
<rect x="399.48" y="553.21" width="4.62" height="4.6" fill="#2a788e"/>
<rect x="255.3" y="557.32" width="25.22" height="4.6" fill="#38598c"/>
<rect x="280.02" y="557.32" width="4.62" height="4.6" fill="#3b528b"/>
<rect x="284.14" y="557.32" width="4.62" height="4.6" fill="#3e4a89"/>
<rect x="288.26" y="557.32" width="4.62" height="4.6" fill="#472d7b"/>
<rect x="292.38" y="557.32" width="37.58" height="4.6" fill="#460a5d"/>
<rect x="329.45" y="557.32" width="33.46" height="4.6" fill="#440154"/>
<rect x="362.41" y="557.32" width="8.74" height="4.6" fill="#460a5d"/>
<rect x="370.64" y="557.32" width="4.62" height="4.6" fill="#471365"/>
<rect x="374.76" y="557.32" width="4.62" height="4.6" fill="#481c6e"/>
<rect x="378.88" y="557.32" width="4.62" height="4.6" fill="#482475"/>
<rect x="383" y="557.32" width="4.62" height="4.6" fill="#463480"/>
<rect x="387.12" y="557.32" width="4.62" height="4.6" fill="#414487"/>
<rect x="391.24" y="557.32" width="4.62" height="4.6" fill="#38598c"/>
<rect x="395.36" y="557.32" width="4.62" height="4.6" fill="#31668e"/>
<rect x="399.48" y="557.32" width="4.62" height="4.6" fill="#2c728e"/>
<rect x="255.3" y="561.42" width="25.22" height="4.6" fill="#38598c"/>
<rect x="280.02" y="561.42" width="4.62" height="4.6" fill="#3b528b"/>
<rect x="284.14" y="561.42" width="4.62" height="4.6" fill="#443b84"/>
<rect x="288.26" y="561.42" width="8.74" height="4.6" fill="#471365"/>
<rect x="296.49" y="561.42" width="12.86" height="4.6" fill="#481c6e"/>
<rect x="308.85" y="561.42" width="16.98" height="4.6" fill="#471365"/>
<rect x="325.33" y="561.42" width="21.1" height="4.6" fill="#460a5d"/>
<rect x="345.93" y="561.42" width="25.22" height="4.6" fill="#440154"/>
<rect x="370.64" y="561.42" width="8.74" height="4.6" fill="#460a5d"/>
<rect x="378.88" y="561.42" width="4.62" height="4.6" fill="#471365"/>
<rect x="383" y="561.42" width="4.62" height="4.6" fill="#481c6e"/>
<rect x="387.12" y="561.42" width="4.62" height="4.6" fill="#472d7b"/>
<rect x="391.24" y="561.42" width="4.62" height="4.6" fill="#443b84"/>
<rect x="395.36" y="561.42" width="4.62" height="4.6" fill="#3e4a89"/>
<rect x="399.48" y="561.42" width="4.62" height="4.6" fill="#355f8d"/>
<rect x="255.3" y="565.52" width="21.1" height="4.6" fill="#38598c"/>
<rect x="275.9" y="565.52" width="4.62" height="4.6" fill="#3b528b"/>
<rect x="280.02" y="565.52" width="4.62" height="4.6" fill="#414487"/>
<rect x="284.14" y="565.52" width="4.62" height="4.6" fill="#482475"/>
<rect x="288.26" y="565.52" width="4.62" height="4.6" fill="#481c6e"/>
<rect x="292.38" y="565.52" width="4.62" height="4.6" fill="#482475"/>
<rect x="296.49" y="565.52" width="16.98" height="4.6" fill="#472d7b"/>
<rect x="312.97" y="565.52" width="8.74" height="4.6" fill="#482475"/>
<rect x="321.21" y="565.52" width="8.74" height="4.6" fill="#481c6e"/>
<rect x="329.45" y="565.52" width="12.86" height="4.6" fill="#471365"/>
<rect x="341.81" y="565.52" width="21.1" height="4.6" fill="#460a5d"/>
<rect x="362.41" y="565.52" width="16.98" height="4.6" fill="#440154"/>
<rect x="378.88" y="565.52" width="4.62" height="4.6" fill="#460a5d"/>
<rect x="383" y="565.52" width="4.62" height="4.6" fill="#471365"/>
<rect x="387.12" y="565.52" width="4.62" height="4.6" fill="#481c6e"/>
<rect x="391.24" y="565.52" width="4.62" height="4.6" fill="#482475"/>
<rect x="395.36" y="565.52" width="4.62" height="4.6" fill="#463480"/>
<rect x="399.48" y="565.52" width="4.62" height="4.6" fill="#414487"/>
<rect x="255.3" y="569.62" width="21.1" height="4.6" fill="#38598c"/>
<rect x="275.9" y="569.62" width="4.62" height="4.6" fill="#3e4a89"/>
<rect x="280.02" y="569.62" width="4.62" height="4.6" fill="#463480"/>
<rect x="284.14" y="569.62" width="4.62" height="4.6" fill="#481c6e"/>
<rect x="288.26" y="569.62" width="4.62" height="4.6" fill="#472d7b"/>
<rect x="292.38" y="569.62" width="4.62" height="4.6" fill="#463480"/>
<rect x="296.49" y="569.62" width="4.62" height="4.6" fill="#414487"/>
<rect x="300.61" y="569.62" width="4.62" height="4.6" fill="#3e4a89"/>
<rect x="304.73" y="569.62" width="4.62" height="4.6" fill="#3b528b"/>
<rect x="308.85" y="569.62" width="8.74" height="4.6" fill="#3e4a89"/>
<rect x="317.09" y="569.62" width="4.62" height="4.6" fill="#414487"/>
<rect x="321.21" y="569.62" width="4.62" height="4.6" fill="#443b84"/>
<rect x="325.33" y="569.62" width="4.62" height="4.6" fill="#463480"/>
<rect x="329.45" y="569.62" width="4.62" height="4.6" fill="#472d7b"/>
<rect x="333.57" y="569.62" width="4.62" height="4.6" fill="#482475"/>
<rect x="337.69" y="569.62" width="8.74" height="4.6" fill="#481c6e"/>
<rect x="345.93" y="569.62" width="12.86" height="4.6" fill="#471365"/>
<rect x="358.29" y="569.62" width="16.98" height="4.6" fill="#460a5d"/>
<rect x="374.76" y="569.62" width="4.62" height="4.6" fill="#440154"/>
<rect x="378.88" y="569.62" width="12.86" height="4.6" fill="#460a5d"/>
<rect x="391.24" y="569.62" width="4.62" height="4.6" fill="#471365"/>
<rect x="395.36" y="569.62" width="4.62" height="4.6" fill="#481c6e"/>
<rect x="399.48" y="569.62" width="4.62" height="4.6" fill="#482475"/>
<rect x="255.3" y="573.73" width="16.98" height="4.6" fill="#38598c"/>
<rect x="271.78" y="573.73" width="4.62" height="4.6" fill="#3b528b"/>
<rect x="275.9" y="573.73" width="4.62" height="4.6" fill="#414487"/>
<rect x="280.02" y="573.73" width="8.74" height="4.6" fill="#482475"/>
<rect x="288.26" y="573.73" width="4.62" height="4.6" fill="#463480"/>
<rect x="292.38" y="573.73" width="4.62" height="4.6" fill="#3e4a89"/>
<rect x="296.49" y="573.73" width="4.62" height="4.6" fill="#355f8d"/>
<rect x="300.61" y="573.73" width="4.62" height="4.6" fill="#2f6c8e"/>
<rect x="304.73" y="573.73" width="4.62" height="4.6" fill="#2a788e"/>
<rect x="308.85" y="573.73" width="4.62" height="4.6" fill="#277e8e"/>
<rect x="312.97" y="573.73" width="4.62" height="4.6" fill="#2a788e"/>
<rect x="317.09" y="573.73" width="4.62" height="4.6" fill="#2c728e"/>
<rect x="321.21" y="573.73" width="4.62" height="4.6" fill="#31668e"/>
<rect x="325.33" y="573.73" width="4.62" height="4.6" fill="#38598c"/>
<rect x="329.45" y="573.73" width="4.62" height="4.6" fill="#3b528b"/>
<rect x="333.57" y="573.73" width="4.62" height="4.6" fill="#414487"/>
<rect x="337.69" y="573.73" width="4.62" height="4.6" fill="#443b84"/>
<rect x="341.81" y="573.73" width="4.62" height="4.6" fill="#463480"/>
<rect x="345.93" y="573.73" width="4.62" height="4.6" fill="#472d7b"/>
<rect x="350.05" y="573.73" width="4.62" height="4.6" fill="#482475"/>
<rect x="354.17" y="573.73" width="8.74" height="4.6" fill="#481c6e"/>
<rect x="362.41" y="573.73" width="8.74" height="4.6" fill="#471365"/>
<rect x="370.64" y="573.73" width="21.1" height="4.6" fill="#460a5d"/>
<rect x="391.24" y="573.73" width="12.86" height="4.6" fill="#471365"/>
<rect x="255.3" y="577.83" width="12.86" height="4.6" fill="#38598c"/>
<rect x="267.66" y="577.83" width="4.62" height="4.6" fill="#3b528b"/>
<rect x="271.78" y="577.83" width="4.62" height="4.6" fill="#3e4a89"/>
<rect x="275.9" y="577.83" width="4.62" height="4.6" fill="#463480"/>
<rect x="280.02" y="577.83" width="4.62" height="4.6" fill="#481c6e"/>
<rect x="284.14" y="577.83" width="4.62" height="4.6" fill="#472d7b"/>
<rect x="288.26" y="577.83" width="4.62" height="4.6" fill="#414487"/>
<rect x="292.38" y="577.83" width="4.62" height="4.6" fill="#38598c"/>
<rect x="296.49" y="577.83" width="4.62" height="4.6" fill="#2a788e"/>
<rect x="300.61" y="577.83" width="4.62" height="4.6" fill="#21918c"/>
<rect x="304.73" y="577.83" width="4.62" height="4.6" fill="#22a884"/>
<rect x="308.85" y="577.83" width="4.62" height="4.6" fill="#2fb47c"/>
<rect x="312.97" y="577.83" width="4.62" height="4.6" fill="#38b977"/>
<rect x="317.09" y="577.83" width="4.62" height="4.6" fill="#28ae80"/>
<rect x="321.21" y="577.83" width="4.62" height="4.6" fill="#1fa287"/>
<rect x="325.33" y="577.83" width="4.62" height="4.6" fill="#21918c"/>
<rect x="329.45" y="577.83" width="4.62" height="4.6" fill="#25848e"/>
<rect x="333.57" y="577.83" width="4.62" height="4.6" fill="#2c728e"/>
<rect x="337.69" y="577.83" width="4.62" height="4.6" fill="#31668e"/>
<rect x="341.81" y="577.83" width="4.62" height="4.6" fill="#38598c"/>
<rect x="345.93" y="577.83" width="4.62" height="4.6" fill="#3b528b"/>
<rect x="350.05" y="577.83" width="4.62" height="4.6" fill="#414487"/>
<rect x="354.17" y="577.83" width="4.62" height="4.6" fill="#443b84"/>
<rect x="358.29" y="577.83" width="4.62" height="4.6" fill="#472d7b"/>
<rect x="362.41" y="577.83" width="4.62" height="4.6" fill="#482475"/>
<rect x="366.52" y="577.83" width="8.74" height="4.6" fill="#481c6e"/>
<rect x="374.76" y="577.83" width="4.62" height="4.6" fill="#471365"/>
<rect x="378.88" y="577.83" width="8.74" height="4.6" fill="#460a5d"/>
<rect x="387.12" y="577.83" width="12.86" height="4.6" fill="#471365"/>
<rect x="399.48" y="577.83" width="4.62" height="4.6" fill="#481c6e"/>
<rect x="255.3" y="581.93" width="12.86" height="4.6" fill="#38598c"/>
<rect x="267.66" y="581.93" width="4.62" height="4.6" fill="#3b528b"/>
<rect x="271.78" y="581.93" width="4.62" height="4.6" fill="#414487"/>
<rect x="275.9" y="581.93" width="4.62" height="4.6" fill="#481c6e"/>
<rect x="280.02" y="581.93" width="4.62" height="4.6" fill="#482475"/>
<rect x="284.14" y="581.93" width="4.62" height="4.6" fill="#463480"/>
<rect x="288.26" y="581.93" width="4.62" height="4.6" fill="#3e4a89"/>
<rect x="292.38" y="581.93" width="4.62" height="4.6" fill="#2f6c8e"/>
<rect x="296.49" y="581.93" width="4.62" height="4.6" fill="#238a8d"/>
<rect x="300.61" y="581.93" width="4.62" height="4.6" fill="#2fb47c"/>
<rect x="304.73" y="581.93" width="4.62" height="4.6" fill="#7ad151"/>
<rect x="308.85" y="581.93" width="4.62" height="4.6" fill="#cde11d"/>
<rect x="312.97" y="581.93" width="8.74" height="4.6" fill="#dfe318"/>
<rect x="321.21" y="581.93" width="4.62" height="4.6" fill="#bddf26"/>
<rect x="325.33" y="581.93" width="4.62" height="4.6" fill="#8bd646"/>
<rect x="329.45" y="581.93" width="4.62" height="4.6" fill="#5ec962"/>
<rect x="333.57" y="581.93" width="4.62" height="4.6" fill="#2fb47c"/>
<rect x="337.69" y="581.93" width="4.62" height="4.6" fill="#1fa287"/>
<rect x="341.81" y="581.93" width="4.62" height="4.6" fill="#21918c"/>
<rect x="345.93" y="581.93" width="4.62" height="4.6" fill="#25848e"/>
<rect x="350.05" y="581.93" width="4.62" height="4.6" fill="#2c728e"/>
<rect x="354.17" y="581.93" width="4.62" height="4.6" fill="#355f8d"/>
<rect x="358.29" y="581.93" width="4.62" height="4.6" fill="#3b528b"/>
<rect x="362.41" y="581.93" width="4.62" height="4.6" fill="#414487"/>
<rect x="366.52" y="581.93" width="4.62" height="4.6" fill="#463480"/>
<rect x="370.64" y="581.93" width="4.62" height="4.6" fill="#472d7b"/>
<rect x="374.76" y="581.93" width="4.62" height="4.6" fill="#481c6e"/>
<rect x="378.88" y="581.93" width="12.86" height="4.6" fill="#471365"/>
<rect x="391.24" y="581.93" width="12.86" height="4.6" fill="#481c6e"/>
<rect x="255.3" y="586.04" width="8.74" height="4.6" fill="#38598c"/>
<rect x="263.54" y="586.04" width="4.62" height="4.6" fill="#3b528b"/>
<rect x="267.66" y="586.04" width="4.62" height="4.6" fill="#3e4a89"/>
<rect x="271.78" y="586.04" width="4.62" height="4.6" fill="#472d7b"/>
<rect x="275.9" y="586.04" width="4.62" height="4.6" fill="#481c6e"/>
<rect x="280.02" y="586.04" width="4.62" height="4.6" fill="#482475"/>
<rect x="284.14" y="586.04" width="4.62" height="4.6" fill="#443b84"/>
<rect x="288.26" y="586.04" width="4.62" height="4.6" fill="#3b528b"/>
<rect x="292.38" y="586.04" width="4.62" height="4.6" fill="#2a788e"/>
<rect x="296.49" y="586.04" width="4.62" height="4.6" fill="#1e9c89"/>
<rect x="300.61" y="586.04" width="4.62" height="4.6" fill="#5ec962"/>
<rect x="304.73" y="586.04" width="4.62" height="4.6" fill="#dfe318"/>
<rect x="308.85" y="586.04" width="25.22" height="4.6" fill="#fde725"/>
<rect x="333.57" y="586.04" width="4.62" height="4.6" fill="#efe51c"/>
<rect x="337.69" y="586.04" width="4.62" height="4.6" fill="#bddf26"/>
<rect x="341.81" y="586.04" width="4.62" height="4.6" fill="#8bd646"/>
<rect x="345.93" y="586.04" width="4.62" height="4.6" fill="#50c46a"/>
<rect x="350.05" y="586.04" width="4.62" height="4.6" fill="#28ae80"/>
<rect x="354.17" y="586.04" width="4.62" height="4.6" fill="#1f968b"/>
<rect x="358.29" y="586.04" width="4.62" height="4.6" fill="#277e8e"/>
<rect x="362.41" y="586.04" width="4.62" height="4.6" fill="#31668e"/>
<rect x="366.52" y="586.04" width="4.62" height="4.6" fill="#3b528b"/>
<rect x="370.64" y="586.04" width="4.62" height="4.6" fill="#443b84"/>
<rect x="374.76" y="586.04" width="4.62" height="4.6" fill="#472d7b"/>
<rect x="378.88" y="586.04" width="4.62" height="4.6" fill="#481c6e"/>
<rect x="383" y="586.04" width="4.62" height="4.6" fill="#471365"/>
<rect x="387.12" y="586.04" width="4.62" height="4.6" fill="#481c6e"/>
<rect x="391.24" y="586.04" width="12.86" height="4.6" fill="#482475"/>
<rect x="255.3" y="590.14" width="8.74" height="4.6" fill="#38598c"/>
<rect x="263.54" y="590.14" width="4.62" height="4.6" fill="#3b528b"/>
<rect x="267.66" y="590.14" width="4.62" height="4.6" fill="#443b84"/>
<rect x="271.78" y="590.14" width="8.74" height="4.6" fill="#481c6e"/>
<rect x="280.02" y="590.14" width="4.62" height="4.6" fill="#472d7b"/>
<rect x="284.14" y="590.14" width="4.62" height="4.6" fill="#414487"/>
<rect x="288.26" y="590.14" width="4.62" height="4.6" fill="#355f8d"/>
<rect x="292.38" y="590.14" width="4.62" height="4.6" fill="#277e8e"/>
<rect x="296.49" y="590.14" width="4.62" height="4.6" fill="#28ae80"/>
<rect x="300.61" y="590.14" width="4.62" height="4.6" fill="#8bd646"/>
<rect x="304.73" y="590.14" width="45.81" height="4.6" fill="#fde725"/>
<rect x="350.05" y="590.14" width="4.62" height="4.6" fill="#cde11d"/>
<rect x="354.17" y="590.14" width="4.62" height="4.6" fill="#7ad151"/>
<rect x="358.29" y="590.14" width="4.62" height="4.6" fill="#28ae80"/>
<rect x="362.41" y="590.14" width="4.62" height="4.6" fill="#238a8d"/>
<rect x="366.52" y="590.14" width="4.62" height="4.6" fill="#2f6c8e"/>
<rect x="370.64" y="590.14" width="4.62" height="4.6" fill="#3b528b"/>
<rect x="374.76" y="590.14" width="4.62" height="4.6" fill="#443b84"/>
<rect x="378.88" y="590.14" width="4.62" height="4.6" fill="#482475"/>
<rect x="383" y="590.14" width="4.62" height="4.6" fill="#481c6e"/>
<rect x="387.12" y="590.14" width="4.62" height="4.6" fill="#482475"/>
<rect x="391.24" y="590.14" width="12.86" height="4.6" fill="#472d7b"/>
<rect x="255.3" y="594.24" width="4.62" height="4.6" fill="#38598c"/>
<rect x="259.42" y="594.24" width="4.62" height="4.6" fill="#3b528b"/>
<rect x="263.54" y="594.24" width="4.62" height="4.6" fill="#3e4a89"/>
<rect x="267.66" y="594.24" width="4.62" height="4.6" fill="#472d7b"/>
<rect x="271.78" y="594.24" width="4.62" height="4.6" fill="#471365"/>
<rect x="275.9" y="594.24" width="4.62" height="4.6" fill="#481c6e"/>
<rect x="280.02" y="594.24" width="4.62" height="4.6" fill="#472d7b"/>
<rect x="284.14" y="594.24" width="4.62" height="4.6" fill="#414487"/>
<rect x="288.26" y="594.24" width="4.62" height="4.6" fill="#31668e"/>
<rect x="292.38" y="594.24" width="4.62" height="4.6" fill="#238a8d"/>
<rect x="296.49" y="594.24" width="4.62" height="4.6" fill="#38b977"/>
<rect x="300.61" y="594.24" width="4.62" height="4.6" fill="#bddf26"/>
<rect x="304.73" y="594.24" width="49.93" height="4.6" fill="#fde725"/>
<rect x="354.17" y="594.24" width="4.62" height="4.6" fill="#efe51c"/>
<rect x="358.29" y="594.24" width="4.62" height="4.6" fill="#7ad151"/>
<rect x="362.41" y="594.24" width="4.62" height="4.6" fill="#22a884"/>
<rect x="366.52" y="594.24" width="4.62" height="4.6" fill="#277e8e"/>
<rect x="370.64" y="594.24" width="4.62" height="4.6" fill="#355f8d"/>
<rect x="374.76" y="594.24" width="4.62" height="4.6" fill="#414487"/>
<rect x="378.88" y="594.24" width="4.62" height="4.6" fill="#472d7b"/>
<rect x="383" y="594.24" width="4.62" height="4.6" fill="#482475"/>
<rect x="387.12" y="594.24" width="8.74" height="4.6" fill="#472d7b"/>
<rect x="395.36" y="594.24" width="4.62" height="4.6" fill="#463480"/>
<rect x="399.48" y="594.24" width="4.62" height="4.6" fill="#443b84"/>
<rect x="255.3" y="598.34" width="8.74" height="4.6" fill="#3b528b"/>
<rect x="263.54" y="598.34" width="4.62" height="4.6" fill="#443b84"/>
<rect x="267.66" y="598.34" width="4.62" height="4.6" fill="#481c6e"/>
<rect x="271.78" y="598.34" width="4.62" height="4.6" fill="#471365"/>
<rect x="275.9" y="598.34" width="4.62" height="4.6" fill="#482475"/>
<rect x="280.02" y="598.34" width="4.62" height="4.6" fill="#463480"/>
<rect x="284.14" y="598.34" width="4.62" height="4.6" fill="#3e4a89"/>
<rect x="288.26" y="598.34" width="4.62" height="4.6" fill="#2f6c8e"/>
<rect x="292.38" y="598.34" width="4.62" height="4.6" fill="#1f968b"/>
<rect x="296.49" y="598.34" width="4.62" height="4.6" fill="#50c46a"/>
<rect x="300.61" y="598.34" width="4.62" height="4.6" fill="#dfe318"/>
<rect x="304.73" y="598.34" width="54.05" height="4.6" fill="#fde725"/>
<rect x="358.29" y="598.34" width="4.62" height="4.6" fill="#addc30"/>
<rect x="362.41" y="598.34" width="4.62" height="4.6" fill="#2fb47c"/>
<rect x="366.52" y="598.34" width="4.62" height="4.6" fill="#238a8d"/>
<rect x="370.64" y="598.34" width="4.62" height="4.6" fill="#31668e"/>
<rect x="374.76" y="598.34" width="4.62" height="4.6" fill="#414487"/>
<rect x="378.88" y="598.34" width="4.62" height="4.6" fill="#463480"/>
<rect x="383" y="598.34" width="8.74" height="4.6" fill="#472d7b"/>
<rect x="391.24" y="598.34" width="4.62" height="4.6" fill="#463480"/>
<rect x="395.36" y="598.34" width="4.62" height="4.6" fill="#443b84"/>
<rect x="399.48" y="598.34" width="4.62" height="4.6" fill="#414487"/>
<rect x="255.3" y="602.45" width="4.62" height="4.6" fill="#3b528b"/>
<rect x="259.42" y="602.45" width="4.62" height="4.6" fill="#414487"/>
<rect x="263.54" y="602.45" width="4.62" height="4.6" fill="#482475"/>
<rect x="267.66" y="602.45" width="4.62" height="4.6" fill="#471365"/>
<rect x="271.78" y="602.45" width="4.62" height="4.6" fill="#481c6e"/>
<rect x="275.9" y="602.45" width="4.62" height="4.6" fill="#482475"/>
<rect x="280.02" y="602.45" width="4.62" height="4.6" fill="#443b84"/>
<rect x="284.14" y="602.45" width="4.62" height="4.6" fill="#3b528b"/>
<rect x="288.26" y="602.45" width="4.62" height="4.6" fill="#2c728e"/>
<rect x="292.38" y="602.45" width="4.62" height="4.6" fill="#1e9c89"/>
<rect x="296.49" y="602.45" width="4.62" height="4.6" fill="#6ccd5a"/>
<rect x="300.61" y="602.45" width="4.62" height="4.6" fill="#efe51c"/>
<rect x="304.73" y="602.45" width="54.05" height="4.6" fill="#fde725"/>
<rect x="358.29" y="602.45" width="4.62" height="4.6" fill="#addc30"/>
<rect x="362.41" y="602.45" width="4.62" height="4.6" fill="#2fb47c"/>
<rect x="366.52" y="602.45" width="4.62" height="4.6" fill="#25848e"/>
<rect x="370.64" y="602.45" width="4.62" height="4.6" fill="#355f8d"/>
<rect x="374.76" y="602.45" width="4.62" height="4.6" fill="#414487"/>
<rect x="378.88" y="602.45" width="4.62" height="4.6" fill="#443b84"/>
<rect x="383" y="602.45" width="8.74" height="4.6" fill="#463480"/>
<rect x="391.24" y="602.45" width="4.62" height="4.6" fill="#443b84"/>
<rect x="395.36" y="602.45" width="4.62" height="4.6" fill="#414487"/>
<rect x="399.48" y="602.45" width="4.62" height="4.6" fill="#3e4a89"/>
<rect x="255.3" y="606.55" width="4.62" height="4.6" fill="#414487"/>
<rect x="259.42" y="606.55" width="4.62" height="4.6" fill="#463480"/>
<rect x="263.54" y="606.55" width="8.74" height="4.6" fill="#471365"/>
<rect x="271.78" y="606.55" width="4.62" height="4.6" fill="#481c6e"/>
<rect x="275.9" y="606.55" width="4.62" height="4.6" fill="#482475"/>
<rect x="280.02" y="606.55" width="4.62" height="4.6" fill="#443b84"/>
<rect x="284.14" y="606.55" width="4.62" height="4.6" fill="#38598c"/>
<rect x="288.26" y="606.55" width="4.62" height="4.6" fill="#2a788e"/>
<rect x="292.38" y="606.55" width="4.62" height="4.6" fill="#1fa287"/>
<rect x="296.49" y="606.55" width="4.62" height="4.6" fill="#7ad151"/>
<rect x="300.61" y="606.55" width="58.17" height="4.6" fill="#fde725"/>
<rect x="358.29" y="606.55" width="4.62" height="4.6" fill="#8bd646"/>
<rect x="362.41" y="606.55" width="4.62" height="4.6" fill="#22a884"/>
<rect x="366.52" y="606.55" width="4.62" height="4.6" fill="#277e8e"/>
<rect x="370.64" y="606.55" width="4.62" height="4.6" fill="#38598c"/>
<rect x="374.76" y="606.55" width="4.62" height="4.6" fill="#3b528b"/>
<rect x="378.88" y="606.55" width="4.62" height="4.6" fill="#3e4a89"/>
<rect x="383" y="606.55" width="4.62" height="4.6" fill="#414487"/>
<rect x="387.12" y="606.55" width="4.62" height="4.6" fill="#443b84"/>
<rect x="391.24" y="606.55" width="4.62" height="4.6" fill="#414487"/>
<rect x="395.36" y="606.55" width="4.62" height="4.6" fill="#3e4a89"/>
<rect x="399.48" y="606.55" width="4.62" height="4.6" fill="#3b528b"/>
<rect x="255.3" y="610.65" width="4.62" height="4.6" fill="#463480"/>
<rect x="259.42" y="610.65" width="4.62" height="4.6" fill="#481c6e"/>
<rect x="263.54" y="610.65" width="4.62" height="4.6" fill="#460a5d"/>
<rect x="267.66" y="610.65" width="4.62" height="4.6" fill="#471365"/>
<rect x="271.78" y="610.65" width="4.62" height="4.6" fill="#481c6e"/>
<rect x="275.9" y="610.65" width="4.62" height="4.6" fill="#482475"/>
<rect x="280.02" y="610.65" width="4.62" height="4.6" fill="#443b84"/>
<rect x="284.14" y="610.65" width="4.62" height="4.6" fill="#3b528b"/>
<rect x="288.26" y="610.65" width="4.62" height="4.6" fill="#2c728e"/>
<rect x="292.38" y="610.65" width="4.62" height="4.6" fill="#1e9c89"/>
<rect x="296.49" y="610.65" width="4.62" height="4.6" fill="#5ec962"/>
<rect x="300.61" y="610.65" width="4.62" height="4.6" fill="#dfe318"/>
<rect x="304.73" y="610.65" width="49.93" height="4.6" fill="#fde725"/>
<rect x="354.17" y="610.65" width="4.62" height="4.6" fill="#efe51c"/>
<rect x="358.29" y="610.65" width="4.62" height="4.6" fill="#6ccd5a"/>
<rect x="362.41" y="610.65" width="4.62" height="4.6" fill="#1e9c89"/>
<rect x="366.52" y="610.65" width="4.62" height="4.6" fill="#2c728e"/>
<rect x="370.64" y="610.65" width="8.74" height="4.6" fill="#355f8d"/>
<rect x="378.88" y="610.65" width="4.62" height="4.6" fill="#38598c"/>
<rect x="383" y="610.65" width="4.62" height="4.6" fill="#3e4a89"/>
<rect x="387.12" y="610.65" width="4.62" height="4.6" fill="#414487"/>
<rect x="391.24" y="610.65" width="4.62" height="4.6" fill="#3e4a89"/>
<rect x="395.36" y="610.65" width="4.62" height="4.6" fill="#3b528b"/>
<rect x="399.48" y="610.65" width="4.62" height="4.6" fill="#38598c"/>
<rect x="255.3" y="614.76" width="4.62" height="4.6" fill="#481c6e"/>
<rect x="259.42" y="614.76" width="8.74" height="4.6" fill="#460a5d"/>
<rect x="267.66" y="614.76" width="8.74" height="4.6" fill="#471365"/>
<rect x="275.9" y="614.76" width="4.62" height="4.6" fill="#482475"/>
<rect x="280.02" y="614.76" width="4.62" height="4.6" fill="#463480"/>
<rect x="284.14" y="614.76" width="4.62" height="4.6" fill="#3e4a89"/>
<rect x="288.26" y="614.76" width="4.62" height="4.6" fill="#31668e"/>
<rect x="292.38" y="614.76" width="4.62" height="4.6" fill="#25848e"/>
<rect x="296.49" y="614.76" width="4.62" height="4.6" fill="#22a884"/>
<rect x="300.61" y="614.76" width="4.62" height="4.6" fill="#6ccd5a"/>
<rect x="304.73" y="614.76" width="4.62" height="4.6" fill="#cde11d"/>
<rect x="308.85" y="614.76" width="45.81" height="4.6" fill="#fde725"/>
<rect x="354.17" y="614.76" width="4.62" height="4.6" fill="#cde11d"/>
<rect x="358.29" y="614.76" width="4.62" height="4.6" fill="#50c46a"/>
<rect x="362.41" y="614.76" width="4.62" height="4.6" fill="#21918c"/>
<rect x="366.52" y="614.76" width="4.62" height="4.6" fill="#2c728e"/>
<rect x="370.64" y="614.76" width="4.62" height="4.6" fill="#2f6c8e"/>
<rect x="374.76" y="614.76" width="4.62" height="4.6" fill="#31668e"/>
<rect x="378.88" y="614.76" width="4.62" height="4.6" fill="#355f8d"/>
<rect x="383" y="614.76" width="4.62" height="4.6" fill="#38598c"/>
<rect x="387.12" y="614.76" width="4.62" height="4.6" fill="#3e4a89"/>
<rect x="391.24" y="614.76" width="4.62" height="4.6" fill="#3b528b"/>
<rect x="395.36" y="614.76" width="4.62" height="4.6" fill="#38598c"/>
<rect x="399.48" y="614.76" width="4.62" height="4.6" fill="#355f8d"/>
<rect x="255.3" y="618.86" width="4.62" height="4.6" fill="#460a5d"/>
<rect x="259.42" y="618.86" width="4.62" height="4.6" fill="#440154"/>
<rect x="263.54" y="618.86" width="8.74" height="4.6" fill="#460a5d"/>
<rect x="271.78" y="618.86" width="4.62" height="4.6" fill="#471365"/>
<rect x="275.9" y="618.86" width="4.62" height="4.6" fill="#481c6e"/>
<rect x="280.02" y="618.86" width="4.62" height="4.6" fill="#472d7b"/>
<rect x="284.14" y="618.86" width="4.62" height="4.6" fill="#443b84"/>
<rect x="288.26" y="618.86" width="4.62" height="4.6" fill="#3b528b"/>
<rect x="292.38" y="618.86" width="4.62" height="4.6" fill="#31668e"/>
<rect x="296.49" y="618.86" width="4.62" height="4.6" fill="#277e8e"/>
<rect x="300.61" y="618.86" width="4.62" height="4.6" fill="#1f968b"/>
<rect x="304.73" y="618.86" width="4.62" height="4.6" fill="#2fb47c"/>
<rect x="308.85" y="618.86" width="4.62" height="4.6" fill="#5ec962"/>
<rect x="312.97" y="618.86" width="4.62" height="4.6" fill="#9bd93c"/>
<rect x="317.09" y="618.86" width="4.62" height="4.6" fill="#dfe318"/>
<rect x="321.21" y="618.86" width="33.46" height="4.6" fill="#fde725"/>
<rect x="354.17" y="618.86" width="4.62" height="4.6" fill="#9bd93c"/>
<rect x="358.29" y="618.86" width="4.62" height="4.6" fill="#2fb47c"/>
<rect x="362.41" y="618.86" width="4.62" height="4.6" fill="#238a8d"/>
<rect x="366.52" y="618.86" width="4.62" height="4.6" fill="#277e8e"/>
<rect x="370.64" y="618.86" width="4.62" height="4.6" fill="#2a788e"/>
<rect x="374.76" y="618.86" width="4.62" height="4.6" fill="#2c728e"/>
<rect x="378.88" y="618.86" width="4.62" height="4.6" fill="#31668e"/>
<rect x="383" y="618.86" width="4.62" height="4.6" fill="#355f8d"/>
<rect x="387.12" y="618.86" width="8.74" height="4.6" fill="#3b528b"/>
<rect x="395.36" y="618.86" width="4.62" height="4.6" fill="#38598c"/>
<rect x="399.48" y="618.86" width="4.62" height="4.6" fill="#355f8d"/>
<rect x="255.3" y="622.96" width="8.74" height="4.6" fill="#440154"/>
<rect x="263.54" y="622.96" width="12.86" height="4.6" fill="#460a5d"/>
<rect x="275.9" y="622.96" width="4.62" height="4.6" fill="#471365"/>
<rect x="280.02" y="622.96" width="4.62" height="4.6" fill="#481c6e"/>
<rect x="284.14" y="622.96" width="4.62" height="4.6" fill="#482475"/>
<rect x="288.26" y="622.96" width="4.62" height="4.6" fill="#463480"/>
<rect x="292.38" y="622.96" width="4.62" height="4.6" fill="#414487"/>
<rect x="296.49" y="622.96" width="4.62" height="4.6" fill="#3b528b"/>
<rect x="300.61" y="622.96" width="4.62" height="4.6" fill="#31668e"/>
<rect x="304.73" y="622.96" width="4.62" height="4.6" fill="#2a788e"/>
<rect x="308.85" y="622.96" width="4.62" height="4.6" fill="#25848e"/>
<rect x="312.97" y="622.96" width="4.62" height="4.6" fill="#1f968b"/>
<rect x="317.09" y="622.96" width="4.62" height="4.6" fill="#28ae80"/>
<rect x="321.21" y="622.96" width="4.62" height="4.6" fill="#44bf70"/>
<rect x="325.33" y="622.96" width="4.62" height="4.6" fill="#6ccd5a"/>
<rect x="329.45" y="622.96" width="4.62" height="4.6" fill="#9bd93c"/>
<rect x="333.57" y="622.96" width="4.62" height="4.6" fill="#cde11d"/>
<rect x="337.69" y="622.96" width="4.62" height="4.6" fill="#efe51c"/>
<rect x="341.81" y="622.96" width="4.62" height="4.6" fill="#fde725"/>
<rect x="345.93" y="622.96" width="4.62" height="4.6" fill="#efe51c"/>
<rect x="350.05" y="622.96" width="4.62" height="4.6" fill="#bddf26"/>
<rect x="354.17" y="622.96" width="4.62" height="4.6" fill="#5ec962"/>
<rect x="358.29" y="622.96" width="4.62" height="4.6" fill="#1fa287"/>
<rect x="362.41" y="622.96" width="8.74" height="4.6" fill="#25848e"/>
<rect x="370.64" y="622.96" width="4.62" height="4.6" fill="#277e8e"/>
<rect x="374.76" y="622.96" width="4.62" height="4.6" fill="#2a788e"/>
<rect x="378.88" y="622.96" width="4.62" height="4.6" fill="#2f6c8e"/>
<rect x="383" y="622.96" width="4.62" height="4.6" fill="#31668e"/>
<rect x="387.12" y="622.96" width="4.62" height="4.6" fill="#38598c"/>
<rect x="391.24" y="622.96" width="4.62" height="4.6" fill="#3b528b"/>
<rect x="395.36" y="622.96" width="4.62" height="4.6" fill="#38598c"/>
<rect x="399.48" y="622.96" width="4.62" height="4.6" fill="#355f8d"/>
<rect x="255.3" y="627.06" width="12.86" height="4.6" fill="#440154"/>
<rect x="267.66" y="627.06" width="12.86" height="4.6" fill="#460a5d"/>
<rect x="280.02" y="627.06" width="4.62" height="4.6" fill="#471365"/>
<rect x="284.14" y="627.06" width="8.74" height="4.6" fill="#481c6e"/>
<rect x="292.38" y="627.06" width="4.62" height="4.6" fill="#482475"/>
<rect x="296.49" y="627.06" width="4.62" height="4.6" fill="#463480"/>
<rect x="300.61" y="627.06" width="4.62" height="4.6" fill="#443b84"/>
<rect x="304.73" y="627.06" width="4.62" height="4.6" fill="#3e4a89"/>
<rect x="308.85" y="627.06" width="4.62" height="4.6" fill="#3b528b"/>
<rect x="312.97" y="627.06" width="4.62" height="4.6" fill="#355f8d"/>
<rect x="317.09" y="627.06" width="4.62" height="4.6" fill="#2f6c8e"/>
<rect x="321.21" y="627.06" width="4.62" height="4.6" fill="#2a788e"/>
<rect x="325.33" y="627.06" width="4.62" height="4.6" fill="#238a8d"/>
<rect x="329.45" y="627.06" width="4.62" height="4.6" fill="#1e9c89"/>
<rect x="333.57" y="627.06" width="4.62" height="4.6" fill="#22a884"/>
<rect x="337.69" y="627.06" width="4.62" height="4.6" fill="#38b977"/>
<rect x="341.81" y="627.06" width="8.74" height="4.6" fill="#50c46a"/>
<rect x="350.05" y="627.06" width="4.62" height="4.6" fill="#38b977"/>
<rect x="354.17" y="627.06" width="4.62" height="4.6" fill="#1fa287"/>
<rect x="358.29" y="627.06" width="8.74" height="4.6" fill="#238a8d"/>
<rect x="366.52" y="627.06" width="8.74" height="4.6" fill="#25848e"/>
<rect x="374.76" y="627.06" width="4.62" height="4.6" fill="#2a788e"/>
<rect x="378.88" y="627.06" width="4.62" height="4.6" fill="#2c728e"/>
<rect x="383" y="627.06" width="4.62" height="4.6" fill="#31668e"/>
<rect x="387.12" y="627.06" width="4.62" height="4.6" fill="#38598c"/>
<rect x="391.24" y="627.06" width="4.62" height="4.6" fill="#3b528b"/>
<rect x="395.36" y="627.06" width="4.62" height="4.6" fill="#38598c"/>
<rect x="399.48" y="627.06" width="4.62" height="4.6" fill="#355f8d"/>
<rect x="255.3" y="631.17" width="8.74" height="4.6" fill="#460a5d"/>
<rect x="263.54" y="631.17" width="12.86" height="4.6" fill="#440154"/>
<rect x="275.9" y="631.17" width="12.86" height="4.6" fill="#460a5d"/>
<rect x="288.26" y="631.17" width="8.74" height="4.6" fill="#471365"/>
<rect x="296.49" y="631.17" width="4.62" height="4.6" fill="#481c6e"/>
<rect x="300.61" y="631.17" width="8.74" height="4.6" fill="#482475"/>
<rect x="308.85" y="631.17" width="4.62" height="4.6" fill="#472d7b"/>
<rect x="312.97" y="631.17" width="4.62" height="4.6" fill="#463480"/>
<rect x="317.09" y="631.17" width="4.62" height="4.6" fill="#443b84"/>
<rect x="321.21" y="631.17" width="4.62" height="4.6" fill="#3e4a89"/>
<rect x="325.33" y="631.17" width="4.62" height="4.6" fill="#3b528b"/>
<rect x="329.45" y="631.17" width="4.62" height="4.6" fill="#355f8d"/>
<rect x="333.57" y="631.17" width="4.62" height="4.6" fill="#2f6c8e"/>
<rect x="337.69" y="631.17" width="4.62" height="4.6" fill="#2a788e"/>
<rect x="341.81" y="631.17" width="4.62" height="4.6" fill="#277e8e"/>
<rect x="345.93" y="631.17" width="12.86" height="4.6" fill="#25848e"/>
<rect x="358.29" y="631.17" width="8.74" height="4.6" fill="#238a8d"/>
<rect x="366.52" y="631.17" width="8.74" height="4.6" fill="#25848e"/>
<rect x="374.76" y="631.17" width="4.62" height="4.6" fill="#2a788e"/>
<rect x="378.88" y="631.17" width="4.62" height="4.6" fill="#2c728e"/>
<rect x="383" y="631.17" width="4.62" height="4.6" fill="#31668e"/>
<rect x="387.12" y="631.17" width="4.62" height="4.6" fill="#38598c"/>
<rect x="391.24" y="631.17" width="4.62" height="4.6" fill="#3e4a89"/>
<rect x="395.36" y="631.17" width="4.62" height="4.6" fill="#3b528b"/>
<rect x="399.48" y="631.17" width="4.62" height="4.6" fill="#38598c"/>
<rect x="255.3" y="635.27" width="4.62" height="4.6" fill="#481c6e"/>
<rect x="259.42" y="635.27" width="4.62" height="4.6" fill="#471365"/>
<rect x="263.54" y="635.27" width="4.62" height="4.6" fill="#460a5d"/>
<rect x="267.66" y="635.27" width="16.98" height="4.6" fill="#440154"/>
<rect x="284.14" y="635.27" width="16.98" height="4.6" fill="#460a5d"/>
<rect x="300.61" y="635.27" width="12.86" height="4.6" fill="#471365"/>
<rect x="312.97" y="635.27" width="4.62" height="4.6" fill="#481c6e"/>
<rect x="317.09" y="635.27" width="4.62" height="4.6" fill="#482475"/>
<rect x="321.21" y="635.27" width="4.62" height="4.6" fill="#472d7b"/>
<rect x="325.33" y="635.27" width="4.62" height="4.6" fill="#463480"/>
<rect x="329.45" y="635.27" width="4.62" height="4.6" fill="#414487"/>
<rect x="333.57" y="635.27" width="4.62" height="4.6" fill="#3e4a89"/>
<rect x="337.69" y="635.27" width="4.62" height="4.6" fill="#38598c"/>
<rect x="341.81" y="635.27" width="4.62" height="4.6" fill="#31668e"/>
<rect x="345.93" y="635.27" width="4.62" height="4.6" fill="#2c728e"/>
<rect x="350.05" y="635.27" width="4.62" height="4.6" fill="#2a788e"/>
<rect x="354.17" y="635.27" width="4.62" height="4.6" fill="#277e8e"/>
<rect x="358.29" y="635.27" width="12.86" height="4.6" fill="#25848e"/>
<rect x="370.64" y="635.27" width="4.62" height="4.6" fill="#277e8e"/>
<rect x="374.76" y="635.27" width="4.62" height="4.6" fill="#2a788e"/>
<rect x="378.88" y="635.27" width="4.62" height="4.6" fill="#2f6c8e"/>
<rect x="383" y="635.27" width="4.62" height="4.6" fill="#31668e"/>
<rect x="387.12" y="635.27" width="4.62" height="4.6" fill="#38598c"/>
<rect x="391.24" y="635.27" width="8.74" height="4.6" fill="#3e4a89"/>
<rect x="399.48" y="635.27" width="4.62" height="4.6" fill="#3b528b"/>
<rect x="255.3" y="639.37" width="4.62" height="4.6" fill="#443b84"/>
<rect x="259.42" y="639.37" width="4.62" height="4.6" fill="#482475"/>
<rect x="263.54" y="639.37" width="4.62" height="4.6" fill="#471365"/>
<rect x="267.66" y="639.37" width="8.74" height="4.6" fill="#460a5d"/>
<rect x="275.9" y="639.37" width="21.1" height="4.6" fill="#440154"/>
<rect x="296.49" y="639.37" width="12.86" height="4.6" fill="#460a5d"/>
<rect x="308.85" y="639.37" width="8.74" height="4.6" fill="#471365"/>
<rect x="317.09" y="639.37" width="4.62" height="4.6" fill="#481c6e"/>
<rect x="321.21" y="639.37" width="4.62" height="4.6" fill="#482475"/>
<rect x="325.33" y="639.37" width="4.62" height="4.6" fill="#463480"/>
<rect x="329.45" y="639.37" width="4.62" height="4.6" fill="#443b84"/>
<rect x="333.57" y="639.37" width="4.62" height="4.6" fill="#3e4a89"/>
<rect x="337.69" y="639.37" width="4.62" height="4.6" fill="#3b528b"/>
<rect x="341.81" y="639.37" width="4.62" height="4.6" fill="#355f8d"/>
<rect x="345.93" y="639.37" width="4.62" height="4.6" fill="#2f6c8e"/>
<rect x="350.05" y="639.37" width="4.62" height="4.6" fill="#2c728e"/>
<rect x="354.17" y="639.37" width="4.62" height="4.6" fill="#2a788e"/>
<rect x="358.29" y="639.37" width="12.86" height="4.6" fill="#277e8e"/>
<rect x="370.64" y="639.37" width="4.62" height="4.6" fill="#2a788e"/>
<rect x="374.76" y="639.37" width="4.62" height="4.6" fill="#2c728e"/>
<rect x="378.88" y="639.37" width="4.62" height="4.6" fill="#31668e"/>
<rect x="383" y="639.37" width="4.62" height="4.6" fill="#355f8d"/>
<rect x="387.12" y="639.37" width="4.62" height="4.6" fill="#3b528b"/>
<rect x="391.24" y="639.37" width="8.74" height="4.6" fill="#414487"/>
<rect x="399.48" y="639.37" width="4.62" height="4.6" fill="#3e4a89"/>
<rect x="255.3" y="643.48" width="4.62" height="4.6" fill="#38598c"/>
<rect x="259.42" y="643.48" width="4.62" height="4.6" fill="#414487"/>
<rect x="263.54" y="643.48" width="4.62" height="4.6" fill="#472d7b"/>
<rect x="267.66" y="643.48" width="4.62" height="4.6" fill="#481c6e"/>
<rect x="271.78" y="643.48" width="8.74" height="4.6" fill="#460a5d"/>
<rect x="280.02" y="643.48" width="21.1" height="4.6" fill="#440154"/>
<rect x="300.61" y="643.48" width="8.74" height="4.6" fill="#460a5d"/>
<rect x="308.85" y="643.48" width="8.74" height="4.6" fill="#471365"/>
<rect x="317.09" y="643.48" width="4.62" height="4.6" fill="#481c6e"/>
<rect x="321.21" y="643.48" width="4.62" height="4.6" fill="#482475"/>
<rect x="325.33" y="643.48" width="4.62" height="4.6" fill="#472d7b"/>
<rect x="329.45" y="643.48" width="4.62" height="4.6" fill="#463480"/>
<rect x="333.57" y="643.48" width="4.62" height="4.6" fill="#414487"/>
<rect x="337.69" y="643.48" width="4.62" height="4.6" fill="#3e4a89"/>
<rect x="341.81" y="643.48" width="4.62" height="4.6" fill="#38598c"/>
<rect x="345.93" y="643.48" width="4.62" height="4.6" fill="#355f8d"/>
<rect x="350.05" y="643.48" width="8.74" height="4.6" fill="#2f6c8e"/>
<rect x="358.29" y="643.48" width="12.86" height="4.6" fill="#2c728e"/>
<rect x="370.64" y="643.48" width="4.62" height="4.6" fill="#2f6c8e"/>
<rect x="374.76" y="643.48" width="4.62" height="4.6" fill="#31668e"/>
<rect x="378.88" y="643.48" width="4.62" height="4.6" fill="#355f8d"/>
<rect x="383" y="643.48" width="4.62" height="4.6" fill="#38598c"/>
<rect x="387.12" y="643.48" width="4.62" height="4.6" fill="#3e4a89"/>
<rect x="391.24" y="643.48" width="4.62" height="4.6" fill="#414487"/>
<rect x="395.36" y="643.48" width="4.62" height="4.6" fill="#443b84"/>
<rect x="399.48" y="643.48" width="4.62" height="4.6" fill="#414487"/>
<rect x="255.3" y="647.58" width="4.62" height="4.6" fill="#2a788e"/>
<rect x="259.42" y="647.58" width="4.62" height="4.6" fill="#355f8d"/>
<rect x="263.54" y="647.58" width="4.62" height="4.6" fill="#3e4a89"/>
<rect x="267.66" y="647.58" width="4.62" height="4.6" fill="#472d7b"/>
<rect x="271.78" y="647.58" width="4.62" height="4.6" fill="#481c6e"/>
<rect x="275.9" y="647.58" width="4.62" height="4.6" fill="#471365"/>
<rect x="280.02" y="647.58" width="8.74" height="4.6" fill="#460a5d"/>
<rect x="288.26" y="647.58" width="12.86" height="4.6" fill="#440154"/>
<rect x="300.61" y="647.58" width="8.74" height="4.6" fill="#460a5d"/>
<rect x="308.85" y="647.58" width="4.62" height="4.6" fill="#471365"/>
<rect x="312.97" y="647.58" width="4.62" height="4.6" fill="#482475"/>
<rect x="317.09" y="647.58" width="4.62" height="4.6" fill="#472d7b"/>
<rect x="321.21" y="647.58" width="12.86" height="4.6" fill="#463480"/>
<rect x="333.57" y="647.58" width="4.62" height="4.6" fill="#443b84"/>
<rect x="337.69" y="647.58" width="4.62" height="4.6" fill="#414487"/>
<rect x="341.81" y="647.58" width="4.62" height="4.6" fill="#3b528b"/>
<rect x="345.93" y="647.58" width="4.62" height="4.6" fill="#38598c"/>
<rect x="350.05" y="647.58" width="4.62" height="4.6" fill="#355f8d"/>
<rect x="354.17" y="647.58" width="16.98" height="4.6" fill="#31668e"/>
<rect x="370.64" y="647.58" width="8.74" height="4.6" fill="#355f8d"/>
<rect x="378.88" y="647.58" width="4.62" height="4.6" fill="#38598c"/>
<rect x="383" y="647.58" width="4.62" height="4.6" fill="#3e4a89"/>
<rect x="387.12" y="647.58" width="4.62" height="4.6" fill="#414487"/>
<rect x="391.24" y="647.58" width="4.62" height="4.6" fill="#443b84"/>
<rect x="395.36" y="647.58" width="4.62" height="4.6" fill="#463480"/>
<rect x="399.48" y="647.58" width="4.62" height="4.6" fill="#443b84"/>
<rect x="255.3" y="651.68" width="4.62" height="4.6" fill="#238a8d"/>
<rect x="259.42" y="651.68" width="4.62" height="4.6" fill="#2a788e"/>
<rect x="263.54" y="651.68" width="4.62" height="4.6" fill="#31668e"/>
<rect x="267.66" y="651.68" width="4.62" height="4.6" fill="#3e4a89"/>
<rect x="271.78" y="651.68" width="4.62" height="4.6" fill="#463480"/>
<rect x="275.9" y="651.68" width="4.62" height="4.6" fill="#482475"/>
<rect x="280.02" y="651.68" width="8.74" height="4.6" fill="#471365"/>
<rect x="288.26" y="651.68" width="8.74" height="4.6" fill="#460a5d"/>
<rect x="296.49" y="651.68" width="4.62" height="4.6" fill="#440154"/>
<rect x="300.61" y="651.68" width="4.62" height="4.6" fill="#460a5d"/>
<rect x="304.73" y="651.68" width="4.62" height="4.6" fill="#471365"/>
<rect x="308.85" y="651.68" width="4.62" height="4.6" fill="#481c6e"/>
<rect x="312.97" y="651.68" width="4.62" height="4.6" fill="#463480"/>
<rect x="317.09" y="651.68" width="4.62" height="4.6" fill="#3e4a89"/>
<rect x="321.21" y="651.68" width="4.62" height="4.6" fill="#38598c"/>
<rect x="325.33" y="651.68" width="4.62" height="4.6" fill="#3b528b"/>
<rect x="329.45" y="651.68" width="4.62" height="4.6" fill="#3e4a89"/>
<rect x="333.57" y="651.68" width="8.74" height="4.6" fill="#443b84"/>
<rect x="341.81" y="651.68" width="4.62" height="4.6" fill="#414487"/>
<rect x="345.93" y="651.68" width="4.62" height="4.6" fill="#3e4a89"/>
<rect x="350.05" y="651.68" width="4.62" height="4.6" fill="#3b528b"/>
<rect x="354.17" y="651.68" width="21.1" height="4.6" fill="#38598c"/>
<rect x="374.76" y="651.68" width="4.62" height="4.6" fill="#3b528b"/>
<rect x="378.88" y="651.68" width="4.62" height="4.6" fill="#3e4a89"/>
<rect x="383" y="651.68" width="4.62" height="4.6" fill="#414487"/>
<rect x="387.12" y="651.68" width="4.62" height="4.6" fill="#443b84"/>
<rect x="391.24" y="651.68" width="4.62" height="4.6" fill="#463480"/>
<rect x="395.36" y="651.68" width="8.74" height="4.6" fill="#472d7b"/>
<rect x="255.3" y="655.78" width="8.74" height="4.6" fill="#238a8d"/>
<rect x="263.54" y="655.78" width="4.62" height="4.6" fill="#277e8e"/>
<rect x="267.66" y="655.78" width="4.62" height="4.6" fill="#2f6c8e"/>
<rect x="271.78" y="655.78" width="4.62" height="4.6" fill="#3b528b"/>
<rect x="275.9" y="655.78" width="4.62" height="4.6" fill="#443b84"/>
<rect x="280.02" y="655.78" width="4.62" height="4.6" fill="#472d7b"/>
<rect x="284.14" y="655.78" width="4.62" height="4.6" fill="#481c6e"/>
<rect x="288.26" y="655.78" width="4.62" height="4.6" fill="#471365"/>
<rect x="292.38" y="655.78" width="12.86" height="4.6" fill="#460a5d"/>
<rect x="304.73" y="655.78" width="4.62" height="4.6" fill="#471365"/>
<rect x="308.85" y="655.78" width="4.62" height="4.6" fill="#472d7b"/>
<rect x="312.97" y="655.78" width="4.62" height="4.6" fill="#3e4a89"/>
<rect x="317.09" y="655.78" width="4.62" height="4.6" fill="#355f8d"/>
<rect x="321.21" y="655.78" width="4.62" height="4.6" fill="#2c728e"/>
<rect x="325.33" y="655.78" width="4.62" height="4.6" fill="#2f6c8e"/>
<rect x="329.45" y="655.78" width="4.62" height="4.6" fill="#31668e"/>
<rect x="333.57" y="655.78" width="4.62" height="4.6" fill="#38598c"/>
<rect x="337.69" y="655.78" width="4.62" height="4.6" fill="#3b528b"/>
<rect x="341.81" y="655.78" width="4.62" height="4.6" fill="#414487"/>
<rect x="345.93" y="655.78" width="4.62" height="4.6" fill="#443b84"/>
<rect x="350.05" y="655.78" width="4.62" height="4.6" fill="#414487"/>
<rect x="354.17" y="655.78" width="21.1" height="4.6" fill="#3e4a89"/>
<rect x="374.76" y="655.78" width="4.62" height="4.6" fill="#414487"/>
<rect x="378.88" y="655.78" width="4.62" height="4.6" fill="#443b84"/>
<rect x="383" y="655.78" width="4.62" height="4.6" fill="#463480"/>
<rect x="387.12" y="655.78" width="8.74" height="4.6" fill="#472d7b"/>
<rect x="395.36" y="655.78" width="8.74" height="4.6" fill="#482475"/>
<rect x="255.3" y="659.89" width="4.62" height="4.6" fill="#277e8e"/>
<rect x="259.42" y="659.89" width="8.74" height="4.6" fill="#238a8d"/>
<rect x="267.66" y="659.89" width="4.62" height="4.6" fill="#25848e"/>
<rect x="271.78" y="659.89" width="4.62" height="4.6" fill="#2c728e"/>
<rect x="275.9" y="659.89" width="4.62" height="4.6" fill="#38598c"/>
<rect x="280.02" y="659.89" width="4.62" height="4.6" fill="#3e4a89"/>
<rect x="284.14" y="659.89" width="4.62" height="4.6" fill="#463480"/>
<rect x="288.26" y="659.89" width="4.62" height="4.6" fill="#482475"/>
<rect x="292.38" y="659.89" width="4.62" height="4.6" fill="#471365"/>
<rect x="296.49" y="659.89" width="8.74" height="4.6" fill="#460a5d"/>
<rect x="304.73" y="659.89" width="4.62" height="4.6" fill="#471365"/>
<rect x="308.85" y="659.89" width="4.62" height="4.6" fill="#472d7b"/>
<rect x="312.97" y="659.89" width="4.62" height="4.6" fill="#3b528b"/>
<rect x="317.09" y="659.89" width="4.62" height="4.6" fill="#2f6c8e"/>
<rect x="321.21" y="659.89" width="8.74" height="4.6" fill="#277e8e"/>
<rect x="329.45" y="659.89" width="4.62" height="4.6" fill="#2a788e"/>
<rect x="333.57" y="659.89" width="4.62" height="4.6" fill="#2c728e"/>
<rect x="337.69" y="659.89" width="4.62" height="4.6" fill="#2f6c8e"/>
<rect x="341.81" y="659.89" width="4.62" height="4.6" fill="#355f8d"/>
<rect x="345.93" y="659.89" width="4.62" height="4.6" fill="#38598c"/>
<rect x="350.05" y="659.89" width="4.62" height="4.6" fill="#3e4a89"/>
<rect x="354.17" y="659.89" width="4.62" height="4.6" fill="#414487"/>
<rect x="358.29" y="659.89" width="16.98" height="4.6" fill="#443b84"/>
<rect x="374.76" y="659.89" width="8.74" height="4.6" fill="#463480"/>
<rect x="383" y="659.89" width="4.62" height="4.6" fill="#472d7b"/>
<rect x="387.12" y="659.89" width="8.74" height="4.6" fill="#482475"/>
<rect x="395.36" y="659.89" width="8.74" height="4.6" fill="#481c6e"/>
<rect x="255.3" y="663.99" width="4.62" height="4.6" fill="#31668e"/>
<rect x="259.42" y="663.99" width="4.62" height="4.6" fill="#2a788e"/>
<rect x="263.54" y="663.99" width="4.62" height="4.6" fill="#25848e"/>
<rect x="267.66" y="663.99" width="4.62" height="4.6" fill="#238a8d"/>
<rect x="271.78" y="663.99" width="4.62" height="4.6" fill="#25848e"/>
<rect x="275.9" y="663.99" width="4.62" height="4.6" fill="#2a788e"/>
<rect x="280.02" y="663.99" width="4.62" height="4.6" fill="#31668e"/>
<rect x="284.14" y="663.99" width="4.62" height="4.6" fill="#3b528b"/>
<rect x="288.26" y="663.99" width="4.62" height="4.6" fill="#463480"/>
<rect x="292.38" y="663.99" width="4.62" height="4.6" fill="#481c6e"/>
<rect x="296.49" y="663.99" width="4.62" height="4.6" fill="#471365"/>
<rect x="300.61" y="663.99" width="4.62" height="4.6" fill="#460a5d"/>
<rect x="304.73" y="663.99" width="4.62" height="4.6" fill="#471365"/>
<rect x="308.85" y="663.99" width="4.62" height="4.6" fill="#472d7b"/>
<rect x="312.97" y="663.99" width="4.62" height="4.6" fill="#3e4a89"/>
<rect x="317.09" y="663.99" width="4.62" height="4.6" fill="#31668e"/>
<rect x="321.21" y="663.99" width="4.62" height="4.6" fill="#2c728e"/>
<rect x="325.33" y="663.99" width="4.62" height="4.6" fill="#2a788e"/>
<rect x="329.45" y="663.99" width="8.74" height="4.6" fill="#277e8e"/>
<rect x="337.69" y="663.99" width="8.74" height="4.6" fill="#2a788e"/>
<rect x="345.93" y="663.99" width="4.62" height="4.6" fill="#2c728e"/>
<rect x="350.05" y="663.99" width="4.62" height="4.6" fill="#2f6c8e"/>
<rect x="354.17" y="663.99" width="4.62" height="4.6" fill="#355f8d"/>
<rect x="358.29" y="663.99" width="4.62" height="4.6" fill="#38598c"/>
<rect x="362.41" y="663.99" width="4.62" height="4.6" fill="#3e4a89"/>
<rect x="366.52" y="663.99" width="4.62" height="4.6" fill="#443b84"/>
<rect x="370.64" y="663.99" width="4.62" height="4.6" fill="#463480"/>
<rect x="374.76" y="663.99" width="4.62" height="4.6" fill="#472d7b"/>
<rect x="378.88" y="663.99" width="8.74" height="4.6" fill="#482475"/>
<rect x="387.12" y="663.99" width="8.74" height="4.6" fill="#481c6e"/>
<rect x="395.36" y="663.99" width="4.62" height="4.6" fill="#471365"/>
<rect x="399.48" y="663.99" width="4.62" height="4.6" fill="#481c6e"/>
<rect x="255.3" y="668.09" width="4.62" height="4.6" fill="#414487"/>
<rect x="259.42" y="668.09" width="4.62" height="4.6" fill="#31668e"/>
<rect x="263.54" y="668.09" width="4.62" height="4.6" fill="#25848e"/>
<rect x="267.66" y="668.09" width="4.62" height="4.6" fill="#1f968b"/>
<rect x="271.78" y="668.09" width="4.62" height="4.6" fill="#1e9c89"/>
<rect x="275.9" y="668.09" width="4.62" height="4.6" fill="#1f968b"/>
<rect x="280.02" y="668.09" width="4.62" height="4.6" fill="#277e8e"/>
<rect x="284.14" y="668.09" width="4.62" height="4.6" fill="#31668e"/>
<rect x="288.26" y="668.09" width="4.62" height="4.6" fill="#3e4a89"/>
<rect x="292.38" y="668.09" width="4.62" height="4.6" fill="#463480"/>
<rect x="296.49" y="668.09" width="4.62" height="4.6" fill="#482475"/>
<rect x="300.61" y="668.09" width="8.74" height="4.6" fill="#471365"/>
<rect x="308.85" y="668.09" width="4.62" height="4.6" fill="#482475"/>
<rect x="312.97" y="668.09" width="4.62" height="4.6" fill="#443b84"/>
<rect x="317.09" y="668.09" width="4.62" height="4.6" fill="#3b528b"/>
<rect x="321.21" y="668.09" width="4.62" height="4.6" fill="#355f8d"/>
<rect x="325.33" y="668.09" width="4.62" height="4.6" fill="#31668e"/>
<rect x="329.45" y="668.09" width="4.62" height="4.6" fill="#2f6c8e"/>
<rect x="333.57" y="668.09" width="8.74" height="4.6" fill="#2a788e"/>
<rect x="341.81" y="668.09" width="8.74" height="4.6" fill="#277e8e"/>
<rect x="350.05" y="668.09" width="8.74" height="4.6" fill="#2a788e"/>
<rect x="358.29" y="668.09" width="4.62" height="4.6" fill="#2c728e"/>
<rect x="362.41" y="668.09" width="4.62" height="4.6" fill="#31668e"/>
<rect x="366.52" y="668.09" width="4.62" height="4.6" fill="#355f8d"/>
<rect x="370.64" y="668.09" width="4.62" height="4.6" fill="#3b528b"/>
<rect x="374.76" y="668.09" width="4.62" height="4.6" fill="#3e4a89"/>
<rect x="378.88" y="668.09" width="4.62" height="4.6" fill="#443b84"/>
<rect x="383" y="668.09" width="4.62" height="4.6" fill="#463480"/>
<rect x="387.12" y="668.09" width="4.62" height="4.6" fill="#482475"/>
<rect x="391.24" y="668.09" width="12.86" height="4.6" fill="#471365"/>
<rect x="255.3" y="672.19" width="4.62" height="4.6" fill="#3e4a89"/>
<rect x="259.42" y="672.19" width="4.62" height="4.6" fill="#2f6c8e"/>
<rect x="263.54" y="672.19" width="4.62" height="4.6" fill="#238a8d"/>
<rect x="267.66" y="672.19" width="4.62" height="4.6" fill="#1fa287"/>
<rect x="271.78" y="672.19" width="4.62" height="4.6" fill="#22a884"/>
<rect x="275.9" y="672.19" width="4.62" height="4.6" fill="#1e9c89"/>
<rect x="280.02" y="672.19" width="4.62" height="4.6" fill="#238a8d"/>
<rect x="284.14" y="672.19" width="4.62" height="4.6" fill="#277e8e"/>
<rect x="288.26" y="672.19" width="4.62" height="4.6" fill="#2f6c8e"/>
<rect x="292.38" y="672.19" width="4.62" height="4.6" fill="#3b528b"/>
<rect x="296.49" y="672.19" width="4.62" height="4.6" fill="#443b84"/>
<rect x="300.61" y="672.19" width="4.62" height="4.6" fill="#482475"/>
<rect x="304.73" y="672.19" width="8.74" height="4.6" fill="#471365"/>
<rect x="312.97" y="672.19" width="4.62" height="4.6" fill="#482475"/>
<rect x="317.09" y="672.19" width="4.62" height="4.6" fill="#463480"/>
<rect x="321.21" y="672.19" width="4.62" height="4.6" fill="#443b84"/>
<rect x="325.33" y="672.19" width="4.62" height="4.6" fill="#3e4a89"/>
<rect x="329.45" y="672.19" width="4.62" height="4.6" fill="#3b528b"/>
<rect x="333.57" y="672.19" width="4.62" height="4.6" fill="#355f8d"/>
<rect x="337.69" y="672.19" width="4.62" height="4.6" fill="#31668e"/>
<rect x="341.81" y="672.19" width="4.62" height="4.6" fill="#2c728e"/>
<rect x="345.93" y="672.19" width="8.74" height="4.6" fill="#2a788e"/>
<rect x="354.17" y="672.19" width="8.74" height="4.6" fill="#277e8e"/>
<rect x="362.41" y="672.19" width="4.62" height="4.6" fill="#2a788e"/>
<rect x="366.52" y="672.19" width="4.62" height="4.6" fill="#2c728e"/>
<rect x="370.64" y="672.19" width="4.62" height="4.6" fill="#2f6c8e"/>
<rect x="374.76" y="672.19" width="4.62" height="4.6" fill="#31668e"/>
<rect x="378.88" y="672.19" width="4.62" height="4.6" fill="#38598c"/>
<rect x="383" y="672.19" width="4.62" height="4.6" fill="#3e4a89"/>
<rect x="387.12" y="672.19" width="4.62" height="4.6" fill="#463480"/>
<rect x="391.24" y="672.19" width="4.62" height="4.6" fill="#481c6e"/>
<rect x="395.36" y="672.19" width="8.74" height="4.6" fill="#460a5d"/>
<rect x="255.3" y="676.3" width="4.62" height="4.6" fill="#414487"/>
<rect x="259.42" y="676.3" width="4.62" height="4.6" fill="#31668e"/>
<rect x="263.54" y="676.3" width="4.62" height="4.6" fill="#277e8e"/>
<rect x="267.66" y="676.3" width="4.62" height="4.6" fill="#1f968b"/>
<rect x="271.78" y="676.3" width="4.62" height="4.6" fill="#1e9c89"/>
<rect x="275.9" y="676.3" width="4.62" height="4.6" fill="#21918c"/>
<rect x="280.02" y="676.3" width="8.74" height="4.6" fill="#238a8d"/>
<rect x="288.26" y="676.3" width="4.62" height="4.6" fill="#25848e"/>
<rect x="292.38" y="676.3" width="4.62" height="4.6" fill="#2c728e"/>
<rect x="296.49" y="676.3" width="4.62" height="4.6" fill="#38598c"/>
<rect x="300.61" y="676.3" width="4.62" height="4.6" fill="#463480"/>
<rect x="304.73" y="676.3" width="4.62" height="4.6" fill="#481c6e"/>
<rect x="308.85" y="676.3" width="4.62" height="4.6" fill="#460a5d"/>
<rect x="312.97" y="676.3" width="4.62" height="4.6" fill="#471365"/>
<rect x="317.09" y="676.3" width="4.62" height="4.6" fill="#481c6e"/>
<rect x="321.21" y="676.3" width="4.62" height="4.6" fill="#482475"/>
<rect x="325.33" y="676.3" width="4.62" height="4.6" fill="#472d7b"/>
<rect x="329.45" y="676.3" width="4.62" height="4.6" fill="#463480"/>
<rect x="333.57" y="676.3" width="4.62" height="4.6" fill="#414487"/>
<rect x="337.69" y="676.3" width="4.62" height="4.6" fill="#3e4a89"/>
<rect x="341.81" y="676.3" width="4.62" height="4.6" fill="#38598c"/>
<rect x="345.93" y="676.3" width="4.62" height="4.6" fill="#355f8d"/>
<rect x="350.05" y="676.3" width="4.62" height="4.6" fill="#2f6c8e"/>
<rect x="354.17" y="676.3" width="4.62" height="4.6" fill="#2c728e"/>
<rect x="358.29" y="676.3" width="4.62" height="4.6" fill="#2a788e"/>
<rect x="362.41" y="676.3" width="12.86" height="4.6" fill="#277e8e"/>
<rect x="374.76" y="676.3" width="4.62" height="4.6" fill="#2a788e"/>
<rect x="378.88" y="676.3" width="4.62" height="4.6" fill="#2c728e"/>
<rect x="383" y="676.3" width="4.62" height="4.6" fill="#355f8d"/>
<rect x="387.12" y="676.3" width="4.62" height="4.6" fill="#414487"/>
<rect x="391.24" y="676.3" width="4.62" height="4.6" fill="#482475"/>
<rect x="395.36" y="676.3" width="4.62" height="4.6" fill="#471365"/>
<rect x="399.48" y="676.3" width="4.62" height="4.6" fill="#460a5d"/>
</g>
<rect x="280.15" y="557.45" width="98.1" height="98.1" fill="none" stroke="#ff0000" stroke-width="1.2"/>
<path d="M321.84,606.5 H292.41 M329.2,599.14 V569.71 M336.56,606.5 H365.99 M329.2,613.86 V643.29 " stroke="#ff0000" stroke-width="1.2"/>
<text x="329.2" y="546.8" font-family="Liberation Sans" font-size="11.45" fill="#ff0000" stroke="#ff0000" stroke-width="0.22" textLength="8.08" lengthAdjust="spacingAndGlyphs" text-anchor="middle" xml:space="preserve">N</text>
<text x="264.7" y="610.5" font-family="Liberation Sans" font-size="11.45" fill="#ff0000" stroke="#ff0000" stroke-width="0.22" textLength="6.82" lengthAdjust="spacingAndGlyphs" text-anchor="middle" xml:space="preserve">E</text>
<line x1="263.8" y1="680.4" x2="263.8" y2="683.9" stroke="#262626" stroke-width="1"/>
<text x="263.8" y="696.4" font-family="Liberation Sans" font-size="11.45" fill="#262626" stroke="#262626" stroke-width="0.22" textLength="15.92" lengthAdjust="spacingAndGlyphs" text-anchor="middle" xml:space="preserve">−4</text>
<line x1="296.5" y1="680.4" x2="296.5" y2="683.9" stroke="#262626" stroke-width="1"/>
<text x="296.5" y="696.4" font-family="Liberation Sans" font-size="11.45" fill="#262626" stroke="#262626" stroke-width="0.22" textLength="15.92" lengthAdjust="spacingAndGlyphs" text-anchor="middle" xml:space="preserve">−2</text>
<line x1="329.2" y1="680.4" x2="329.2" y2="683.9" stroke="#262626" stroke-width="1"/>
<text x="329.2" y="696.4" font-family="Liberation Sans" font-size="11.45" fill="#262626" stroke="#262626" stroke-width="0.22" textLength="6.87" lengthAdjust="spacingAndGlyphs" text-anchor="middle" xml:space="preserve">0</text>
<line x1="361.9" y1="680.4" x2="361.9" y2="683.9" stroke="#262626" stroke-width="1"/>
<text x="361.9" y="696.4" font-family="Liberation Sans" font-size="11.45" fill="#262626" stroke="#262626" stroke-width="0.22" textLength="6.87" lengthAdjust="spacingAndGlyphs" text-anchor="middle" xml:space="preserve">2</text>
<line x1="394.6" y1="680.4" x2="394.6" y2="683.9" stroke="#262626" stroke-width="1"/>
<text x="394.6" y="696.4" font-family="Liberation Sans" font-size="11.45" fill="#262626" stroke="#262626" stroke-width="0.22" textLength="6.87" lengthAdjust="spacingAndGlyphs" text-anchor="middle" xml:space="preserve">4</text>
<line x1="251.8" y1="672.1" x2="255.3" y2="672.1" stroke="#262626" stroke-width="1"/>
<text x="249.3" y="676" font-family="Liberation Sans" font-size="11.45" fill="#262626" stroke="#262626" stroke-width="0.22" textLength="15.92" lengthAdjust="spacingAndGlyphs" text-anchor="end" xml:space="preserve">−4</text>
<line x1="251.8" y1="639.3" x2="255.3" y2="639.3" stroke="#262626" stroke-width="1"/>
<text x="249.3" y="643.2" font-family="Liberation Sans" font-size="11.45" fill="#262626" stroke="#262626" stroke-width="0.22" textLength="15.92" lengthAdjust="spacingAndGlyphs" text-anchor="end" xml:space="preserve">−2</text>
<line x1="251.8" y1="606.5" x2="255.3" y2="606.5" stroke="#262626" stroke-width="1"/>
<text x="249.3" y="610.4" font-family="Liberation Sans" font-size="11.45" fill="#262626" stroke="#262626" stroke-width="0.22" textLength="6.87" lengthAdjust="spacingAndGlyphs" text-anchor="end" xml:space="preserve">0</text>
<line x1="251.8" y1="573.7" x2="255.3" y2="573.7" stroke="#262626" stroke-width="1"/>
<text x="249.3" y="577.6" font-family="Liberation Sans" font-size="11.45" fill="#262626" stroke="#262626" stroke-width="0.22" textLength="6.87" lengthAdjust="spacingAndGlyphs" text-anchor="end" xml:space="preserve">2</text>
<line x1="251.8" y1="540.9" x2="255.3" y2="540.9" stroke="#262626" stroke-width="1"/>
<text x="249.3" y="544.8" font-family="Liberation Sans" font-size="11.45" fill="#262626" stroke="#262626" stroke-width="0.22" textLength="6.87" lengthAdjust="spacingAndGlyphs" text-anchor="end" xml:space="preserve">4</text>
<rect x="255.3" y="532.7" width="148.3" height="147.7" fill="none" stroke="#262626" stroke-width="1.2"/>
<text x="329.2" y="706.4" font-family="Liberation Sans" font-size="11.24" fill="#262626" stroke="#262626" stroke-width="0.22" textLength="99.73" lengthAdjust="spacingAndGlyphs" text-anchor="middle" xml:space="preserve">s/b: 3.92 +/- 0.099</text>
</svg></body></html>
